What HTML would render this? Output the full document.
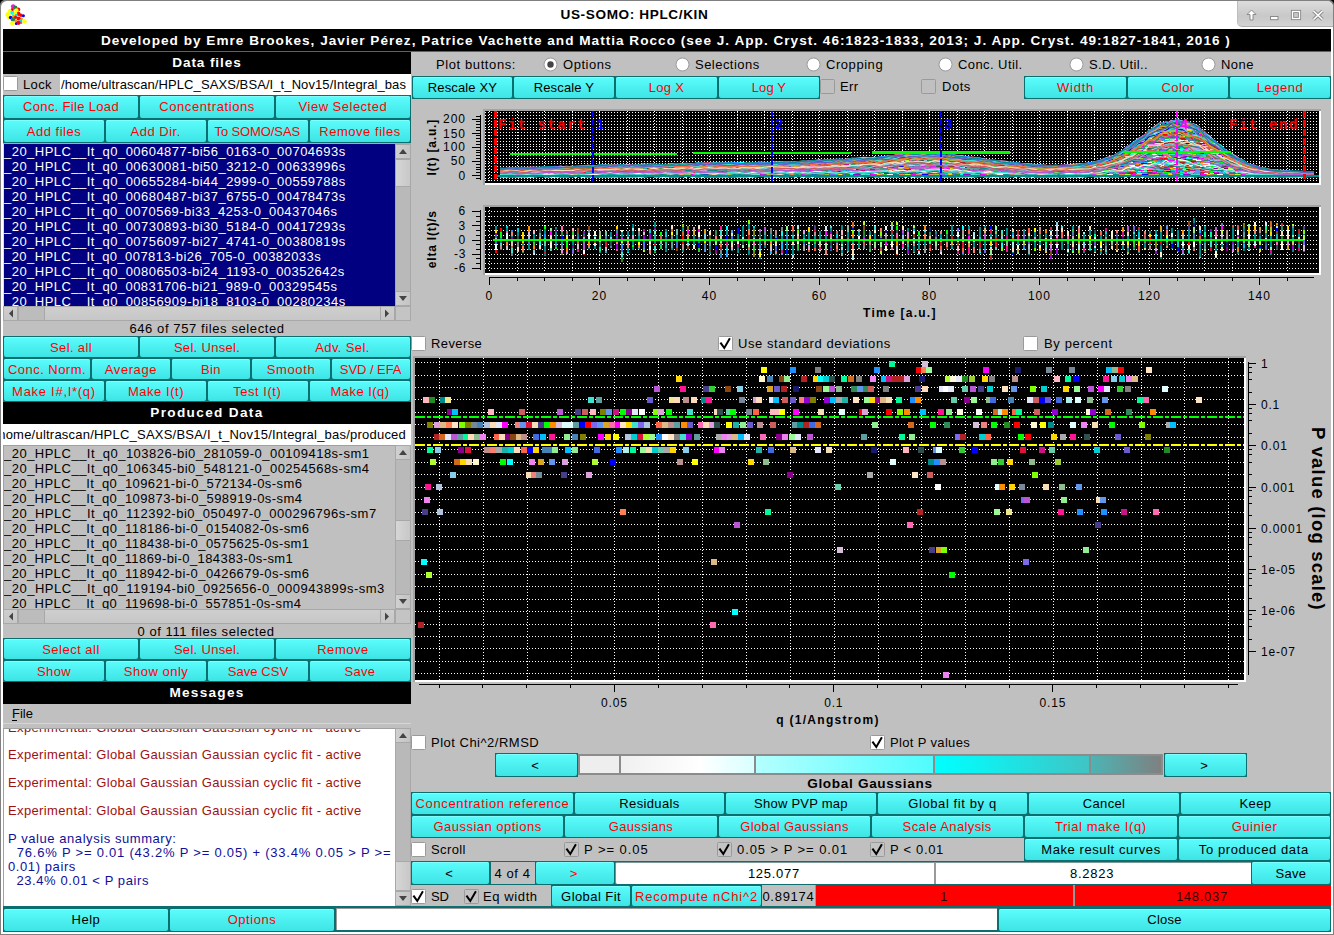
<!DOCTYPE html><html><head><meta charset="utf-8"><style>
html,body{margin:0;padding:0;width:1334px;height:935px;overflow:hidden;background:#7a7a7a}
div{position:absolute}
.t{white-space:pre;font-family:"Liberation Sans",sans-serif;overflow:visible}
.bo{background:#0b6f6f}
.bi{position:absolute;left:1px;top:1px;right:1px;bottom:1px;border-radius:2px;background:linear-gradient(#5cfcfc,#3ee4e4);box-shadow:inset 0 1px 0 #7dffff}
</style></head><body>
<div style="left:0px;top:0px;width:1334px;height:935px;background:#000"></div>
<div style="left:0px;top:0px;width:1334px;height:935px;background:#808080;border-radius:5px 5px 0 0"></div>
<div style="left:1px;top:1px;width:1332px;height:933px;background:#fff;border-radius:6px 6px 0 0"></div>
<div style="left:3px;top:29px;width:1328px;height:903px;background:#c0c0c0"></div>
<div style="left:1237px;top:1px;width:95px;height:25px;background:linear-gradient(#dcdcdc,#c8c8c8 60%,#d4d4d4);border-radius:0 6px 0 5px;border-left:1px solid #bdbdbd;border-bottom:1px solid #b0b0b0"></div>
<svg style="position:absolute;left:1240px;top:4px" width="92" height="22">
<path d="M11.5 6 L7 10.5 L10 10.5 L10 16 L13 16 L13 10.5 L16 10.5 Z" fill="#fff" stroke="#8a8a8a" stroke-width="1"/>
<rect x="30.5" y="12.5" width="7.5" height="3.2" fill="#fff" stroke="#8a8a8a" stroke-width="1"/>
<rect x="52.5" y="7.5" width="7" height="7" fill="#c8c8c8" stroke="#8a8a8a" stroke-width="3.2"/><rect x="52.5" y="7.5" width="7" height="7" fill="none" stroke="#fff" stroke-width="1.3"/>
<path d="M73.5 7 L82.5 15.5 M82.5 7 L73.5 15.5" stroke="#8a8a8a" stroke-width="3.4"/><path d="M73.5 7 L82.5 15.5 M82.5 7 L73.5 15.5" stroke="#fff" stroke-width="1.6"/>
</svg>
<svg style="position:absolute;left:0;top:0" width="32" height="30"><circle cx="13.1" cy="6.4" r="2.1999999999999997" fill="#e020e0"/><circle cx="15.2" cy="7.6" r="2.1999999999999997" fill="#2e7d52"/><circle cx="18.3" cy="9.6" r="2.0" fill="#ff0000"/><circle cx="12.2" cy="9.6" r="1.6" fill="#ff0000"/><circle cx="9.8" cy="10.8" r="1.9000000000000001" fill="#ffff00"/><circle cx="16.5" cy="10.4" r="2.1" fill="#ffff00"/><circle cx="18.5" cy="13.8" r="2.1" fill="#ff0000"/><circle cx="21" cy="15.3" r="1.8" fill="#ff0000"/><circle cx="23.4" cy="15.8" r="1.5" fill="#0000ff"/><circle cx="12.3" cy="12.8" r="2.1" fill="#00ffff"/><circle cx="15.5" cy="13.4" r="1.8" fill="#ffff00"/><circle cx="8" cy="14.4" r="2.5" fill="#ffff00"/><circle cx="16.3" cy="15.4" r="1.6" fill="#00e0e0"/><circle cx="13.5" cy="16" r="1.5" fill="#ff9900"/><circle cx="8.5" cy="18" r="1.5" fill="#ffff00"/><circle cx="10.6" cy="17.5" r="1.8" fill="#0000ff"/><circle cx="15.5" cy="17.3" r="1.6" fill="#ff0000"/><circle cx="21.5" cy="18.8" r="1.4000000000000001" fill="#ff9900"/><circle cx="18.6" cy="18.5" r="2.1" fill="#ff0000"/><circle cx="13" cy="19.5" r="2.3" fill="#2e7d52"/><circle cx="16" cy="20.8" r="1.5" fill="#ff9900"/><circle cx="20.8" cy="20.5" r="1.6" fill="#00e0e0"/><circle cx="21.1" cy="22.8" r="1.3" fill="#6a7aff"/><circle cx="16.3" cy="23.4" r="1.5" fill="#0000ff"/><circle cx="24.5" cy="21.5" r="2.3" fill="#ffff00"/><circle cx="18.5" cy="22.8" r="2.1" fill="#ff0000"/><circle cx="12.4" cy="23.3" r="2.3" fill="#ffff00"/></svg>
<div class="t" style="left:560.5px;top:5.2px;height:19.6px;line-height:19.6px;font-size:13.6px;letter-spacing:0.617px;color:#000;font-weight:bold;">US-SOMO: HPLC/KIN</div>
<div style="left:3px;top:29px;width:1328px;height:22px;background:#000"></div>
<div style="left:3px;top:51px;width:1328px;height:1px;background:#008b8b"></div>
<div class="t" style="left:101.0px;top:30.7px;height:19.6px;line-height:19.6px;font-size:13.6px;letter-spacing:1.011px;color:#fff;font-weight:bold;">Developed by Emre Brookes, Javier Pérez, Patrice Vachette and Mattia Rocco (see J. App. Cryst. 46:1823-1833, 2013; J. App. Cryst. 49:1827-1841, 2016 )</div>
<div style="left:3px;top:52px;width:408px;height:22px;background:#000"></div>
<div class="t" style="left:172.3px;top:53.2px;height:19.6px;line-height:19.6px;font-size:13.6px;letter-spacing:0.883px;color:#fff;font-weight:bold;">Data files</div>
<div style="left:60px;top:74px;width:351px;height:21px;background:#fff;"></div>
<div style="left:3px;top:76px;width:13px;height:13px;border:1px solid #9a9a9a;background:#fff;border-radius:1.5px"></div>
<div class="t" style="left:23.0px;top:74.5px;height:19px;line-height:19px;font-size:13px;letter-spacing:0.385px;color:#000;">Lock</div>
<div class="t" style="left:61.0px;top:74.5px;height:19px;line-height:19px;font-size:13px;letter-spacing:0.089px;color:#000;">/home/ultrascan/HPLC_SAXS/BSA/I_t_Nov15/Integral_bas</div>
<div class="bo" style="left:3px;top:95px;width:136px;height:24px;"><div class="bi" style="top:1px"></div></div>
<div class="t" style="left:23.1px;top:96.5px;height:19px;line-height:19px;font-size:13px;letter-spacing:0.322px;color:#ff0000;">Conc. File Load</div>
<div class="bo" style="left:139px;top:95px;width:136px;height:24px;"><div class="bi" style="top:1px"></div></div>
<div class="t" style="left:159.2px;top:96.5px;height:19px;line-height:19px;font-size:13px;letter-spacing:0.590px;color:#ff0000;">Concentrations</div>
<div class="bo" style="left:275px;top:95px;width:136px;height:24px;"><div class="bi" style="top:1px"></div></div>
<div class="t" style="left:298.6px;top:96.5px;height:19px;line-height:19px;font-size:13px;letter-spacing:0.494px;color:#ff0000;">View Selected</div>
<div class="bo" style="left:3px;top:119px;width:102px;height:24px;"><div class="bi" style="top:1px"></div></div>
<div class="t" style="left:26.8px;top:121.5px;height:19px;line-height:19px;font-size:13px;letter-spacing:0.502px;color:#ff0000;">Add files</div>
<div class="bo" style="left:105px;top:119px;width:102px;height:24px;"><div class="bi" style="top:1px"></div></div>
<div class="t" style="left:130.5px;top:121.5px;height:19px;line-height:19px;font-size:13px;letter-spacing:0.506px;color:#ff0000;">Add Dir.</div>
<div class="bo" style="left:207px;top:119px;width:102px;height:24px;"><div class="bi" style="top:1px"></div></div>
<div class="t" style="left:214.5px;top:121.5px;height:19px;line-height:19px;font-size:13px;letter-spacing:-0.105px;color:#ff0000;">To SOMO/SAS</div>
<div class="bo" style="left:309px;top:119px;width:102px;height:24px;"><div class="bi" style="top:1px"></div></div>
<div class="t" style="left:319.3px;top:121.5px;height:19px;line-height:19px;font-size:13px;letter-spacing:0.527px;color:#ff0000;">Remove files</div>
<div style="left:3px;top:143px;width:408px;height:1px;background:#aaa"></div>
<div style="left:3px;top:144px;width:392px;height:162px;background:#000080;border-left:1px solid #ddd;box-sizing:border-box"></div>
<div style="left:4px;top:144px;width:391px;height:162px;overflow:hidden">
<div class="t" style="left:0.0px;top:-2.0px;height:19px;line-height:19px;font-size:13px;letter-spacing:0.465px;color:#fff;">_20_HPLC__It_q0_00604877-bi56_0163-0_00704693s</div>
<div class="t" style="left:0.0px;top:13.0px;height:19px;line-height:19px;font-size:13px;letter-spacing:0.465px;color:#fff;">_20_HPLC__It_q0_00630081-bi50_3212-0_00633996s</div>
<div class="t" style="left:0.0px;top:28.0px;height:19px;line-height:19px;font-size:13px;letter-spacing:0.465px;color:#fff;">_20_HPLC__It_q0_00655284-bi44_2999-0_00559788s</div>
<div class="t" style="left:0.0px;top:43.0px;height:19px;line-height:19px;font-size:13px;letter-spacing:0.465px;color:#fff;">_20_HPLC__It_q0_00680487-bi37_6755-0_00478473s</div>
<div class="t" style="left:0.0px;top:58.0px;height:19px;line-height:19px;font-size:13px;letter-spacing:0.454px;color:#fff;">_20_HPLC__It_q0_0070569-bi33_4253-0_00437046s</div>
<div class="t" style="left:0.0px;top:73.0px;height:19px;line-height:19px;font-size:13px;letter-spacing:0.465px;color:#fff;">_20_HPLC__It_q0_00730893-bi30_5184-0_00417293s</div>
<div class="t" style="left:0.0px;top:88.0px;height:19px;line-height:19px;font-size:13px;letter-spacing:0.465px;color:#fff;">_20_HPLC__It_q0_00756097-bi27_4741-0_00380819s</div>
<div class="t" style="left:0.0px;top:103.0px;height:19px;line-height:19px;font-size:13px;letter-spacing:0.432px;color:#fff;">_20_HPLC__It_q0_007813-bi26_705-0_00382033s</div>
<div class="t" style="left:0.0px;top:118.0px;height:19px;line-height:19px;font-size:13px;letter-spacing:0.465px;color:#fff;">_20_HPLC__It_q0_00806503-bi24_1193-0_00352642s</div>
<div class="t" style="left:0.0px;top:133.0px;height:19px;line-height:19px;font-size:13px;letter-spacing:0.454px;color:#fff;">_20_HPLC__It_q0_00831706-bi21_989-0_00329545s</div>
<div class="t" style="left:0.0px;top:148.0px;height:19px;line-height:19px;font-size:13px;letter-spacing:0.465px;color:#fff;">_20_HPLC__It_q0_00856909-bi18_8103-0_00280234s</div>
</div>
<div style="left:395px;top:144px;width:16px;height:162px;background:#b9b9b9;border:1px solid #a8a8a8;box-sizing:border-box"></div>
<div style="left:395px;top:144px;width:16px;height:15px;background:linear-gradient(90deg,#d0d0d0,#c4c4c4);border:1px solid #a8a8a8;box-sizing:border-box"></div>
<div style="left:395px;top:291px;width:16px;height:15px;background:linear-gradient(90deg,#d0d0d0,#c4c4c4);border:1px solid #a8a8a8;box-sizing:border-box"></div>
<div style="left:395px;top:159px;width:16px;height:28px;background:linear-gradient(90deg,#d6d6d6,#c8c8c8);border:1px solid #a8a8a8;box-sizing:border-box"></div>
<svg style="position:absolute;left:395px;top:144px" width="16" height="162"><path d="M4.0 10 L12.0 10 L8.0 5 Z" fill="#444"/><path d="M4.0 152 L12.0 152 L8.0 157 Z" fill="#444"/></svg>
<div style="left:3px;top:306px;width:392px;height:15px;background:linear-gradient(#cfcfcf,#c6c6c6)"></div>
<div style="left:3px;top:306px;width:392px;height:15px;border:1px solid #a8a8a8;box-sizing:border-box"></div>
<div style="left:3px;top:306px;width:15px;height:15px;border:1px solid #a8a8a8;box-sizing:border-box"></div>
<div style="left:380px;top:306px;width:15px;height:15px;border:1px solid #a8a8a8;box-sizing:border-box"></div>
<div style="left:18px;top:306px;width:27px;height:15px;background:#bcbcbc;border:1px solid #a8a8a8;box-sizing:border-box"></div>
<svg style="position:absolute;left:3px;top:306px" width="392" height="15"><path d="M6 7.5 L10 3.5 L10 11.5 Z" fill="#444"/><path d="M386 7.5 L382 3.5 L382 11.5 Z" fill="#444"/></svg>
<div style="left:395px;top:306px;width:16px;height:15px;background:#c4c4c4;border:1px solid #a8a8a8;box-sizing:border-box"></div>
<div class="t" style="left:129.4px;top:319.0px;height:19px;line-height:19px;font-size:13px;letter-spacing:0.600px;color:#000;">646 of 757 files selected</div>
<div class="bo" style="left:3px;top:336px;width:136px;height:22px;"><div class="bi" style="top:1px"></div></div>
<div class="t" style="left:50.0px;top:337.5px;height:19px;line-height:19px;font-size:13px;letter-spacing:0.371px;color:#ff0000;">Sel. all</div>
<div class="bo" style="left:139px;top:336px;width:136px;height:22px;"><div class="bi" style="top:1px"></div></div>
<div class="t" style="left:173.9px;top:337.5px;height:19px;line-height:19px;font-size:13px;letter-spacing:0.312px;color:#ff0000;">Sel. Unsel.</div>
<div class="bo" style="left:275px;top:336px;width:136px;height:22px;"><div class="bi" style="top:1px"></div></div>
<div class="t" style="left:315.3px;top:337.5px;height:19px;line-height:19px;font-size:13px;letter-spacing:0.368px;color:#ff0000;">Adv. Sel.</div>
<div class="bo" style="left:3px;top:358px;width:88px;height:22px;"><div class="bi" style="top:1px"></div></div>
<div class="t" style="left:8.0px;top:359.5px;height:19px;line-height:19px;font-size:13px;letter-spacing:0.460px;color:#ff0000;">Conc. Norm.</div>
<div class="bo" style="left:91px;top:358px;width:80px;height:22px;"><div class="bi" style="top:1px"></div></div>
<div class="t" style="left:104.8px;top:359.5px;height:19px;line-height:19px;font-size:13px;letter-spacing:0.580px;color:#ff0000;">Average</div>
<div class="bo" style="left:171px;top:358px;width:80px;height:22px;"><div class="bi" style="top:1px"></div></div>
<div class="t" style="left:200.9px;top:359.5px;height:19px;line-height:19px;font-size:13px;letter-spacing:0.447px;color:#ff0000;">Bin</div>
<div class="bo" style="left:251px;top:358px;width:80px;height:22px;"><div class="bi" style="top:1px"></div></div>
<div class="t" style="left:266.7px;top:359.5px;height:19px;line-height:19px;font-size:13px;letter-spacing:0.636px;color:#ff0000;">Smooth</div>
<div class="bo" style="left:331px;top:358px;width:80px;height:22px;"><div class="bi" style="top:1px"></div></div>
<div class="t" style="left:339.8px;top:359.5px;height:19px;line-height:19px;font-size:13px;letter-spacing:-0.049px;color:#ff0000;">SVD / EFA</div>
<div class="bo" style="left:3px;top:380px;width:102px;height:22px;"><div class="bi" style="top:1px"></div></div>
<div class="t" style="left:12.1px;top:381.5px;height:19px;line-height:19px;font-size:13px;letter-spacing:0.720px;color:#ff0000;">Make I#,I*(q)</div>
<div class="bo" style="left:105px;top:380px;width:102px;height:22px;"><div class="bi" style="top:1px"></div></div>
<div class="t" style="left:127.9px;top:381.5px;height:19px;line-height:19px;font-size:13px;letter-spacing:0.539px;color:#ff0000;">Make I(t)</div>
<div class="bo" style="left:207px;top:380px;width:102px;height:22px;"><div class="bi" style="top:1px"></div></div>
<div class="t" style="left:233.3px;top:381.5px;height:19px;line-height:19px;font-size:13px;letter-spacing:0.519px;color:#ff0000;">Test I(t)</div>
<div class="bo" style="left:309px;top:380px;width:102px;height:22px;"><div class="bi" style="top:1px"></div></div>
<div class="t" style="left:330.4px;top:381.5px;height:19px;line-height:19px;font-size:13px;letter-spacing:0.477px;color:#ff0000;">Make I(q)</div>
<div style="left:3px;top:402px;width:408px;height:22px;background:#000"></div>
<div class="t" style="left:150.3px;top:403.2px;height:19.6px;line-height:19.6px;font-size:13.6px;letter-spacing:1.335px;color:#fff;font-weight:bold;">Produced Data</div>
<div style="left:3px;top:424px;width:408px;height:21px;background:#fff;"></div>
<div style="left:3px;top:424px;width:408px;height:21px;overflow:hidden">
<div class="t" style="left:-4.8px;top:1.0px;height:19px;line-height:19px;font-size:13px;letter-spacing:0.221px;color:#000;">home/ultrascan/HPLC_SAXS/BSA/I_t_Nov15/Integral_bas/produced</div>
</div>
<div style="left:3px;top:445px;width:392px;height:164px;background:#c0c0c0;border:1px solid #a0a0a0;border-right:none;border-bottom:none;box-sizing:border-box"></div>
<div style="left:4px;top:446px;width:391px;height:163px;overflow:hidden">
<div class="t" style="left:0.0px;top:-2.5px;height:19px;line-height:19px;font-size:13px;letter-spacing:0.480px;color:#000;">_20_HPLC__It_q0_103826-bi0_281059-0_00109418s-sm1</div>
<div class="t" style="left:0.0px;top:12.5px;height:19px;line-height:19px;font-size:13px;letter-spacing:0.480px;color:#000;">_20_HPLC__It_q0_106345-bi0_548121-0_00254568s-sm4</div>
<div class="t" style="left:0.0px;top:27.5px;height:19px;line-height:19px;font-size:13px;letter-spacing:0.419px;color:#000;">_20_HPLC__It_q0_109621-bi-0_572134-0s-sm6</div>
<div class="t" style="left:0.0px;top:42.5px;height:19px;line-height:19px;font-size:13px;letter-spacing:0.419px;color:#000;">_20_HPLC__It_q0_109873-bi-0_598919-0s-sm4</div>
<div class="t" style="left:0.0px;top:57.5px;height:19px;line-height:19px;font-size:13px;letter-spacing:0.489px;color:#000;">_20_HPLC__It_q0_112392-bi0_050497-0_000296796s-sm7</div>
<div class="t" style="left:0.0px;top:72.5px;height:19px;line-height:19px;font-size:13px;letter-spacing:0.431px;color:#000;">_20_HPLC__It_q0_118186-bi-0_0154082-0s-sm6</div>
<div class="t" style="left:0.0px;top:87.5px;height:19px;line-height:19px;font-size:13px;letter-spacing:0.431px;color:#000;">_20_HPLC__It_q0_118438-bi-0_0575625-0s-sm1</div>
<div class="t" style="left:0.0px;top:102.5px;height:19px;line-height:19px;font-size:13px;letter-spacing:0.406px;color:#000;">_20_HPLC__It_q0_11869-bi-0_184383-0s-sm1</div>
<div class="t" style="left:0.0px;top:117.5px;height:19px;line-height:19px;font-size:13px;letter-spacing:0.431px;color:#000;">_20_HPLC__It_q0_118942-bi-0_0426679-0s-sm6</div>
<div class="t" style="left:0.0px;top:132.5px;height:19px;line-height:19px;font-size:13px;letter-spacing:0.498px;color:#000;">_20_HPLC__It_q0_119194-bi0_0925656-0_000943899s-sm3</div>
<div class="t" style="left:0.0px;top:147.5px;height:19px;line-height:19px;font-size:13px;letter-spacing:0.419px;color:#000;">_20_HPLC__It_q0_119698-bi-0_557851-0s-sm4</div>
</div>
<div style="left:395px;top:445px;width:16px;height:164px;background:#b9b9b9;border:1px solid #a8a8a8;box-sizing:border-box"></div>
<div style="left:395px;top:445px;width:16px;height:15px;background:linear-gradient(90deg,#d0d0d0,#c4c4c4);border:1px solid #a8a8a8;box-sizing:border-box"></div>
<div style="left:395px;top:594px;width:16px;height:15px;background:linear-gradient(90deg,#d0d0d0,#c4c4c4);border:1px solid #a8a8a8;box-sizing:border-box"></div>
<div style="left:395px;top:520px;width:16px;height:21px;background:linear-gradient(90deg,#d6d6d6,#c8c8c8);border:1px solid #a8a8a8;box-sizing:border-box"></div>
<svg style="position:absolute;left:395px;top:445px" width="16" height="164"><path d="M4.0 10 L12.0 10 L8.0 5 Z" fill="#444"/><path d="M4.0 154 L12.0 154 L8.0 159 Z" fill="#444"/></svg>
<div style="left:3px;top:609px;width:392px;height:15px;background:linear-gradient(#cfcfcf,#c6c6c6)"></div>
<div style="left:3px;top:609px;width:392px;height:15px;border:1px solid #a8a8a8;box-sizing:border-box"></div>
<div style="left:3px;top:609px;width:15px;height:15px;border:1px solid #a8a8a8;box-sizing:border-box"></div>
<div style="left:380px;top:609px;width:15px;height:15px;border:1px solid #a8a8a8;box-sizing:border-box"></div>
<div style="left:18px;top:609px;width:27px;height:15px;background:#bcbcbc;border:1px solid #a8a8a8;box-sizing:border-box"></div>
<svg style="position:absolute;left:3px;top:609px" width="392" height="15"><path d="M6 7.5 L10 3.5 L10 11.5 Z" fill="#444"/><path d="M386 7.5 L382 3.5 L382 11.5 Z" fill="#444"/></svg>
<div style="left:395px;top:609px;width:16px;height:15px;background:#c4c4c4;border:1px solid #a8a8a8;box-sizing:border-box"></div>
<div class="t" style="left:137.4px;top:621.5px;height:19px;line-height:19px;font-size:13px;letter-spacing:0.584px;color:#000;">0 of 111 files selected</div>
<div class="bo" style="left:3px;top:638px;width:136px;height:22px;"><div class="bi" style="top:1px"></div></div>
<div class="t" style="left:42.2px;top:639.5px;height:19px;line-height:19px;font-size:13px;letter-spacing:0.485px;color:#ff0000;">Select all</div>
<div class="bo" style="left:139px;top:638px;width:136px;height:22px;"><div class="bi" style="top:1px"></div></div>
<div class="t" style="left:173.9px;top:639.5px;height:19px;line-height:19px;font-size:13px;letter-spacing:0.312px;color:#ff0000;">Sel. Unsel.</div>
<div class="bo" style="left:275px;top:638px;width:136px;height:22px;"><div class="bi" style="top:1px"></div></div>
<div class="t" style="left:317.2px;top:639.5px;height:19px;line-height:19px;font-size:13px;letter-spacing:0.548px;color:#ff0000;">Remove</div>
<div class="bo" style="left:3px;top:660px;width:102px;height:22px;"><div class="bi" style="top:1px"></div></div>
<div class="t" style="left:37.0px;top:661.5px;height:19px;line-height:19px;font-size:13px;letter-spacing:0.370px;color:#ff0000;">Show</div>
<div class="bo" style="left:105px;top:660px;width:102px;height:22px;"><div class="bi" style="top:1px"></div></div>
<div class="t" style="left:123.7px;top:661.5px;height:19px;line-height:19px;font-size:13px;letter-spacing:0.520px;color:#ff0000;">Show only</div>
<div class="bo" style="left:207px;top:660px;width:102px;height:22px;"><div class="bi" style="top:1px"></div></div>
<div class="t" style="left:227.8px;top:661.5px;height:19px;line-height:19px;font-size:13px;letter-spacing:0.047px;color:#ff0000;">Save CSV</div>
<div class="bo" style="left:309px;top:660px;width:102px;height:22px;"><div class="bi" style="top:1px"></div></div>
<div class="t" style="left:344.5px;top:661.5px;height:19px;line-height:19px;font-size:13px;letter-spacing:0.324px;color:#ff0000;">Save</div>
<div style="left:3px;top:682px;width:408px;height:22px;background:#000"></div>
<div class="t" style="left:169.4px;top:683.2px;height:19.6px;line-height:19.6px;font-size:13.6px;letter-spacing:1.270px;color:#fff;font-weight:bold;">Messages</div>
<div class="t" style="left:12.0px;top:704.0px;height:19px;line-height:19px;font-size:13px;letter-spacing:0.013px;color:#000;">File</div>
<div style="left:12px;top:720px;width:5px;height:1px;background:#000"></div>
<div style="left:3px;top:723px;width:408px;height:1px;background:#d6d6d6"></div>
<div style="left:3px;top:728px;width:392px;height:178px;background:#fff;border:1px solid #a0a0a0;border-right:none;border-bottom:none;box-sizing:border-box"></div>
<div style="left:395px;top:728px;width:16px;height:178px;background:#b9b9b9;border:1px solid #a8a8a8;box-sizing:border-box"></div>
<div style="left:395px;top:728px;width:16px;height:15px;background:linear-gradient(90deg,#d0d0d0,#c4c4c4);border:1px solid #a8a8a8;box-sizing:border-box"></div>
<div style="left:395px;top:891px;width:16px;height:15px;background:linear-gradient(90deg,#d0d0d0,#c4c4c4);border:1px solid #a8a8a8;box-sizing:border-box"></div>
<div style="left:395px;top:861px;width:16px;height:30px;background:linear-gradient(90deg,#d6d6d6,#c8c8c8);border:1px solid #a8a8a8;box-sizing:border-box"></div>
<svg style="position:absolute;left:395px;top:728px" width="16" height="178"><path d="M4.0 10 L12.0 10 L8.0 5 Z" fill="#444"/><path d="M4.0 168 L12.0 168 L8.0 173 Z" fill="#444"/></svg>
<div style="left:4px;top:729px;width:391px;height:177px;overflow:hidden">
<div class="t" style="left:4.0px;top:-11.5px;height:19px;line-height:19px;font-size:13px;letter-spacing:0.366px;color:#a01010;">Experimental: Global Gaussian Gaussian cyclic fit - active</div>
<div class="t" style="left:4.0px;top:15.5px;height:19px;line-height:19px;font-size:13px;letter-spacing:0.366px;color:#a01010;">Experimental: Global Gaussian Gaussian cyclic fit - active</div>
<div class="t" style="left:4.0px;top:43.5px;height:19px;line-height:19px;font-size:13px;letter-spacing:0.366px;color:#a01010;">Experimental: Global Gaussian Gaussian cyclic fit - active</div>
<div class="t" style="left:4.0px;top:71.5px;height:19px;line-height:19px;font-size:13px;letter-spacing:0.366px;color:#a01010;">Experimental: Global Gaussian Gaussian cyclic fit - active</div>
<div class="t" style="left:4.0px;top:99.5px;height:19px;line-height:19px;font-size:13px;letter-spacing:0.565px;color:#10109a;">P value analysis summary:</div>
<div class="t" style="left:4.0px;top:113.5px;height:19px;line-height:19px;font-size:13px;letter-spacing:0.779px;color:#10109a;">  76.6% P &gt;= 0.01 (43.2% P &gt;= 0.05) + (33.4% 0.05 &gt; P &gt;=</div>
<div class="t" style="left:4.0px;top:127.5px;height:19px;line-height:19px;font-size:13px;letter-spacing:0.593px;color:#10109a;">0.01) pairs</div>
<div class="t" style="left:4.0px;top:141.5px;height:19px;line-height:19px;font-size:13px;letter-spacing:0.589px;color:#10109a;">  23.4% 0.01 &lt; P pairs</div>
</div>
<div class="t" style="left:436.0px;top:54.5px;height:19px;line-height:19px;font-size:13px;letter-spacing:0.595px;color:#000;">Plot buttons:</div>
<svg style="position:absolute;left:543px;top:57px" width="15" height="15"><circle cx="7.5" cy="7.5" r="6.5" fill="#fff" stroke="#9a9a9a" stroke-width="1"/><circle cx=7.5 cy=7.5 r=3.2 fill=#444 /></svg>
<div class="t" style="left:563.0px;top:54.5px;height:19px;line-height:19px;font-size:13px;letter-spacing:0.545px;color:#000;">Options</div>
<svg style="position:absolute;left:675px;top:57px" width="15" height="15"><circle cx="7.5" cy="7.5" r="6.5" fill="#fff" stroke="#9a9a9a" stroke-width="1"/></svg>
<div class="t" style="left:695.0px;top:54.5px;height:19px;line-height:19px;font-size:13px;letter-spacing:0.465px;color:#000;">Selections</div>
<svg style="position:absolute;left:806px;top:57px" width="15" height="15"><circle cx="7.5" cy="7.5" r="6.5" fill="#fff" stroke="#9a9a9a" stroke-width="1"/></svg>
<div class="t" style="left:826.0px;top:54.5px;height:19px;line-height:19px;font-size:13px;letter-spacing:0.552px;color:#000;">Cropping</div>
<svg style="position:absolute;left:938px;top:57px" width="15" height="15"><circle cx="7.5" cy="7.5" r="6.5" fill="#fff" stroke="#9a9a9a" stroke-width="1"/></svg>
<div class="t" style="left:958.0px;top:54.5px;height:19px;line-height:19px;font-size:13px;letter-spacing:0.422px;color:#000;">Conc. Util.</div>
<svg style="position:absolute;left:1069px;top:57px" width="15" height="15"><circle cx="7.5" cy="7.5" r="6.5" fill="#fff" stroke="#9a9a9a" stroke-width="1"/></svg>
<div class="t" style="left:1089.0px;top:54.5px;height:19px;line-height:19px;font-size:13px;letter-spacing:0.363px;color:#000;">S.D. Util..</div>
<svg style="position:absolute;left:1201px;top:57px" width="15" height="15"><circle cx="7.5" cy="7.5" r="6.5" fill="#fff" stroke="#9a9a9a" stroke-width="1"/></svg>
<div class="t" style="left:1221.0px;top:54.5px;height:19px;line-height:19px;font-size:13px;letter-spacing:0.448px;color:#000;">None</div>
<div class="bo" style="left:412px;top:76px;width:101px;height:23px;"><div class="bi" style="top:1px"></div></div>
<div class="t" style="left:427.8px;top:78.0px;height:19px;line-height:19px;font-size:13px;letter-spacing:0.139px;color:#000;">Rescale XY</div>
<div class="bo" style="left:513px;top:76px;width:102px;height:23px;"><div class="bi" style="top:1px"></div></div>
<div class="t" style="left:533.7px;top:78.0px;height:19px;line-height:19px;font-size:13px;letter-spacing:0.158px;color:#000;">Rescale Y</div>
<div class="bo" style="left:615px;top:76px;width:103px;height:23px;"><div class="bi" style="top:1px"></div></div>
<div class="t" style="left:648.8px;top:78.0px;height:19px;line-height:19px;font-size:13px;letter-spacing:0.278px;color:#ff0000;">Log X</div>
<div class="bo" style="left:718px;top:76px;width:102px;height:23px;"><div class="bi" style="top:1px"></div></div>
<div class="t" style="left:751.8px;top:78.0px;height:19px;line-height:19px;font-size:13px;letter-spacing:0.091px;color:#ff0000;">Log Y</div>
<div style="left:820px;top:79px;width:13px;height:13px;border:1px solid #9a9a9a;background:transparent;border-radius:1.5px"></div>
<div class="t" style="left:840.0px;top:77.0px;height:19px;line-height:19px;font-size:13px;letter-spacing:0.331px;color:#000;">Err</div>
<div style="left:921px;top:79px;width:13px;height:13px;border:1px solid #9a9a9a;background:transparent;border-radius:1.5px"></div>
<div class="t" style="left:942.0px;top:77.0px;height:19px;line-height:19px;font-size:13px;letter-spacing:0.547px;color:#000;">Dots</div>
<div class="bo" style="left:1024px;top:76px;width:103px;height:23px;"><div class="bi" style="top:1px"></div></div>
<div class="t" style="left:1057.1px;top:78.0px;height:19px;line-height:19px;font-size:13px;letter-spacing:0.731px;color:#ff0000;">Width</div>
<div class="bo" style="left:1127px;top:76px;width:102px;height:23px;"><div class="bi" style="top:1px"></div></div>
<div class="t" style="left:1161.6px;top:78.0px;height:19px;line-height:19px;font-size:13px;letter-spacing:0.366px;color:#ff0000;">Color</div>
<div class="bo" style="left:1229px;top:76px;width:102px;height:23px;"><div class="bi" style="top:1px"></div></div>
<div class="t" style="left:1256.7px;top:78.0px;height:19px;line-height:19px;font-size:13px;letter-spacing:0.521px;color:#ff0000;">Legend</div>
<div style="left:411px;top:336px;width:13px;height:13px;border:1px solid #9a9a9a;background:#fff;border-radius:1.5px"></div>
<div class="t" style="left:431.0px;top:333.5px;height:19px;line-height:19px;font-size:13px;letter-spacing:0.401px;color:#000;">Reverse</div>
<div style="left:718px;top:336px;width:13px;height:13px;border:1px solid #9a9a9a;background:#fff;border-radius:1.5px"></div>
<svg style="position:absolute;left:718px;top:336px" width="15" height="15"><path d="M3 7.4 L6.3 12 L11.4 3.2" stroke="#000" stroke-width="2" fill="none" stroke-linecap="square"/></svg>
<div class="t" style="left:738.0px;top:333.5px;height:19px;line-height:19px;font-size:13px;letter-spacing:0.579px;color:#000;">Use standard deviations</div>
<div style="left:1023px;top:336px;width:13px;height:13px;border:1px solid #9a9a9a;background:#fff;border-radius:1.5px"></div>
<div class="t" style="left:1044.0px;top:333.5px;height:19px;line-height:19px;font-size:13px;letter-spacing:0.650px;color:#000;">By percent</div>
<div style="left:411px;top:735px;width:13px;height:13px;border:1px solid #9a9a9a;background:#fff;border-radius:1.5px"></div>
<div class="t" style="left:431.0px;top:732.5px;height:19px;line-height:19px;font-size:13px;letter-spacing:0.496px;color:#000;">Plot Chi^2/RMSD</div>
<div style="left:870px;top:735px;width:13px;height:13px;border:1px solid #9a9a9a;background:#fff;border-radius:1.5px"></div>
<svg style="position:absolute;left:870px;top:735px" width="15" height="15"><path d="M3 7.4 L6.3 12 L11.4 3.2" stroke="#000" stroke-width="2" fill="none" stroke-linecap="square"/></svg>
<div class="t" style="left:890.0px;top:732.5px;height:19px;line-height:19px;font-size:13px;letter-spacing:0.343px;color:#000;">Plot P values</div>
<div class="bo" style="left:495px;top:753px;width:83px;height:24px;"><div class="bi" style="top:1px"></div></div>
<div class="t" style="left:531.2px;top:755.5px;height:19px;line-height:19px;font-size:13px;letter-spacing:2.966px;color:#000;">&lt;</div>
<div style="left:578px;top:754px;width:585px;height:21px;background:#8c8c8c"></div>
<div style="left:580px;top:756px;width:39px;height:17px;background:#eeeeee"></div>
<div style="left:621px;top:756px;width:133px;height:17px;background:linear-gradient(90deg,#f0f0f0,#ffffff 60%,#d8ffff)"></div>
<div style="left:756px;top:756px;width:177px;height:17px;background:linear-gradient(90deg,#b4ffff,#50fcfc)"></div>
<div style="left:935px;top:756px;width:154px;height:17px;background:linear-gradient(90deg,#00ffff,#10f0f0 30%,#40c4c4)"></div>
<div style="left:1091px;top:756px;width:70px;height:17px;background:linear-gradient(90deg,#4cb4b4,#808080)"></div>
<div class="bo" style="left:1164px;top:753px;width:83px;height:24px;"><div class="bi" style="top:1px"></div></div>
<div class="t" style="left:1200.2px;top:755.5px;height:19px;line-height:19px;font-size:13px;letter-spacing:2.966px;color:#000;">&gt;</div>
<div class="t" style="left:807.2px;top:774.2px;height:19.6px;line-height:19.6px;font-size:13.6px;letter-spacing:0.664px;color:#000;font-weight:bold;">Global Gaussians</div>
<div class="bo" style="left:411px;top:792px;width:163px;height:23px;"><div class="bi" style="top:1px"></div></div>
<div class="t" style="left:415.6px;top:794.0px;height:19px;line-height:19px;font-size:13px;letter-spacing:0.626px;color:#ff0000;">Concentration reference</div>
<div class="bo" style="left:574px;top:792px;width:151px;height:23px;"><div class="bi" style="top:1px"></div></div>
<div class="t" style="left:619.3px;top:794.0px;height:19px;line-height:19px;font-size:13px;letter-spacing:0.362px;color:#000;">Residuals</div>
<div class="bo" style="left:725px;top:792px;width:152px;height:23px;"><div class="bi" style="top:1px"></div></div>
<div class="t" style="left:754.1px;top:794.0px;height:19px;line-height:19px;font-size:13px;letter-spacing:0.231px;color:#000;">Show PVP map</div>
<div class="bo" style="left:877px;top:792px;width:151px;height:23px;"><div class="bi" style="top:1px"></div></div>
<div class="t" style="left:908.2px;top:794.0px;height:19px;line-height:19px;font-size:13px;letter-spacing:0.604px;color:#000;">Global fit by q</div>
<div class="bo" style="left:1028px;top:792px;width:152px;height:23px;"><div class="bi" style="top:1px"></div></div>
<div class="t" style="left:1082.7px;top:794.0px;height:19px;line-height:19px;font-size:13px;letter-spacing:0.370px;color:#000;">Cancel</div>
<div class="bo" style="left:1180px;top:792px;width:151px;height:23px;"><div class="bi" style="top:1px"></div></div>
<div class="t" style="left:1239.6px;top:794.0px;height:19px;line-height:19px;font-size:13px;letter-spacing:0.351px;color:#000;">Keep</div>
<div class="bo" style="left:411px;top:815px;width:153px;height:23px;"><div class="bi" style="top:1px"></div></div>
<div class="t" style="left:433.4px;top:817.0px;height:19px;line-height:19px;font-size:13px;letter-spacing:0.486px;color:#ff0000;">Gaussian options</div>
<div class="bo" style="left:564px;top:815px;width:154px;height:23px;"><div class="bi" style="top:1px"></div></div>
<div class="t" style="left:608.8px;top:817.0px;height:19px;line-height:19px;font-size:13px;letter-spacing:0.328px;color:#ff0000;">Gaussians</div>
<div class="bo" style="left:718px;top:815px;width:153px;height:23px;"><div class="bi" style="top:1px"></div></div>
<div class="t" style="left:740.2px;top:817.0px;height:19px;line-height:19px;font-size:13px;letter-spacing:0.373px;color:#ff0000;">Global Gaussians</div>
<div class="bo" style="left:871px;top:815px;width:153px;height:23px;"><div class="bi" style="top:1px"></div></div>
<div class="t" style="left:902.6px;top:817.0px;height:19px;line-height:19px;font-size:13px;letter-spacing:0.377px;color:#ff0000;">Scale Analysis</div>
<div class="bo" style="left:1024px;top:815px;width:154px;height:23px;"><div class="bi" style="top:1px"></div></div>
<div class="t" style="left:1054.9px;top:817.0px;height:19px;line-height:19px;font-size:13px;letter-spacing:0.561px;color:#ff0000;">Trial make I(q)</div>
<div class="bo" style="left:1178px;top:815px;width:153px;height:23px;"><div class="bi" style="top:1px"></div></div>
<div class="t" style="left:1231.7px;top:817.0px;height:19px;line-height:19px;font-size:13px;letter-spacing:0.537px;color:#ff0000;">Guinier</div>
<div style="left:411px;top:842px;width:13px;height:13px;border:1px solid #9a9a9a;background:#fff;border-radius:1.5px"></div>
<div class="t" style="left:431.0px;top:840.0px;height:19px;line-height:19px;font-size:13px;letter-spacing:0.385px;color:#000;">Scroll</div>
<div style="left:564px;top:842px;width:13px;height:13px;border:1px solid #9a9a9a;background:#c4c4c4;border-radius:1.5px"></div>
<svg style="position:absolute;left:564px;top:842px" width="15" height="15"><path d="M3 7.4 L6.3 12 L11.4 3.2" stroke="#000" stroke-width="2" fill="none" stroke-linecap="square"/></svg>
<div class="t" style="left:584.0px;top:840.0px;height:19px;line-height:19px;font-size:13px;letter-spacing:0.933px;color:#000;">P &gt;= 0.05</div>
<div style="left:717px;top:842px;width:13px;height:13px;border:1px solid #9a9a9a;background:#c4c4c4;border-radius:1.5px"></div>
<svg style="position:absolute;left:717px;top:842px" width="15" height="15"><path d="M3 7.4 L6.3 12 L11.4 3.2" stroke="#000" stroke-width="2" fill="none" stroke-linecap="square"/></svg>
<div class="t" style="left:737.0px;top:840.0px;height:19px;line-height:19px;font-size:13px;letter-spacing:0.931px;color:#000;">0.05 &gt; P &gt;= 0.01</div>
<div style="left:870px;top:842px;width:13px;height:13px;border:1px solid #9a9a9a;background:#c4c4c4;border-radius:1.5px"></div>
<svg style="position:absolute;left:870px;top:842px" width="15" height="15"><path d="M3 7.4 L6.3 12 L11.4 3.2" stroke="#000" stroke-width="2" fill="none" stroke-linecap="square"/></svg>
<div class="t" style="left:890.0px;top:840.0px;height:19px;line-height:19px;font-size:13px;letter-spacing:0.679px;color:#000;">P &lt; 0.01</div>
<div class="bo" style="left:1024px;top:838px;width:154px;height:23px;"><div class="bi" style="top:1px"></div></div>
<div class="t" style="left:1041.3px;top:840.0px;height:19px;line-height:19px;font-size:13px;letter-spacing:0.575px;color:#000;">Make result curves</div>
<div class="bo" style="left:1178px;top:838px;width:153px;height:23px;"><div class="bi" style="top:1px"></div></div>
<div class="t" style="left:1198.8px;top:840.0px;height:19px;line-height:19px;font-size:13px;letter-spacing:0.590px;color:#000;">To produced data</div>
<div style="left:411px;top:861px;width:920px;height:24px;background:#0b6f6f"></div>
<div class="bo" style="left:411px;top:861px;width:79px;height:24px;"><div class="bi" style="top:1px"></div></div>
<div class="t" style="left:445.2px;top:863.5px;height:19px;line-height:19px;font-size:13px;letter-spacing:2.966px;color:#000;">&lt;</div>
<div style="left:491px;top:862px;width:44px;height:22px;background:#c0c0c0"></div>
<div class="t" style="left:494.4px;top:863.5px;height:19px;line-height:19px;font-size:13px;letter-spacing:0.610px;color:#000;">4 of 4</div>
<div class="bo" style="left:535px;top:861px;width:80px;height:24px;"><div class="bi" style="top:1px"></div></div>
<div class="t" style="left:569.7px;top:863.5px;height:19px;line-height:19px;font-size:13px;letter-spacing:2.966px;color:#ff0000;">&gt;</div>
<div style="left:615px;top:862px;width:319px;height:22px;background:#fff;border-left:1px solid #8a8a8a;border-top:1px solid #7a9a9a;border-radius:2px 0 0 2px;box-sizing:border-box"></div>
<div class="t" style="left:747.9px;top:863.5px;height:19px;line-height:19px;font-size:13px;letter-spacing:0.730px;color:#000;">125.077</div>
<div style="left:934px;top:862px;width:317px;height:22px;background:#fff;border-left:2px solid #9a9a9a;border-top:1px solid #7a9a9a;box-sizing:border-box"></div>
<div class="t" style="left:1070.0px;top:863.5px;height:19px;line-height:19px;font-size:13px;letter-spacing:0.721px;color:#000;">8.2823</div>
<div class="bo" style="left:1251px;top:861px;width:80px;height:24px;"><div class="bi" style="top:1px"></div></div>
<div class="t" style="left:1275.5px;top:863.5px;height:19px;line-height:19px;font-size:13px;letter-spacing:0.324px;color:#000;">Save</div>
<div style="left:411px;top:889px;width:13px;height:13px;border:1px solid #9a9a9a;background:#fff;border-radius:1.5px"></div>
<svg style="position:absolute;left:411px;top:889px" width="15" height="15"><path d="M3 7.4 L6.3 12 L11.4 3.2" stroke="#000" stroke-width="2" fill="none" stroke-linecap="square"/></svg>
<div class="t" style="left:431.0px;top:886.5px;height:19px;line-height:19px;font-size:13px;letter-spacing:-0.179px;color:#000;">SD</div>
<div style="left:464px;top:889px;width:13px;height:13px;border:1px solid #9a9a9a;background:#c4c4c4;border-radius:1.5px"></div>
<svg style="position:absolute;left:464px;top:889px" width="15" height="15"><path d="M3 7.4 L6.3 12 L11.4 3.2" stroke="#000" stroke-width="2" fill="none" stroke-linecap="square"/></svg>
<div class="t" style="left:483.0px;top:886.5px;height:19px;line-height:19px;font-size:13px;letter-spacing:0.604px;color:#000;">Eq width</div>
<div class="bo" style="left:551px;top:885px;width:80px;height:22px;"><div class="bi" style="top:1px"></div></div>
<div class="t" style="left:561.1px;top:886.5px;height:19px;line-height:19px;font-size:13px;letter-spacing:0.426px;color:#000;">Global Fit</div>
<div class="bo" style="left:631px;top:885px;width:131px;height:22px;"><div class="bi" style="top:1px"></div></div>
<div class="t" style="left:635.0px;top:886.5px;height:19px;line-height:19px;font-size:13px;letter-spacing:0.799px;color:#ff0000;">Recompute nChi^2</div>
<div class="t" style="left:762.4px;top:886.5px;height:19px;line-height:19px;font-size:13px;letter-spacing:0.730px;color:#000;">0.89174</div>
<div style="left:815px;top:885px;width:258px;height:22px;background:#ff0000;border-left:1px solid #999;box-sizing:border-box"></div>
<div class="t" style="left:940.0px;top:886.5px;height:19px;line-height:19px;font-size:13px;letter-spacing:0.787px;color:#300;">1</div>
<div style="left:1073px;top:885px;width:258px;height:22px;background:#ff0000;border-left:2px solid #999;box-sizing:border-box"></div>
<div class="t" style="left:1175.9px;top:886.5px;height:19px;line-height:19px;font-size:13px;letter-spacing:0.730px;color:#300;">148.037</div>
<div style="left:3px;top:906px;width:1328px;height:26px;background:#0b6f6f"></div>
<div class="bo" style="left:3px;top:906px;width:166px;height:26px;"><div class="bi" style="top:3px"></div></div>
<div class="t" style="left:71.6px;top:910.0px;height:19px;line-height:19px;font-size:13px;letter-spacing:0.497px;color:#000;">Help</div>
<div class="bo" style="left:169px;top:906px;width:166px;height:26px;"><div class="bi" style="top:3px"></div></div>
<div class="t" style="left:227.7px;top:910.0px;height:19px;line-height:19px;font-size:13px;letter-spacing:0.545px;color:#ff0000;">Options</div>
<div style="left:336px;top:908px;width:661px;height:22px;background:#fff;border-top:1px solid #999;border-left:1px solid #999;box-sizing:border-box"></div>
<div class="bo" style="left:998px;top:906px;width:333px;height:26px;"><div class="bi" style="top:3px"></div></div>
<div class="t" style="left:1147.3px;top:910.0px;height:19px;line-height:19px;font-size:13px;letter-spacing:0.218px;color:#000;">Close</div>
<div style="left:483px;top:109px;width:838px;height:76px;background:#fff;border-top:2px solid #a4a4a4;border-left:2px solid #a4a4a4;box-sizing:border-box"></div>
<div style="left:485px;top:111px;width:834px;height:72px;background:#000"></div>
<svg style="position:absolute;left:485px;top:111px" width="834" height="72" viewBox="485 111 834 72"><line x1="485" y1="180.5" x2="1319" y2="180.5" stroke="#fff" stroke-width="1" stroke-dasharray="1 2" shape-rendering="crispEdges"/><line x1="485" y1="178.5" x2="1319" y2="178.5" stroke="#fff" stroke-width="1" stroke-dasharray="1 2" shape-rendering="crispEdges"/><line x1="485" y1="175.5" x2="1319" y2="175.5" stroke="#fff" stroke-width="1" stroke-dasharray="1 2" shape-rendering="crispEdges"/><line x1="485" y1="172.5" x2="1319" y2="172.5" stroke="#fff" stroke-width="1" stroke-dasharray="1 2" shape-rendering="crispEdges"/><line x1="485" y1="169.5" x2="1319" y2="169.5" stroke="#fff" stroke-width="1" stroke-dasharray="1 2" shape-rendering="crispEdges"/><line x1="485" y1="166.5" x2="1319" y2="166.5" stroke="#fff" stroke-width="1" stroke-dasharray="1 2" shape-rendering="crispEdges"/><line x1="485" y1="163.5" x2="1319" y2="163.5" stroke="#fff" stroke-width="1" stroke-dasharray="1 2" shape-rendering="crispEdges"/><line x1="485" y1="161.5" x2="1319" y2="161.5" stroke="#fff" stroke-width="1" stroke-dasharray="1 2" shape-rendering="crispEdges"/><line x1="485" y1="158.5" x2="1319" y2="158.5" stroke="#fff" stroke-width="1" stroke-dasharray="1 2" shape-rendering="crispEdges"/><line x1="485" y1="155.5" x2="1319" y2="155.5" stroke="#fff" stroke-width="1" stroke-dasharray="1 2" shape-rendering="crispEdges"/><line x1="485" y1="152.5" x2="1319" y2="152.5" stroke="#fff" stroke-width="1" stroke-dasharray="1 2" shape-rendering="crispEdges"/><line x1="485" y1="149.5" x2="1319" y2="149.5" stroke="#fff" stroke-width="1" stroke-dasharray="1 2" shape-rendering="crispEdges"/><line x1="485" y1="146.5" x2="1319" y2="146.5" stroke="#fff" stroke-width="1" stroke-dasharray="1 2" shape-rendering="crispEdges"/><line x1="485" y1="144.5" x2="1319" y2="144.5" stroke="#fff" stroke-width="1" stroke-dasharray="1 2" shape-rendering="crispEdges"/><line x1="485" y1="141.5" x2="1319" y2="141.5" stroke="#fff" stroke-width="1" stroke-dasharray="1 2" shape-rendering="crispEdges"/><line x1="485" y1="138.5" x2="1319" y2="138.5" stroke="#fff" stroke-width="1" stroke-dasharray="1 2" shape-rendering="crispEdges"/><line x1="485" y1="135.5" x2="1319" y2="135.5" stroke="#fff" stroke-width="1" stroke-dasharray="1 2" shape-rendering="crispEdges"/><line x1="485" y1="132.5" x2="1319" y2="132.5" stroke="#fff" stroke-width="1" stroke-dasharray="1 2" shape-rendering="crispEdges"/><line x1="485" y1="129.5" x2="1319" y2="129.5" stroke="#fff" stroke-width="1" stroke-dasharray="1 2" shape-rendering="crispEdges"/><line x1="485" y1="127.5" x2="1319" y2="127.5" stroke="#fff" stroke-width="1" stroke-dasharray="1 2" shape-rendering="crispEdges"/><line x1="485" y1="124.5" x2="1319" y2="124.5" stroke="#fff" stroke-width="1" stroke-dasharray="1 2" shape-rendering="crispEdges"/><line x1="485" y1="121.5" x2="1319" y2="121.5" stroke="#fff" stroke-width="1" stroke-dasharray="1 2" shape-rendering="crispEdges"/><line x1="485" y1="118.5" x2="1319" y2="118.5" stroke="#fff" stroke-width="1" stroke-dasharray="1 2" shape-rendering="crispEdges"/><line x1="485" y1="115.5" x2="1319" y2="115.5" stroke="#fff" stroke-width="1" stroke-dasharray="1 2" shape-rendering="crispEdges"/><line x1="485" y1="112.5" x2="1319" y2="112.5" stroke="#fff" stroke-width="1" stroke-dasharray="1 2" shape-rendering="crispEdges"/><line x1="489.5" y1="111" x2="489.5" y2="183" stroke="#fff" stroke-width="1" stroke-dasharray="1 2" shape-rendering="crispEdges"/><line x1="517.5" y1="111" x2="517.5" y2="183" stroke="#fff" stroke-width="1" stroke-dasharray="1 2" shape-rendering="crispEdges"/><line x1="544.5" y1="111" x2="544.5" y2="183" stroke="#fff" stroke-width="1" stroke-dasharray="1 2" shape-rendering="crispEdges"/><line x1="572.5" y1="111" x2="572.5" y2="183" stroke="#fff" stroke-width="1" stroke-dasharray="1 2" shape-rendering="crispEdges"/><line x1="599.5" y1="111" x2="599.5" y2="183" stroke="#fff" stroke-width="1" stroke-dasharray="1 2" shape-rendering="crispEdges"/><line x1="627.5" y1="111" x2="627.5" y2="183" stroke="#fff" stroke-width="1" stroke-dasharray="1 2" shape-rendering="crispEdges"/><line x1="654.5" y1="111" x2="654.5" y2="183" stroke="#fff" stroke-width="1" stroke-dasharray="1 2" shape-rendering="crispEdges"/><line x1="682.5" y1="111" x2="682.5" y2="183" stroke="#fff" stroke-width="1" stroke-dasharray="1 2" shape-rendering="crispEdges"/><line x1="709.5" y1="111" x2="709.5" y2="183" stroke="#fff" stroke-width="1" stroke-dasharray="1 2" shape-rendering="crispEdges"/><line x1="737.5" y1="111" x2="737.5" y2="183" stroke="#fff" stroke-width="1" stroke-dasharray="1 2" shape-rendering="crispEdges"/><line x1="764.5" y1="111" x2="764.5" y2="183" stroke="#fff" stroke-width="1" stroke-dasharray="1 2" shape-rendering="crispEdges"/><line x1="792.5" y1="111" x2="792.5" y2="183" stroke="#fff" stroke-width="1" stroke-dasharray="1 2" shape-rendering="crispEdges"/><line x1="819.5" y1="111" x2="819.5" y2="183" stroke="#fff" stroke-width="1" stroke-dasharray="1 2" shape-rendering="crispEdges"/><line x1="847.5" y1="111" x2="847.5" y2="183" stroke="#fff" stroke-width="1" stroke-dasharray="1 2" shape-rendering="crispEdges"/><line x1="874.5" y1="111" x2="874.5" y2="183" stroke="#fff" stroke-width="1" stroke-dasharray="1 2" shape-rendering="crispEdges"/><line x1="902.5" y1="111" x2="902.5" y2="183" stroke="#fff" stroke-width="1" stroke-dasharray="1 2" shape-rendering="crispEdges"/><line x1="929.5" y1="111" x2="929.5" y2="183" stroke="#fff" stroke-width="1" stroke-dasharray="1 2" shape-rendering="crispEdges"/><line x1="957.5" y1="111" x2="957.5" y2="183" stroke="#fff" stroke-width="1" stroke-dasharray="1 2" shape-rendering="crispEdges"/><line x1="984.5" y1="111" x2="984.5" y2="183" stroke="#fff" stroke-width="1" stroke-dasharray="1 2" shape-rendering="crispEdges"/><line x1="1012.5" y1="111" x2="1012.5" y2="183" stroke="#fff" stroke-width="1" stroke-dasharray="1 2" shape-rendering="crispEdges"/><line x1="1039.5" y1="111" x2="1039.5" y2="183" stroke="#fff" stroke-width="1" stroke-dasharray="1 2" shape-rendering="crispEdges"/><line x1="1067.5" y1="111" x2="1067.5" y2="183" stroke="#fff" stroke-width="1" stroke-dasharray="1 2" shape-rendering="crispEdges"/><line x1="1094.5" y1="111" x2="1094.5" y2="183" stroke="#fff" stroke-width="1" stroke-dasharray="1 2" shape-rendering="crispEdges"/><line x1="1122.5" y1="111" x2="1122.5" y2="183" stroke="#fff" stroke-width="1" stroke-dasharray="1 2" shape-rendering="crispEdges"/><line x1="1149.5" y1="111" x2="1149.5" y2="183" stroke="#fff" stroke-width="1" stroke-dasharray="1 2" shape-rendering="crispEdges"/><line x1="1177.5" y1="111" x2="1177.5" y2="183" stroke="#fff" stroke-width="1" stroke-dasharray="1 2" shape-rendering="crispEdges"/><line x1="1204.5" y1="111" x2="1204.5" y2="183" stroke="#fff" stroke-width="1" stroke-dasharray="1 2" shape-rendering="crispEdges"/><line x1="1232.5" y1="111" x2="1232.5" y2="183" stroke="#fff" stroke-width="1" stroke-dasharray="1 2" shape-rendering="crispEdges"/><line x1="1259.5" y1="111" x2="1259.5" y2="183" stroke="#fff" stroke-width="1" stroke-dasharray="1 2" shape-rendering="crispEdges"/><line x1="1287.5" y1="111" x2="1287.5" y2="183" stroke="#fff" stroke-width="1" stroke-dasharray="1 2" shape-rendering="crispEdges"/><defs><pattern id="band" width="110" height="24" patternUnits="userSpaceOnUse"><rect x="0.0" y="0" width="3.0" height="1" fill="#228b22"/><rect x="3.0" y="0" width="4.9" height="1" fill="#8b008b"/><rect x="7.8" y="0" width="6.4" height="1" fill="#ffd700"/><rect x="14.3" y="0" width="3.7" height="1" fill="#8b008b"/><rect x="18.0" y="0" width="4.9" height="1" fill="#adff2f"/><rect x="22.9" y="0" width="6.2" height="1" fill="#ff8c00"/><rect x="29.1" y="0" width="4.8" height="1" fill="#ff1493"/><rect x="33.9" y="0" width="3.4" height="1" fill="#5f9ea0"/><rect x="37.2" y="0" width="6.6" height="1" fill="#40e0d0"/><rect x="43.8" y="0" width="3.2" height="1" fill="#ffdab9"/><rect x="47.0" y="0" width="6.9" height="1" fill="#ee82ee"/><rect x="53.8" y="0" width="6.0" height="1" fill="#ee82ee"/><rect x="59.8" y="0" width="3.6" height="1" fill="#ff0000"/><rect x="63.4" y="0" width="6.3" height="1" fill="#ff00ff"/><rect x="69.7" y="0" width="3.2" height="1" fill="#ffd700"/><rect x="73.0" y="0" width="6.5" height="1" fill="#ff6347"/><rect x="79.5" y="0" width="3.1" height="1" fill="#cd5c5c"/><rect x="82.6" y="0" width="4.3" height="1" fill="#00fa9a"/><rect x="86.9" y="0" width="6.4" height="1" fill="#daa520"/><rect x="93.3" y="0" width="3.9" height="1" fill="#20b2aa"/><rect x="97.2" y="0" width="5.0" height="1" fill="#8b4513"/><rect x="102.2" y="0" width="3.3" height="1" fill="#ee82ee"/><rect x="105.5" y="0" width="4.1" height="1" fill="#ffb6c1"/><rect x="109.7" y="0" width="7.0" height="1" fill="#4169e1"/><rect x="0.0" y="1" width="3.6" height="1" fill="#00bfff"/><rect x="3.6" y="1" width="3.9" height="1" fill="#20b2aa"/><rect x="7.5" y="1" width="3.1" height="1" fill="#7b68ee"/><rect x="10.6" y="1" width="6.1" height="1" fill="#ffdab9"/><rect x="16.7" y="1" width="3.4" height="1" fill="#20b2aa"/><rect x="20.1" y="1" width="4.5" height="1" fill="#00ff00"/><rect x="24.7" y="1" width="6.4" height="1" fill="#ff0000"/><rect x="31.1" y="1" width="3.9" height="1" fill="#00ffff"/><rect x="34.9" y="1" width="4.9" height="1" fill="#ff7f50"/><rect x="39.8" y="1" width="4.6" height="1" fill="#ff00ff"/><rect x="44.4" y="1" width="5.3" height="1" fill="#ffd700"/><rect x="49.7" y="1" width="6.1" height="1" fill="#f08080"/><rect x="55.8" y="1" width="4.3" height="1" fill="#9acd32"/><rect x="60.1" y="1" width="4.3" height="1" fill="#778899"/><rect x="64.4" y="1" width="6.0" height="1" fill="#9400d3"/><rect x="70.5" y="1" width="3.5" height="1" fill="#ff7f50"/><rect x="74.0" y="1" width="3.4" height="1" fill="#00ffff"/><rect x="77.4" y="1" width="4.9" height="1" fill="#008b8b"/><rect x="82.3" y="1" width="3.7" height="1" fill="#ffb6c1"/><rect x="86.0" y="1" width="3.8" height="1" fill="#8b008b"/><rect x="89.7" y="1" width="3.8" height="1" fill="#6495ed"/><rect x="93.5" y="1" width="6.1" height="1" fill="#778899"/><rect x="99.6" y="1" width="5.6" height="1" fill="#9400d3"/><rect x="105.2" y="1" width="4.6" height="1" fill="#32cd32"/><rect x="109.7" y="1" width="3.0" height="1" fill="#e0ffff"/><rect x="0.0" y="2" width="1.4" height="1" fill="#9acd32"/><rect x="1.4" y="2" width="7.0" height="1" fill="#00ff00"/><rect x="8.4" y="2" width="3.8" height="1" fill="#ffdab9"/><rect x="12.2" y="2" width="7.0" height="1" fill="#ff6347"/><rect x="19.2" y="2" width="5.6" height="1" fill="#ff8c00"/><rect x="24.7" y="2" width="3.2" height="1" fill="#ff1493"/><rect x="27.9" y="2" width="3.9" height="1" fill="#dda0dd"/><rect x="31.8" y="2" width="3.0" height="1" fill="#adff2f"/><rect x="34.8" y="2" width="4.3" height="1" fill="#20b2aa"/><rect x="39.1" y="2" width="4.5" height="1" fill="#ff00ff"/><rect x="43.7" y="2" width="3.4" height="1" fill="#00fa9a"/><rect x="47.0" y="2" width="5.5" height="1" fill="#ff0000"/><rect x="52.6" y="2" width="5.4" height="1" fill="#2e8b57"/><rect x="58.0" y="2" width="5.5" height="1" fill="#00ced1"/><rect x="63.5" y="2" width="6.8" height="1" fill="#fa8072"/><rect x="70.3" y="2" width="6.3" height="1" fill="#00ced1"/><rect x="76.6" y="2" width="6.5" height="1" fill="#1e90ff"/><rect x="83.1" y="2" width="5.5" height="1" fill="#9acd32"/><rect x="88.6" y="2" width="6.6" height="1" fill="#c71585"/><rect x="95.2" y="2" width="5.4" height="1" fill="#6495ed"/><rect x="100.7" y="2" width="3.8" height="1" fill="#dc143c"/><rect x="104.4" y="2" width="5.5" height="1" fill="#ffb6c1"/><rect x="110.0" y="2" width="3.8" height="1" fill="#ffffff"/><rect x="0.0" y="3" width="1.0" height="1" fill="#778899"/><rect x="1.0" y="3" width="3.2" height="1" fill="#ff8c00"/><rect x="4.2" y="3" width="3.2" height="1" fill="#dda0dd"/><rect x="7.3" y="3" width="4.0" height="1" fill="#ff7f50"/><rect x="11.3" y="3" width="4.6" height="1" fill="#778899"/><rect x="15.9" y="3" width="6.3" height="1" fill="#ff6347"/><rect x="22.2" y="3" width="5.0" height="1" fill="#daa520"/><rect x="27.1" y="3" width="3.7" height="1" fill="#6495ed"/><rect x="30.8" y="3" width="6.9" height="1" fill="#00ced1"/><rect x="37.7" y="3" width="3.9" height="1" fill="#ffb6c1"/><rect x="41.7" y="3" width="5.6" height="1" fill="#adff2f"/><rect x="47.3" y="3" width="5.5" height="1" fill="#f08080"/><rect x="52.7" y="3" width="3.8" height="1" fill="#32cd32"/><rect x="56.6" y="3" width="6.0" height="1" fill="#ff00ff"/><rect x="62.6" y="3" width="4.1" height="1" fill="#6a5acd"/><rect x="66.6" y="3" width="4.0" height="1" fill="#0000ff"/><rect x="70.6" y="3" width="3.7" height="1" fill="#2e8b57"/><rect x="74.3" y="3" width="5.1" height="1" fill="#00ced1"/><rect x="79.5" y="3" width="3.4" height="1" fill="#00ced1"/><rect x="82.8" y="3" width="6.6" height="1" fill="#4682b4"/><rect x="89.4" y="3" width="5.6" height="1" fill="#66cdaa"/><rect x="95.0" y="3" width="5.1" height="1" fill="#00ced1"/><rect x="100.1" y="3" width="5.4" height="1" fill="#00ff00"/><rect x="105.5" y="3" width="4.9" height="1" fill="#d2691e"/><rect x="0.0" y="4" width="3.3" height="1" fill="#00ff00"/><rect x="3.3" y="4" width="5.4" height="1" fill="#ff00ff"/><rect x="8.7" y="4" width="4.9" height="1" fill="#6495ed"/><rect x="13.7" y="4" width="4.2" height="1" fill="#00ced1"/><rect x="17.9" y="4" width="7.0" height="1" fill="#ff00ff"/><rect x="24.9" y="4" width="4.8" height="1" fill="#2e8b57"/><rect x="29.7" y="4" width="5.9" height="1" fill="#dc143c"/><rect x="35.7" y="4" width="5.9" height="1" fill="#00ced1"/><rect x="41.6" y="4" width="6.2" height="1" fill="#4682b4"/><rect x="47.8" y="4" width="4.4" height="1" fill="#2f4f4f"/><rect x="52.2" y="4" width="4.9" height="1" fill="#ff00ff"/><rect x="57.1" y="4" width="6.5" height="1" fill="#778899"/><rect x="63.6" y="4" width="6.8" height="1" fill="#00ff00"/><rect x="70.4" y="4" width="6.5" height="1" fill="#7b68ee"/><rect x="76.8" y="4" width="3.1" height="1" fill="#8b4513"/><rect x="79.9" y="4" width="4.5" height="1" fill="#00fa9a"/><rect x="84.4" y="4" width="3.0" height="1" fill="#ff00ff"/><rect x="87.4" y="4" width="3.3" height="1" fill="#40e0d0"/><rect x="90.8" y="4" width="3.5" height="1" fill="#dda0dd"/><rect x="94.2" y="4" width="6.5" height="1" fill="#6495ed"/><rect x="100.7" y="4" width="4.3" height="1" fill="#dc143c"/><rect x="105.1" y="4" width="5.8" height="1" fill="#cd5c5c"/><rect x="0.0" y="5" width="4.2" height="1" fill="#ffff00"/><rect x="4.2" y="5" width="5.1" height="1" fill="#8b008b"/><rect x="9.2" y="5" width="3.1" height="1" fill="#ff6347"/><rect x="12.3" y="5" width="3.4" height="1" fill="#00ff00"/><rect x="15.7" y="5" width="3.9" height="1" fill="#66cdaa"/><rect x="19.6" y="5" width="3.5" height="1" fill="#228b22"/><rect x="23.1" y="5" width="5.5" height="1" fill="#008b8b"/><rect x="28.5" y="5" width="4.0" height="1" fill="#ff0000"/><rect x="32.5" y="5" width="4.5" height="1" fill="#ff1493"/><rect x="37.0" y="5" width="5.7" height="1" fill="#ffd700"/><rect x="42.7" y="5" width="5.1" height="1" fill="#00bfff"/><rect x="47.8" y="5" width="6.6" height="1" fill="#8b4513"/><rect x="54.4" y="5" width="6.7" height="1" fill="#008b8b"/><rect x="61.2" y="5" width="6.6" height="1" fill="#ba55d3"/><rect x="67.7" y="5" width="4.6" height="1" fill="#dda0dd"/><rect x="72.3" y="5" width="3.8" height="1" fill="#808000"/><rect x="76.1" y="5" width="6.2" height="1" fill="#00bfff"/><rect x="82.3" y="5" width="6.7" height="1" fill="#32cd32"/><rect x="89.0" y="5" width="4.5" height="1" fill="#00fa9a"/><rect x="93.5" y="5" width="6.7" height="1" fill="#32cd32"/><rect x="100.2" y="5" width="3.5" height="1" fill="#008b8b"/><rect x="103.8" y="5" width="4.4" height="1" fill="#ffffff"/><rect x="108.2" y="5" width="3.2" height="1" fill="#ff00ff"/><rect x="0.0" y="6" width="-0.6" height="1" fill="#7fff00"/><rect x="0.0" y="6" width="2.8" height="1" fill="#fa8072"/><rect x="2.8" y="6" width="4.1" height="1" fill="#32cd32"/><rect x="6.9" y="6" width="6.3" height="1" fill="#ffffff"/><rect x="13.2" y="6" width="5.5" height="1" fill="#008b8b"/><rect x="18.7" y="6" width="5.7" height="1" fill="#ff7f50"/><rect x="24.4" y="6" width="6.4" height="1" fill="#adff2f"/><rect x="30.8" y="6" width="4.8" height="1" fill="#ff00ff"/><rect x="35.6" y="6" width="6.3" height="1" fill="#f08080"/><rect x="41.9" y="6" width="6.5" height="1" fill="#0000ff"/><rect x="48.4" y="6" width="5.7" height="1" fill="#f08080"/><rect x="54.1" y="6" width="5.3" height="1" fill="#9acd32"/><rect x="59.4" y="6" width="5.6" height="1" fill="#7b68ee"/><rect x="65.0" y="6" width="3.1" height="1" fill="#00ced1"/><rect x="68.1" y="6" width="4.6" height="1" fill="#ffd700"/><rect x="72.7" y="6" width="3.1" height="1" fill="#4169e1"/><rect x="75.8" y="6" width="4.1" height="1" fill="#228b22"/><rect x="79.9" y="6" width="3.6" height="1" fill="#00ffff"/><rect x="83.4" y="6" width="6.9" height="1" fill="#9400d3"/><rect x="90.4" y="6" width="4.8" height="1" fill="#40e0d0"/><rect x="95.1" y="6" width="5.1" height="1" fill="#40e0d0"/><rect x="100.3" y="6" width="6.2" height="1" fill="#ff00ff"/><rect x="106.5" y="6" width="5.7" height="1" fill="#ffd700"/><rect x="0.0" y="7" width="-0.1" height="1" fill="#ff7f50"/><rect x="0.0" y="7" width="2.9" height="1" fill="#fa8072"/><rect x="2.9" y="7" width="5.1" height="1" fill="#0000ff"/><rect x="8.1" y="7" width="3.7" height="1" fill="#f08080"/><rect x="11.8" y="7" width="6.1" height="1" fill="#90ee90"/><rect x="17.9" y="7" width="5.8" height="1" fill="#daa520"/><rect x="23.7" y="7" width="5.0" height="1" fill="#00bfff"/><rect x="28.7" y="7" width="3.6" height="1" fill="#ffffff"/><rect x="32.3" y="7" width="6.2" height="1" fill="#ff69b4"/><rect x="38.5" y="7" width="3.3" height="1" fill="#6495ed"/><rect x="41.9" y="7" width="4.6" height="1" fill="#6a5acd"/><rect x="46.4" y="7" width="4.8" height="1" fill="#40e0d0"/><rect x="51.2" y="7" width="6.5" height="1" fill="#ff0000"/><rect x="57.8" y="7" width="4.5" height="1" fill="#7b68ee"/><rect x="62.3" y="7" width="5.6" height="1" fill="#8b008b"/><rect x="67.9" y="7" width="6.2" height="1" fill="#4682b4"/><rect x="74.1" y="7" width="4.9" height="1" fill="#ee82ee"/><rect x="78.9" y="7" width="6.9" height="1" fill="#ff8c00"/><rect x="85.9" y="7" width="5.9" height="1" fill="#c71585"/><rect x="91.8" y="7" width="6.2" height="1" fill="#ff7f50"/><rect x="97.9" y="7" width="3.5" height="1" fill="#87ceeb"/><rect x="101.4" y="7" width="6.6" height="1" fill="#ffff00"/><rect x="108.0" y="7" width="6.9" height="1" fill="#90ee90"/><rect x="0.0" y="8" width="1.8" height="1" fill="#dda0dd"/><rect x="1.8" y="8" width="6.6" height="1" fill="#ffffff"/><rect x="8.5" y="8" width="3.1" height="1" fill="#8b008b"/><rect x="11.5" y="8" width="3.3" height="1" fill="#6a5acd"/><rect x="14.9" y="8" width="4.4" height="1" fill="#778899"/><rect x="19.2" y="8" width="6.1" height="1" fill="#008b8b"/><rect x="25.3" y="8" width="6.7" height="1" fill="#32cd32"/><rect x="32.0" y="8" width="6.2" height="1" fill="#ff00ff"/><rect x="38.2" y="8" width="4.7" height="1" fill="#0000ff"/><rect x="43.0" y="8" width="3.7" height="1" fill="#4682b4"/><rect x="46.6" y="8" width="5.7" height="1" fill="#00ced1"/><rect x="52.4" y="8" width="4.9" height="1" fill="#daa520"/><rect x="57.3" y="8" width="6.6" height="1" fill="#daa520"/><rect x="63.9" y="8" width="6.4" height="1" fill="#66cdaa"/><rect x="70.2" y="8" width="4.8" height="1" fill="#008b8b"/><rect x="75.0" y="8" width="5.3" height="1" fill="#66cdaa"/><rect x="80.3" y="8" width="3.3" height="1" fill="#ff69b4"/><rect x="83.7" y="8" width="4.8" height="1" fill="#ffb6c1"/><rect x="88.4" y="8" width="4.2" height="1" fill="#6495ed"/><rect x="92.6" y="8" width="5.2" height="1" fill="#7fff00"/><rect x="97.8" y="8" width="5.1" height="1" fill="#4169e1"/><rect x="102.9" y="8" width="6.6" height="1" fill="#dda0dd"/><rect x="109.5" y="8" width="4.2" height="1" fill="#ffffff"/><rect x="0.0" y="9" width="1.7" height="1" fill="#adff2f"/><rect x="1.7" y="9" width="3.8" height="1" fill="#ffffff"/><rect x="5.5" y="9" width="3.6" height="1" fill="#90ee90"/><rect x="9.1" y="9" width="5.1" height="1" fill="#7b68ee"/><rect x="14.2" y="9" width="5.0" height="1" fill="#778899"/><rect x="19.2" y="9" width="5.1" height="1" fill="#8b008b"/><rect x="24.3" y="9" width="3.0" height="1" fill="#ffffff"/><rect x="27.4" y="9" width="3.1" height="1" fill="#0000ff"/><rect x="30.5" y="9" width="5.1" height="1" fill="#ffdab9"/><rect x="35.5" y="9" width="5.2" height="1" fill="#7b68ee"/><rect x="40.7" y="9" width="3.5" height="1" fill="#ffff00"/><rect x="44.2" y="9" width="5.8" height="1" fill="#ff00ff"/><rect x="50.0" y="9" width="6.7" height="1" fill="#cd5c5c"/><rect x="56.7" y="9" width="4.7" height="1" fill="#5f9ea0"/><rect x="61.3" y="9" width="6.7" height="1" fill="#f08080"/><rect x="68.0" y="9" width="4.0" height="1" fill="#008b8b"/><rect x="72.0" y="9" width="3.5" height="1" fill="#808000"/><rect x="75.5" y="9" width="6.6" height="1" fill="#fa8072"/><rect x="82.1" y="9" width="5.1" height="1" fill="#ff8c00"/><rect x="87.2" y="9" width="3.8" height="1" fill="#adff2f"/><rect x="91.0" y="9" width="3.1" height="1" fill="#dda0dd"/><rect x="94.1" y="9" width="3.5" height="1" fill="#228b22"/><rect x="97.6" y="9" width="6.9" height="1" fill="#0000ff"/><rect x="104.5" y="9" width="3.8" height="1" fill="#ff69b4"/><rect x="108.3" y="9" width="3.0" height="1" fill="#20b2aa"/><rect x="0.0" y="10" width="2.8" height="1" fill="#adff2f"/><rect x="2.8" y="10" width="5.0" height="1" fill="#008b8b"/><rect x="7.8" y="10" width="5.9" height="1" fill="#9400d3"/><rect x="13.7" y="10" width="6.4" height="1" fill="#adff2f"/><rect x="20.1" y="10" width="4.0" height="1" fill="#ffd700"/><rect x="24.1" y="10" width="5.8" height="1" fill="#808000"/><rect x="29.9" y="10" width="3.1" height="1" fill="#40e0d0"/><rect x="33.0" y="10" width="4.7" height="1" fill="#daa520"/><rect x="37.7" y="10" width="5.5" height="1" fill="#90ee90"/><rect x="43.2" y="10" width="3.8" height="1" fill="#40e0d0"/><rect x="47.0" y="10" width="5.1" height="1" fill="#32cd32"/><rect x="52.1" y="10" width="5.1" height="1" fill="#ffffff"/><rect x="57.2" y="10" width="5.2" height="1" fill="#00fa9a"/><rect x="62.4" y="10" width="6.4" height="1" fill="#ff69b4"/><rect x="68.8" y="10" width="6.7" height="1" fill="#40e0d0"/><rect x="75.5" y="10" width="6.2" height="1" fill="#1e90ff"/><rect x="81.7" y="10" width="4.3" height="1" fill="#ba55d3"/><rect x="86.0" y="10" width="6.6" height="1" fill="#ffd700"/><rect x="92.6" y="10" width="3.9" height="1" fill="#ffd700"/><rect x="96.4" y="10" width="6.6" height="1" fill="#00ced1"/><rect x="103.0" y="10" width="6.6" height="1" fill="#00ced1"/><rect x="109.5" y="10" width="5.9" height="1" fill="#dda0dd"/><rect x="0.0" y="11" width="2.8" height="1" fill="#778899"/><rect x="2.8" y="11" width="5.2" height="1" fill="#ff7f50"/><rect x="8.0" y="11" width="3.5" height="1" fill="#ffdab9"/><rect x="11.5" y="11" width="5.5" height="1" fill="#5f9ea0"/><rect x="17.0" y="11" width="3.1" height="1" fill="#ffd700"/><rect x="20.1" y="11" width="5.3" height="1" fill="#d2691e"/><rect x="25.3" y="11" width="6.6" height="1" fill="#2e8b57"/><rect x="32.0" y="11" width="3.5" height="1" fill="#8b008b"/><rect x="35.4" y="11" width="5.5" height="1" fill="#4682b4"/><rect x="41.0" y="11" width="5.0" height="1" fill="#2f4f4f"/><rect x="46.0" y="11" width="6.3" height="1" fill="#5f9ea0"/><rect x="52.3" y="11" width="3.3" height="1" fill="#ff8c00"/><rect x="55.6" y="11" width="3.1" height="1" fill="#00bfff"/><rect x="58.7" y="11" width="5.2" height="1" fill="#8b008b"/><rect x="63.9" y="11" width="6.6" height="1" fill="#fa8072"/><rect x="70.5" y="11" width="3.6" height="1" fill="#1e90ff"/><rect x="74.1" y="11" width="3.5" height="1" fill="#1e90ff"/><rect x="77.6" y="11" width="6.4" height="1" fill="#20b2aa"/><rect x="83.9" y="11" width="6.7" height="1" fill="#ff8c00"/><rect x="90.6" y="11" width="5.3" height="1" fill="#00ced1"/><rect x="96.0" y="11" width="6.8" height="1" fill="#cd5c5c"/><rect x="102.8" y="11" width="3.3" height="1" fill="#ff8c00"/><rect x="106.1" y="11" width="4.3" height="1" fill="#cd5c5c"/><rect x="0.0" y="12" width="2.3" height="1" fill="#32cd32"/><rect x="2.3" y="12" width="5.4" height="1" fill="#ff0000"/><rect x="7.7" y="12" width="5.5" height="1" fill="#0000ff"/><rect x="13.2" y="12" width="6.4" height="1" fill="#1e90ff"/><rect x="19.6" y="12" width="4.6" height="1" fill="#2e8b57"/><rect x="24.2" y="12" width="6.0" height="1" fill="#ffdab9"/><rect x="30.2" y="12" width="6.7" height="1" fill="#ff6347"/><rect x="36.9" y="12" width="3.7" height="1" fill="#8b008b"/><rect x="40.5" y="12" width="6.2" height="1" fill="#ba55d3"/><rect x="46.7" y="12" width="6.6" height="1" fill="#5f9ea0"/><rect x="53.3" y="12" width="6.4" height="1" fill="#e0ffff"/><rect x="59.6" y="12" width="6.6" height="1" fill="#ffdab9"/><rect x="66.3" y="12" width="5.3" height="1" fill="#ffd700"/><rect x="71.6" y="12" width="5.0" height="1" fill="#4682b4"/><rect x="76.6" y="12" width="6.2" height="1" fill="#dda0dd"/><rect x="82.8" y="12" width="4.1" height="1" fill="#9400d3"/><rect x="86.9" y="12" width="6.0" height="1" fill="#228b22"/><rect x="92.9" y="12" width="3.6" height="1" fill="#ffdab9"/><rect x="96.5" y="12" width="3.5" height="1" fill="#4682b4"/><rect x="100.1" y="12" width="6.5" height="1" fill="#66cdaa"/><rect x="106.6" y="12" width="4.5" height="1" fill="#808000"/><rect x="0.0" y="13" width="0.8" height="1" fill="#6495ed"/><rect x="0.8" y="13" width="3.7" height="1" fill="#5f9ea0"/><rect x="4.5" y="13" width="4.4" height="1" fill="#fa8072"/><rect x="8.9" y="13" width="3.4" height="1" fill="#d2691e"/><rect x="12.3" y="13" width="7.0" height="1" fill="#adff2f"/><rect x="19.3" y="13" width="3.2" height="1" fill="#f08080"/><rect x="22.5" y="13" width="6.8" height="1" fill="#8b4513"/><rect x="29.2" y="13" width="4.2" height="1" fill="#32cd32"/><rect x="33.4" y="13" width="5.6" height="1" fill="#7b68ee"/><rect x="39.1" y="13" width="3.7" height="1" fill="#ff00ff"/><rect x="42.8" y="13" width="4.6" height="1" fill="#008b8b"/><rect x="47.4" y="13" width="5.6" height="1" fill="#66cdaa"/><rect x="52.9" y="13" width="3.5" height="1" fill="#ffdab9"/><rect x="56.4" y="13" width="6.9" height="1" fill="#00ff00"/><rect x="63.3" y="13" width="3.5" height="1" fill="#ff8c00"/><rect x="66.8" y="13" width="6.0" height="1" fill="#dda0dd"/><rect x="72.7" y="13" width="4.8" height="1" fill="#8b008b"/><rect x="77.5" y="13" width="3.2" height="1" fill="#ffd700"/><rect x="80.7" y="13" width="5.6" height="1" fill="#ff0000"/><rect x="86.3" y="13" width="3.4" height="1" fill="#dda0dd"/><rect x="89.7" y="13" width="4.1" height="1" fill="#4682b4"/><rect x="93.8" y="13" width="5.2" height="1" fill="#8b008b"/><rect x="99.0" y="13" width="4.7" height="1" fill="#daa520"/><rect x="103.7" y="13" width="5.3" height="1" fill="#ff8c00"/><rect x="108.9" y="13" width="5.6" height="1" fill="#5f9ea0"/><rect x="0.0" y="14" width="2.0" height="1" fill="#8b4513"/><rect x="2.0" y="14" width="6.0" height="1" fill="#0000ff"/><rect x="8.0" y="14" width="4.5" height="1" fill="#7fff00"/><rect x="12.6" y="14" width="4.5" height="1" fill="#7fff00"/><rect x="17.1" y="14" width="6.4" height="1" fill="#90ee90"/><rect x="23.5" y="14" width="5.4" height="1" fill="#00ffff"/><rect x="29.0" y="14" width="4.7" height="1" fill="#008b8b"/><rect x="33.7" y="14" width="4.7" height="1" fill="#daa520"/><rect x="38.4" y="14" width="4.6" height="1" fill="#9acd32"/><rect x="43.0" y="14" width="4.5" height="1" fill="#20b2aa"/><rect x="47.4" y="14" width="4.9" height="1" fill="#f08080"/><rect x="52.4" y="14" width="5.2" height="1" fill="#20b2aa"/><rect x="57.6" y="14" width="5.7" height="1" fill="#dc143c"/><rect x="63.3" y="14" width="4.2" height="1" fill="#ff0000"/><rect x="67.4" y="14" width="6.1" height="1" fill="#00fa9a"/><rect x="73.5" y="14" width="3.2" height="1" fill="#7fff00"/><rect x="76.7" y="14" width="4.6" height="1" fill="#2f4f4f"/><rect x="81.3" y="14" width="4.6" height="1" fill="#ba55d3"/><rect x="85.9" y="14" width="6.0" height="1" fill="#00ffff"/><rect x="91.9" y="14" width="5.3" height="1" fill="#6495ed"/><rect x="97.2" y="14" width="6.8" height="1" fill="#ff00ff"/><rect x="104.0" y="14" width="6.2" height="1" fill="#ff69b4"/><rect x="0.0" y="15" width="2.8" height="1" fill="#00bfff"/><rect x="2.8" y="15" width="4.0" height="1" fill="#daa520"/><rect x="6.7" y="15" width="3.4" height="1" fill="#5f9ea0"/><rect x="10.1" y="15" width="5.9" height="1" fill="#cd5c5c"/><rect x="16.0" y="15" width="3.6" height="1" fill="#c71585"/><rect x="19.6" y="15" width="4.0" height="1" fill="#ff7f50"/><rect x="23.6" y="15" width="3.5" height="1" fill="#adff2f"/><rect x="27.0" y="15" width="4.7" height="1" fill="#9400d3"/><rect x="31.7" y="15" width="3.8" height="1" fill="#00ffff"/><rect x="35.5" y="15" width="4.4" height="1" fill="#ff1493"/><rect x="40.0" y="15" width="3.5" height="1" fill="#6a5acd"/><rect x="43.4" y="15" width="3.6" height="1" fill="#778899"/><rect x="47.0" y="15" width="4.8" height="1" fill="#dda0dd"/><rect x="51.8" y="15" width="5.6" height="1" fill="#2f4f4f"/><rect x="57.4" y="15" width="4.7" height="1" fill="#228b22"/><rect x="62.1" y="15" width="6.0" height="1" fill="#c71585"/><rect x="68.0" y="15" width="7.0" height="1" fill="#20b2aa"/><rect x="75.0" y="15" width="5.9" height="1" fill="#87ceeb"/><rect x="81.0" y="15" width="4.9" height="1" fill="#8b008b"/><rect x="85.9" y="15" width="6.6" height="1" fill="#b22222"/><rect x="92.5" y="15" width="5.0" height="1" fill="#ffffff"/><rect x="97.5" y="15" width="4.4" height="1" fill="#f08080"/><rect x="101.9" y="15" width="5.4" height="1" fill="#6495ed"/><rect x="107.4" y="15" width="5.3" height="1" fill="#00fa9a"/><rect x="0.0" y="16" width="3.2" height="1" fill="#87ceeb"/><rect x="3.2" y="16" width="3.8" height="1" fill="#87ceeb"/><rect x="6.9" y="16" width="5.0" height="1" fill="#ee82ee"/><rect x="11.9" y="16" width="6.7" height="1" fill="#2f4f4f"/><rect x="18.6" y="16" width="3.2" height="1" fill="#00ffff"/><rect x="21.8" y="16" width="3.0" height="1" fill="#dda0dd"/><rect x="24.8" y="16" width="4.7" height="1" fill="#adff2f"/><rect x="29.5" y="16" width="3.2" height="1" fill="#ff69b4"/><rect x="32.6" y="16" width="5.2" height="1" fill="#ff00ff"/><rect x="37.8" y="16" width="6.0" height="1" fill="#2f4f4f"/><rect x="43.8" y="16" width="3.6" height="1" fill="#87ceeb"/><rect x="47.5" y="16" width="5.5" height="1" fill="#2e8b57"/><rect x="53.0" y="16" width="4.9" height="1" fill="#d2691e"/><rect x="57.9" y="16" width="3.8" height="1" fill="#4682b4"/><rect x="61.8" y="16" width="5.0" height="1" fill="#00ced1"/><rect x="66.8" y="16" width="6.4" height="1" fill="#ff00ff"/><rect x="73.1" y="16" width="6.2" height="1" fill="#6a5acd"/><rect x="79.3" y="16" width="6.2" height="1" fill="#adff2f"/><rect x="85.6" y="16" width="6.4" height="1" fill="#228b22"/><rect x="91.9" y="16" width="3.9" height="1" fill="#808000"/><rect x="95.8" y="16" width="6.0" height="1" fill="#ffffff"/><rect x="101.8" y="16" width="6.2" height="1" fill="#2e8b57"/><rect x="108.0" y="16" width="3.6" height="1" fill="#4169e1"/><rect x="0.0" y="17" width="-0.6" height="1" fill="#ffb6c1"/><rect x="0.0" y="17" width="5.4" height="1" fill="#c71585"/><rect x="5.4" y="17" width="6.7" height="1" fill="#808000"/><rect x="12.1" y="17" width="5.6" height="1" fill="#00fa9a"/><rect x="17.7" y="17" width="3.4" height="1" fill="#ba55d3"/><rect x="21.1" y="17" width="3.3" height="1" fill="#ffff00"/><rect x="24.4" y="17" width="4.7" height="1" fill="#7b68ee"/><rect x="29.1" y="17" width="4.9" height="1" fill="#2f4f4f"/><rect x="34.1" y="17" width="4.9" height="1" fill="#c71585"/><rect x="38.9" y="17" width="6.1" height="1" fill="#ff00ff"/><rect x="45.0" y="17" width="4.2" height="1" fill="#8b4513"/><rect x="49.3" y="17" width="5.4" height="1" fill="#66cdaa"/><rect x="54.7" y="17" width="4.2" height="1" fill="#6495ed"/><rect x="58.9" y="17" width="6.1" height="1" fill="#ba55d3"/><rect x="64.9" y="17" width="4.1" height="1" fill="#ff1493"/><rect x="69.1" y="17" width="3.9" height="1" fill="#8b4513"/><rect x="72.9" y="17" width="5.9" height="1" fill="#2e8b57"/><rect x="78.9" y="17" width="6.6" height="1" fill="#ba55d3"/><rect x="85.5" y="17" width="5.8" height="1" fill="#7b68ee"/><rect x="91.3" y="17" width="5.4" height="1" fill="#2f4f4f"/><rect x="96.7" y="17" width="6.7" height="1" fill="#6a5acd"/><rect x="103.3" y="17" width="5.1" height="1" fill="#9acd32"/><rect x="108.5" y="17" width="4.8" height="1" fill="#ff69b4"/><rect x="0.0" y="18" width="4.7" height="1" fill="#daa520"/><rect x="4.7" y="18" width="4.0" height="1" fill="#2e8b57"/><rect x="8.7" y="18" width="6.3" height="1" fill="#00ff00"/><rect x="15.0" y="18" width="4.5" height="1" fill="#ffdab9"/><rect x="19.5" y="18" width="5.3" height="1" fill="#b22222"/><rect x="24.8" y="18" width="3.8" height="1" fill="#7b68ee"/><rect x="28.6" y="18" width="4.5" height="1" fill="#ffffff"/><rect x="33.1" y="18" width="5.2" height="1" fill="#4169e1"/><rect x="38.3" y="18" width="5.4" height="1" fill="#1e90ff"/><rect x="43.6" y="18" width="3.7" height="1" fill="#00bfff"/><rect x="47.3" y="18" width="4.8" height="1" fill="#ffffff"/><rect x="52.1" y="18" width="4.1" height="1" fill="#00ff00"/><rect x="56.3" y="18" width="3.9" height="1" fill="#00ffff"/><rect x="60.2" y="18" width="5.2" height="1" fill="#7b68ee"/><rect x="65.3" y="18" width="4.2" height="1" fill="#00ff00"/><rect x="69.5" y="18" width="5.6" height="1" fill="#5f9ea0"/><rect x="75.1" y="18" width="4.7" height="1" fill="#00fa9a"/><rect x="79.8" y="18" width="5.2" height="1" fill="#b22222"/><rect x="85.0" y="18" width="5.2" height="1" fill="#4682b4"/><rect x="90.2" y="18" width="3.3" height="1" fill="#dc143c"/><rect x="93.5" y="18" width="3.4" height="1" fill="#ba55d3"/><rect x="96.9" y="18" width="3.3" height="1" fill="#40e0d0"/><rect x="100.3" y="18" width="5.6" height="1" fill="#ff8c00"/><rect x="105.9" y="18" width="6.0" height="1" fill="#ee82ee"/><rect x="0.0" y="19" width="3.7" height="1" fill="#008b8b"/><rect x="3.7" y="19" width="6.1" height="1" fill="#daa520"/><rect x="9.8" y="19" width="4.4" height="1" fill="#cd5c5c"/><rect x="14.2" y="19" width="4.6" height="1" fill="#4682b4"/><rect x="18.7" y="19" width="6.2" height="1" fill="#4682b4"/><rect x="25.0" y="19" width="5.7" height="1" fill="#008b8b"/><rect x="30.6" y="19" width="5.0" height="1" fill="#5f9ea0"/><rect x="35.6" y="19" width="5.9" height="1" fill="#ff7f50"/><rect x="41.5" y="19" width="5.5" height="1" fill="#0000ff"/><rect x="47.0" y="19" width="4.6" height="1" fill="#c71585"/><rect x="51.6" y="19" width="6.9" height="1" fill="#d2691e"/><rect x="58.5" y="19" width="6.4" height="1" fill="#5f9ea0"/><rect x="65.0" y="19" width="4.5" height="1" fill="#ffff00"/><rect x="69.5" y="19" width="6.6" height="1" fill="#90ee90"/><rect x="76.0" y="19" width="5.6" height="1" fill="#daa520"/><rect x="81.6" y="19" width="4.4" height="1" fill="#ff0000"/><rect x="86.0" y="19" width="6.2" height="1" fill="#778899"/><rect x="92.2" y="19" width="6.7" height="1" fill="#ff1493"/><rect x="98.9" y="19" width="4.0" height="1" fill="#7fff00"/><rect x="102.9" y="19" width="7.0" height="1" fill="#ffffff"/><rect x="109.9" y="19" width="5.7" height="1" fill="#ba55d3"/><rect x="0.0" y="20" width="3.7" height="1" fill="#20b2aa"/><rect x="3.7" y="20" width="4.1" height="1" fill="#00ffff"/><rect x="7.8" y="20" width="4.9" height="1" fill="#6495ed"/><rect x="12.7" y="20" width="3.5" height="1" fill="#ee82ee"/><rect x="16.1" y="20" width="3.6" height="1" fill="#1e90ff"/><rect x="19.7" y="20" width="6.6" height="1" fill="#00bfff"/><rect x="26.4" y="20" width="4.8" height="1" fill="#00fa9a"/><rect x="31.2" y="20" width="4.9" height="1" fill="#5f9ea0"/><rect x="36.1" y="20" width="3.1" height="1" fill="#ff8c00"/><rect x="39.3" y="20" width="3.8" height="1" fill="#d2691e"/><rect x="43.1" y="20" width="3.9" height="1" fill="#87ceeb"/><rect x="47.0" y="20" width="5.4" height="1" fill="#fa8072"/><rect x="52.4" y="20" width="5.4" height="1" fill="#ff69b4"/><rect x="57.7" y="20" width="4.8" height="1" fill="#f08080"/><rect x="62.5" y="20" width="4.6" height="1" fill="#00bfff"/><rect x="67.1" y="20" width="6.7" height="1" fill="#40e0d0"/><rect x="73.9" y="20" width="5.2" height="1" fill="#c71585"/><rect x="79.1" y="20" width="5.2" height="1" fill="#ffffff"/><rect x="84.3" y="20" width="4.0" height="1" fill="#ffdab9"/><rect x="88.3" y="20" width="6.7" height="1" fill="#4682b4"/><rect x="95.0" y="20" width="5.6" height="1" fill="#228b22"/><rect x="100.6" y="20" width="6.8" height="1" fill="#fa8072"/><rect x="107.4" y="20" width="6.5" height="1" fill="#ffdab9"/><rect x="0.0" y="21" width="6.5" height="1" fill="#5f9ea0"/><rect x="6.5" y="21" width="6.2" height="1" fill="#daa520"/><rect x="12.7" y="21" width="6.2" height="1" fill="#228b22"/><rect x="18.9" y="21" width="4.1" height="1" fill="#00ffff"/><rect x="23.0" y="21" width="5.6" height="1" fill="#87ceeb"/><rect x="28.6" y="21" width="6.6" height="1" fill="#e0ffff"/><rect x="35.2" y="21" width="4.9" height="1" fill="#2e8b57"/><rect x="40.1" y="21" width="4.8" height="1" fill="#87ceeb"/><rect x="44.9" y="21" width="5.9" height="1" fill="#ff6347"/><rect x="50.8" y="21" width="6.5" height="1" fill="#778899"/><rect x="57.3" y="21" width="3.6" height="1" fill="#ba55d3"/><rect x="60.9" y="21" width="3.6" height="1" fill="#e0ffff"/><rect x="64.5" y="21" width="6.2" height="1" fill="#00ced1"/><rect x="70.7" y="21" width="5.5" height="1" fill="#adff2f"/><rect x="76.2" y="21" width="4.1" height="1" fill="#90ee90"/><rect x="80.3" y="21" width="3.2" height="1" fill="#7b68ee"/><rect x="83.5" y="21" width="6.1" height="1" fill="#ff0000"/><rect x="89.6" y="21" width="3.8" height="1" fill="#ffffff"/><rect x="93.4" y="21" width="3.6" height="1" fill="#00ced1"/><rect x="97.0" y="21" width="3.3" height="1" fill="#f08080"/><rect x="100.4" y="21" width="5.5" height="1" fill="#daa520"/><rect x="105.8" y="21" width="3.4" height="1" fill="#fa8072"/><rect x="109.2" y="21" width="5.8" height="1" fill="#ffff00"/><rect x="0.0" y="22" width="0.6" height="1" fill="#ffffff"/><rect x="0.6" y="22" width="5.0" height="1" fill="#00ff00"/><rect x="5.6" y="22" width="6.2" height="1" fill="#778899"/><rect x="11.8" y="22" width="3.8" height="1" fill="#2f4f4f"/><rect x="15.5" y="22" width="3.4" height="1" fill="#c71585"/><rect x="18.9" y="22" width="4.8" height="1" fill="#0000ff"/><rect x="23.6" y="22" width="5.2" height="1" fill="#daa520"/><rect x="28.8" y="22" width="5.0" height="1" fill="#4169e1"/><rect x="33.8" y="22" width="6.9" height="1" fill="#ba55d3"/><rect x="40.7" y="22" width="4.2" height="1" fill="#ff00ff"/><rect x="44.9" y="22" width="5.2" height="1" fill="#cd5c5c"/><rect x="50.1" y="22" width="5.7" height="1" fill="#ff00ff"/><rect x="55.8" y="22" width="4.4" height="1" fill="#2f4f4f"/><rect x="60.2" y="22" width="3.6" height="1" fill="#8b4513"/><rect x="63.8" y="22" width="4.6" height="1" fill="#cd5c5c"/><rect x="68.4" y="22" width="6.0" height="1" fill="#b22222"/><rect x="74.4" y="22" width="6.3" height="1" fill="#ee82ee"/><rect x="80.7" y="22" width="4.8" height="1" fill="#e0ffff"/><rect x="85.5" y="22" width="4.5" height="1" fill="#ff7f50"/><rect x="90.0" y="22" width="4.9" height="1" fill="#20b2aa"/><rect x="94.9" y="22" width="5.3" height="1" fill="#cd5c5c"/><rect x="100.1" y="22" width="6.1" height="1" fill="#ffffff"/><rect x="106.2" y="22" width="7.0" height="1" fill="#5f9ea0"/><rect x="0.0" y="23" width="3.0" height="1" fill="#ff1493"/><rect x="3.0" y="23" width="4.2" height="1" fill="#ffffff"/><rect x="7.2" y="23" width="6.7" height="1" fill="#dc143c"/><rect x="13.9" y="23" width="4.2" height="1" fill="#4682b4"/><rect x="18.1" y="23" width="6.0" height="1" fill="#ffb6c1"/><rect x="24.1" y="23" width="5.7" height="1" fill="#dda0dd"/><rect x="29.8" y="23" width="3.8" height="1" fill="#ffffff"/><rect x="33.6" y="23" width="5.9" height="1" fill="#4682b4"/><rect x="39.5" y="23" width="4.2" height="1" fill="#f08080"/><rect x="43.7" y="23" width="5.3" height="1" fill="#6495ed"/><rect x="49.0" y="23" width="5.6" height="1" fill="#6a5acd"/><rect x="54.5" y="23" width="6.3" height="1" fill="#ffff00"/><rect x="60.8" y="23" width="3.4" height="1" fill="#adff2f"/><rect x="64.2" y="23" width="3.4" height="1" fill="#2f4f4f"/><rect x="67.6" y="23" width="5.5" height="1" fill="#1e90ff"/><rect x="73.1" y="23" width="3.7" height="1" fill="#ffdab9"/><rect x="76.9" y="23" width="3.1" height="1" fill="#cd5c5c"/><rect x="80.0" y="23" width="5.4" height="1" fill="#ffff00"/><rect x="85.4" y="23" width="3.4" height="1" fill="#0000ff"/><rect x="88.8" y="23" width="3.6" height="1" fill="#9400d3"/><rect x="92.4" y="23" width="4.7" height="1" fill="#228b22"/><rect x="97.1" y="23" width="3.3" height="1" fill="#c71585"/><rect x="100.4" y="23" width="4.7" height="1" fill="#8b008b"/><rect x="105.1" y="23" width="3.6" height="1" fill="#32cd32"/><rect x="108.7" y="23" width="6.1" height="1" fill="#c71585"/></pattern></defs><polygon points="500.4,168.6 505.9,168.7 511.4,168.1 516.9,168.3 522.4,168.0 527.9,168.0 533.4,168.2 538.9,167.5 544.4,167.9 549.9,167.0 555.4,167.3 560.9,167.5 566.4,167.4 571.9,167.1 577.4,166.8 582.9,166.5 588.4,166.8 593.9,166.5 599.4,166.4 604.9,166.5 610.4,165.7 615.9,166.1 621.4,165.7 626.9,165.8 632.4,165.8 637.9,165.3 643.4,165.3 648.9,165.1 654.4,165.4 659.9,164.5 665.4,164.3 670.9,164.5 676.4,164.2 681.9,164.5 687.4,165.0 692.9,164.1 698.4,163.9 703.9,164.5 709.4,164.1 714.9,164.0 720.4,164.0 725.9,164.2 731.4,163.2 736.9,163.8 742.4,163.1 747.9,163.5 753.4,163.0 758.9,163.5 764.4,163.0 769.9,163.0 775.4,163.4 780.9,162.4 786.4,163.1 791.9,162.4 797.4,162.1 802.9,162.5 808.4,162.4 813.9,161.2 819.4,162.0 824.9,160.9 830.4,161.0 835.9,160.2 841.4,160.4 846.9,160.3 852.4,159.5 857.9,159.0 863.4,159.1 868.9,158.9 874.4,158.2 879.9,157.7 885.4,156.8 890.9,156.9 896.4,155.4 901.9,154.5 907.4,153.6 912.9,153.9 918.4,153.9 923.9,153.8 929.4,154.4 934.9,154.2 940.4,154.6 945.9,154.8 951.4,156.0 956.9,156.4 962.4,157.2 967.9,158.2 973.4,158.8 978.9,158.8 984.4,160.5 989.9,160.4 995.4,161.2 1000.9,161.7 1006.4,162.6 1011.9,163.0 1017.4,164.0 1022.9,164.2 1028.4,164.1 1033.9,164.6 1039.4,165.5 1044.9,166.2 1050.4,166.3 1055.9,165.5 1061.4,165.9 1066.9,165.2 1072.4,165.2 1077.9,164.7 1083.4,165.0 1088.9,164.2 1094.4,162.2 1099.9,161.5 1105.4,159.5 1110.9,157.5 1116.4,155.3 1121.9,151.3 1127.4,148.5 1132.9,144.5 1138.4,140.8 1143.9,137.0 1149.4,133.2 1154.9,129.2 1160.4,126.1 1165.9,123.9 1171.4,123.2 1176.9,122.2 1182.4,123.4 1187.9,124.3 1193.4,126.6 1198.9,130.3 1204.4,134.4 1209.9,137.9 1215.4,142.7 1220.9,147.0 1226.4,150.8 1231.9,154.7 1237.4,157.9 1242.9,161.2 1248.4,163.5 1253.9,166.2 1259.4,167.7 1264.9,168.8 1270.4,170.1 1275.9,170.3 1281.4,171.0 1286.9,171.8 1292.4,172.1 1297.9,171.9 1303.4,172.5 1308.9,171.8 1314.4,172.3 1314.4,177.5 500.4,177.5" fill="url(#band)" shape-rendering="crispEdges"/><polyline points="500,169.5 506,168.9 511,168.7 517,168.5 522,168.8 528,167.2 533,167.2 539,167.8 544,167.7 550,167.1 555,167.9 561,167.8 566,166.1 572,167.0 577,166.5 583,165.5 588,165.3 594,166.1 599,166.4 605,166.1 610,164.8 616,164.8 621,166.0 627,164.7 632,165.5 638,165.1 643,165.6 649,164.1 654,163.8 660,165.2 665,164.3 671,165.0 676,163.6 682,165.1 687,164.9 693,163.5 698,164.3 704,163.0 709,162.9 715,163.2 720,164.3 726,163.0 731,162.4 737,163.3 742,164.0 748,163.6 753,163.3 759,162.4 764,163.4 770,163.3 775,163.1 781,162.1 786,161.7 792,162.6 797,161.8 803,161.0 808,161.4 814,161.9 819,161.4 825,159.7 830,160.0 836,160.6 841,159.4 847,160.4 852,158.0 858,159.0 863,158.5 869,158.2 874,159.1 880,157.4 885,157.4 891,156.6 896,154.3 902,155.4 907,154.0 913,152.7 918,154.1 924,154.0 929,153.3 935,154.3 940,152.3 946,152.8 951,156.2 957,155.8 962,155.8 968,157.5 973,156.9 979,158.8 984,160.3 990,160.2 995,160.7 1001,161.9 1006,161.8 1012,162.0 1017,163.2 1023,163.7 1028,163.6 1034,164.4 1039,165.3 1045,164.9 1050,166.4 1056,165.2 1061,166.2 1067,165.2 1072,165.7 1078,164.9 1083,163.7 1089,162.8 1094,161.7 1100,161.5 1105,159.1 1111,157.6 1116,153.9 1122,151.0 1127,149.0 1133,143.3 1138,138.8 1144,135.3 1149,130.0 1155,129.7 1160,126.9 1166,125.3 1171,121.4 1177,121.3 1182,121.9 1188,124.4 1193,124.2 1199,131.0 1204,130.9 1210,136.9 1215,141.6 1221,145.3 1226,151.4 1232,155.5 1237,158.4 1243,162.0 1248,164.0 1254,165.5 1259,167.5 1265,169.1 1270,169.5 1276,170.9 1281,170.3 1287,171.7 1292,171.9 1298,172.2 1303,171.7 1309,171.7 1314,171.9" fill="none" stroke="#cd5c5c" stroke-width="1.1" stroke-linejoin="bevel"/><polyline points="500,169.0 506,168.6 511,168.0 517,167.9 522,167.3 528,168.5 533,167.3 539,167.4 544,168.1 550,166.8 555,167.1 561,166.1 566,167.7 572,166.8 577,166.4 583,167.1 588,166.1 594,166.1 599,165.0 605,164.9 610,165.3 616,165.1 621,164.5 627,165.1 632,165.6 638,165.8 643,164.3 649,165.0 654,165.6 660,165.2 665,164.9 671,163.5 676,163.5 682,164.8 687,164.8 693,163.8 698,162.9 704,163.3 709,163.6 715,162.7 720,162.7 726,162.5 731,164.0 737,162.5 742,162.2 748,163.6 753,163.2 759,163.8 764,162.9 770,163.2 775,161.9 781,161.8 786,162.4 792,162.5 797,162.0 803,161.3 808,161.6 814,161.3 819,160.7 825,161.4 830,160.4 836,160.0 841,160.0 847,160.5 852,159.7 858,157.8 863,158.3 869,158.2 874,157.3 880,157.6 885,156.6 891,155.6 896,155.9 902,155.4 907,154.7 913,152.8 918,152.6 924,154.5 929,154.2 935,152.4 940,154.5 946,152.8 951,154.0 957,155.8 962,155.5 968,157.5 973,158.6 979,157.8 984,159.1 990,160.7 995,160.8 1001,161.6 1006,162.8 1012,162.6 1017,164.0 1023,164.3 1028,164.4 1034,164.8 1039,164.9 1045,165.8 1050,165.7 1056,166.0 1061,165.7 1067,165.6 1072,164.4 1078,164.1 1083,164.1 1089,163.5 1094,163.1 1100,160.8 1105,159.4 1111,157.9 1116,154.5 1122,150.7 1127,148.6 1133,142.4 1138,138.7 1144,135.7 1149,134.0 1155,126.8 1160,123.8 1166,121.9 1171,123.7 1177,119.0 1182,121.2 1188,123.9 1193,127.6 1199,127.6 1204,133.3 1210,136.0 1215,142.7 1221,145.2 1226,151.7 1232,154.5 1237,158.0 1243,160.0 1248,164.0 1254,165.4 1259,168.0 1265,168.0 1270,170.1 1276,169.9 1281,171.0 1287,170.9 1292,171.5 1298,171.4 1303,171.4 1309,171.7 1314,172.4" fill="none" stroke="#00ffff" stroke-width="1.1" stroke-linejoin="bevel"/><polyline points="500,168.3 506,168.4 511,168.0 517,169.0 522,168.2 528,168.1 533,168.5 539,167.7 544,168.2 550,167.3 555,167.0 561,167.0 566,167.1 572,167.1 577,167.4 583,166.6 588,165.4 594,165.9 599,166.3 605,165.4 610,166.2 616,165.6 621,165.2 627,164.4 632,165.5 638,164.9 643,164.1 649,164.3 654,164.5 660,164.4 665,164.7 671,164.6 676,164.8 682,163.5 687,163.3 693,164.2 698,163.0 704,164.7 709,164.4 715,163.6 720,163.9 726,163.7 731,162.3 737,164.0 742,163.8 748,163.6 753,162.6 759,163.4 764,163.8 770,162.6 775,162.8 781,163.0 786,162.4 792,162.0 797,162.1 803,161.6 808,161.4 814,160.5 819,159.9 825,161.1 830,160.7 836,159.2 841,160.2 847,158.9 852,158.7 858,158.4 863,157.4 869,157.5 874,158.8 880,157.3 885,156.8 891,155.8 896,155.5 902,154.9 907,152.7 913,153.3 918,154.2 924,154.1 929,153.9 935,154.3 940,153.4 946,155.2 951,156.1 957,156.9 962,157.5 968,156.7 973,159.0 979,158.9 984,158.9 990,160.3 995,161.8 1001,160.8 1006,161.3 1012,163.6 1017,163.7 1023,163.7 1028,163.7 1034,165.0 1039,164.9 1045,166.3 1050,165.3 1056,166.0 1061,165.9 1067,164.9 1072,164.5 1078,164.1 1083,164.1 1089,163.6 1094,161.8 1100,160.6 1105,158.3 1111,156.1 1116,155.2 1122,151.4 1127,146.9 1133,144.7 1138,140.9 1144,137.7 1149,131.3 1155,126.0 1160,122.6 1166,124.7 1171,120.3 1177,121.4 1182,120.8 1188,123.7 1193,123.5 1199,126.6 1204,134.8 1210,136.3 1215,143.2 1221,147.8 1226,151.2 1232,153.8 1237,156.7 1243,161.9 1248,163.9 1254,166.7 1259,167.5 1265,168.7 1270,169.8 1276,170.6 1281,170.4 1287,170.7 1292,171.8 1298,171.9 1303,171.8 1309,171.8 1314,171.7" fill="none" stroke="#dda0dd" stroke-width="1.1" stroke-linejoin="bevel"/><polyline points="500,170.7 506,170.4 511,169.3 517,169.9 522,169.1 528,169.5 533,168.8 539,168.7 544,169.3 550,169.7 555,168.3 561,169.2 566,168.6 572,169.0 577,168.6 583,168.7 588,169.0 594,168.6 599,167.9 605,167.8 610,168.4 616,168.6 621,167.1 627,167.2 632,168.4 638,167.6 643,167.9 649,166.6 654,166.1 660,167.2 665,167.8 671,167.1 676,166.6 682,166.5 687,167.1 693,166.2 698,165.7 704,166.8 709,166.8 715,166.6 720,166.6 726,165.3 731,165.8 737,164.9 742,166.7 748,164.9 753,164.7 759,165.4 764,165.1 770,165.9 775,166.3 781,165.1 786,166.1 792,165.1 797,164.1 803,165.7 808,164.8 814,163.7 819,164.5 825,164.4 830,162.5 836,163.3 841,163.5 847,162.7 852,162.2 858,161.6 863,161.4 869,160.7 874,161.6 880,160.5 885,160.9 891,158.9 896,158.9 902,160.0 907,159.0 913,158.4 918,157.3 924,157.9 929,158.6 935,156.5 940,157.6 946,158.7 951,159.7 957,160.9 962,160.0 968,160.8 973,162.2 979,162.9 984,163.6 990,164.5 995,164.9 1001,164.9 1006,165.6 1012,165.7 1017,166.5 1023,166.5 1028,167.3 1034,168.0 1039,167.7 1045,168.7 1050,168.6 1056,167.0 1061,167.1 1067,167.1 1072,168.3 1078,167.7 1083,167.5 1089,165.8 1094,164.9 1100,164.3 1105,162.5 1111,159.5 1116,158.5 1122,155.1 1127,151.8 1133,148.9 1138,148.6 1144,144.1 1149,138.5 1155,135.7 1160,133.7 1166,133.1 1171,134.7 1177,130.5 1182,131.4 1188,131.4 1193,137.8 1199,137.6 1204,142.0 1210,145.1 1215,147.7 1221,152.4 1226,154.1 1232,157.6 1237,162.5 1243,163.5 1248,165.6 1254,168.0 1259,169.4 1265,169.7 1270,171.0 1276,171.7 1281,171.9 1287,172.9 1292,171.9 1298,172.7 1303,173.0 1309,173.3 1314,173.8" fill="none" stroke="#66cdaa" stroke-width="1.1" stroke-linejoin="bevel"/><polyline points="500,169.3 506,168.6 511,167.6 517,167.9 522,168.4 528,167.6 533,167.0 539,167.8 544,166.9 550,168.0 555,166.3 561,167.1 566,167.4 572,166.1 577,166.3 583,165.6 588,165.7 594,165.6 599,165.9 605,164.9 610,166.6 616,164.9 621,165.1 627,165.9 632,164.7 638,165.3 643,165.0 649,164.3 654,165.5 660,165.2 665,164.4 671,165.4 676,164.3 682,163.8 687,164.2 693,164.6 698,163.4 704,163.2 709,163.3 715,163.6 720,162.8 726,162.9 731,164.2 737,163.6 742,164.1 748,164.1 753,163.4 759,162.2 764,162.2 770,163.6 775,163.4 781,162.8 786,161.8 792,162.2 797,161.5 803,163.0 808,160.6 814,162.1 819,160.8 825,160.0 830,160.0 836,160.9 841,159.5 847,159.8 852,160.5 858,159.4 863,159.2 869,158.1 874,158.7 880,157.6 885,156.5 891,157.0 896,156.3 902,153.9 907,153.7 913,154.7 918,154.7 924,152.4 929,153.3 935,154.1 940,154.5 946,153.0 951,154.6 957,155.3 962,157.0 968,157.9 973,158.4 979,159.8 984,159.4 990,160.6 995,160.5 1001,161.9 1006,162.4 1012,162.8 1017,162.4 1023,164.2 1028,164.0 1034,165.4 1039,165.3 1045,166.3 1050,165.2 1056,166.2 1061,165.0 1067,165.2 1072,165.3 1078,164.0 1083,164.6 1089,163.0 1094,162.2 1100,161.2 1105,160.3 1111,157.2 1116,155.0 1122,151.4 1127,146.2 1133,144.8 1138,139.3 1144,135.3 1149,133.4 1155,129.0 1160,127.5 1166,121.2 1171,123.3 1177,121.9 1182,123.0 1188,122.0 1193,124.4 1199,129.0 1204,133.0 1210,139.3 1215,140.6 1221,148.0 1226,151.2 1232,155.0 1237,157.6 1243,160.8 1248,164.1 1254,165.1 1259,166.8 1265,169.6 1270,169.5 1276,170.4 1281,171.1 1287,171.3 1292,171.8 1298,171.6 1303,171.9 1309,171.6 1314,171.7" fill="none" stroke="#ba55d3" stroke-width="1.1" stroke-linejoin="bevel"/><polyline points="500,175.1 506,175.4 511,174.8 517,175.5 522,175.6 528,173.9 533,174.5 539,174.2 544,173.9 550,174.6 555,174.5 561,174.6 566,174.0 572,174.5 577,175.2 583,173.9 588,175.4 594,173.5 599,174.0 605,173.8 610,173.6 616,174.0 621,173.4 627,174.3 632,173.5 638,174.3 643,174.9 649,174.4 654,174.4 660,173.5 665,173.3 671,174.8 676,174.2 682,173.9 687,173.0 693,173.4 698,174.8 704,172.9 709,173.8 715,174.8 720,174.4 726,173.5 731,173.8 737,174.2 742,174.1 748,174.3 753,173.6 759,173.8 764,172.7 770,173.5 775,174.4 781,174.5 786,174.4 792,172.8 797,172.9 803,173.5 808,174.3 814,173.3 819,174.1 825,173.0 830,172.1 836,172.7 841,174.0 847,172.3 852,173.6 858,172.2 863,173.8 869,172.2 874,173.0 880,173.2 885,172.2 891,172.6 896,172.1 902,170.8 907,171.6 913,171.0 918,171.0 924,172.1 929,172.3 935,172.6 940,171.7 946,171.5 951,172.3 957,171.2 962,173.2 968,171.3 973,172.6 979,173.8 984,171.9 990,172.2 995,174.3 1001,173.2 1006,174.1 1012,173.5 1017,174.4 1023,174.8 1028,173.4 1034,174.4 1039,174.0 1045,174.7 1050,175.1 1056,174.7 1061,174.2 1067,174.9 1072,174.4 1078,174.5 1083,173.4 1089,173.5 1094,173.2 1100,174.4 1105,173.3 1111,171.3 1116,171.9 1122,171.2 1127,169.7 1133,170.2 1138,168.5 1144,169.8 1149,166.4 1155,167.2 1160,167.2 1166,162.9 1171,164.0 1177,163.1 1182,166.7 1188,164.1 1193,168.2 1199,168.2 1204,169.2 1210,167.3 1215,169.9 1221,169.0 1226,172.1 1232,171.7 1237,171.9 1243,172.3 1248,173.6 1254,174.6 1259,175.4 1265,174.8 1270,175.8 1276,175.4 1281,175.8 1287,175.8 1292,176.2 1298,176.1 1303,176.1 1309,176.0 1314,176.0" fill="none" stroke="#ffdab9" stroke-width="1.1" stroke-linejoin="bevel"/><polyline points="500,175.8 506,174.8 511,174.9 517,174.2 522,174.7 528,175.7 533,174.1 539,174.4 544,174.6 550,175.6 555,174.3 561,174.8 566,174.3 572,173.7 577,173.8 583,175.3 588,174.0 594,174.6 599,174.0 605,174.7 610,174.5 616,174.5 621,175.1 627,174.7 632,173.9 638,175.1 643,175.0 649,173.6 654,173.9 660,174.1 665,175.0 671,174.9 676,174.5 682,173.2 687,174.0 693,173.2 698,174.7 704,174.2 709,174.0 715,173.3 720,174.8 726,173.2 731,174.0 737,174.9 742,174.1 748,174.2 753,173.5 759,172.9 764,173.9 770,173.4 775,174.0 781,173.2 786,174.6 792,173.2 797,174.4 803,173.5 808,174.3 814,173.9 819,174.2 825,173.8 830,173.1 836,173.3 841,173.5 847,173.0 852,172.3 858,173.4 863,172.8 869,173.0 874,171.7 880,173.3 885,172.1 891,173.2 896,173.0 902,171.5 907,171.8 913,172.7 918,173.2 924,171.0 929,172.3 935,171.3 940,172.2 946,171.8 951,172.1 957,171.1 962,171.5 968,172.8 973,172.9 979,173.7 984,172.6 990,174.3 995,173.9 1001,172.8 1006,174.7 1012,173.4 1017,173.8 1023,173.9 1028,174.5 1034,174.9 1039,173.5 1045,173.9 1050,173.9 1056,175.2 1061,173.9 1067,174.9 1072,174.9 1078,174.2 1083,173.9 1089,174.8 1094,173.2 1100,173.3 1105,172.1 1111,171.6 1116,171.6 1122,171.9 1127,169.3 1133,169.2 1138,170.0 1144,166.9 1149,166.6 1155,168.1 1160,167.6 1166,168.4 1171,165.3 1177,166.8 1182,166.7 1188,167.2 1193,168.3 1199,167.1 1204,168.9 1210,169.6 1215,170.5 1221,170.5 1226,170.2 1232,173.1 1237,172.0 1243,172.7 1248,173.8 1254,174.4 1259,174.4 1265,175.0 1270,175.0 1276,174.7 1281,175.0 1287,175.9 1292,176.2 1298,175.0 1303,175.9 1309,175.3 1314,176.1" fill="none" stroke="#008b8b" stroke-width="1.1" stroke-linejoin="bevel"/><polyline points="500,170.9 506,171.0 511,170.1 517,170.6 522,169.7 528,169.4 533,170.6 539,169.7 544,169.5 550,168.8 555,169.0 561,169.7 566,170.1 572,168.3 577,168.1 583,169.4 588,169.0 594,168.9 599,169.2 605,167.6 610,168.0 616,168.9 621,168.3 627,168.8 632,167.2 638,167.0 643,166.9 649,166.9 654,167.6 660,167.7 665,167.1 671,168.2 676,166.9 682,167.0 687,166.3 693,166.3 698,167.8 704,167.7 709,167.5 715,166.4 720,167.7 726,165.7 731,165.7 737,167.3 742,165.6 748,166.9 753,166.9 759,166.7 764,166.9 770,166.0 775,165.2 781,166.7 786,166.0 792,165.1 797,165.5 803,164.8 808,164.1 814,164.9 819,163.9 825,165.0 830,165.1 836,163.5 841,164.7 847,162.7 852,164.4 858,163.7 863,163.5 869,161.5 874,162.7 880,163.2 885,162.5 891,160.7 896,159.4 902,159.0 907,158.6 913,160.3 918,159.4 924,157.7 929,159.9 935,159.4 940,159.8 946,160.1 951,161.0 957,161.1 962,160.3 968,162.6 973,163.7 979,163.4 984,163.2 990,164.2 995,165.2 1001,164.9 1006,164.7 1012,166.2 1017,167.1 1023,167.5 1028,167.4 1034,168.2 1039,167.2 1045,169.0 1050,168.1 1056,168.1 1061,168.1 1067,168.0 1072,167.8 1078,168.6 1083,167.6 1089,167.5 1094,165.8 1100,164.2 1105,164.1 1111,162.9 1116,160.3 1122,158.5 1127,153.9 1133,151.7 1138,148.9 1144,147.6 1149,142.4 1155,141.7 1160,136.8 1166,138.2 1171,137.1 1177,132.7 1182,132.3 1188,136.6 1193,137.2 1199,141.8 1204,141.2 1210,148.0 1215,148.7 1221,153.4 1226,155.5 1232,161.1 1237,161.3 1243,163.9 1248,167.7 1254,169.3 1259,169.0 1265,170.8 1270,171.8 1276,172.5 1281,172.7 1287,172.5 1292,173.2 1298,173.2 1303,173.6 1309,173.8 1314,173.0" fill="none" stroke="#2e8b57" stroke-width="1.1" stroke-linejoin="bevel"/><polyline points="500,170.3 506,170.3 511,169.2 517,168.8 522,168.9 528,168.4 533,169.1 539,169.1 544,169.4 550,169.0 555,167.7 561,169.1 566,168.8 572,168.4 577,168.8 583,168.2 588,168.3 594,168.3 599,167.4 605,167.2 610,167.1 616,166.6 621,167.0 627,166.1 632,167.7 638,167.3 643,167.5 649,166.9 654,166.0 660,165.5 665,166.3 671,166.9 676,166.4 682,165.9 687,166.3 693,165.2 698,164.8 704,165.7 709,165.3 715,164.8 720,165.5 726,166.0 731,164.3 737,164.2 742,166.1 748,164.4 753,165.1 759,165.8 764,165.5 770,165.4 775,164.1 781,165.1 786,165.5 792,165.0 797,163.6 803,164.0 808,163.4 814,163.6 819,164.0 825,164.1 830,163.2 836,163.5 841,162.8 847,161.7 852,162.0 858,161.5 863,160.9 869,161.4 874,161.0 880,159.4 885,159.5 891,159.2 896,158.1 902,157.6 907,157.2 913,155.6 918,157.5 924,155.5 929,155.7 935,155.7 940,157.7 946,157.4 951,156.7 957,159.3 962,160.2 968,159.5 973,161.3 979,161.1 984,162.8 990,161.6 995,163.8 1001,164.7 1006,163.8 1012,165.0 1017,165.0 1023,165.6 1028,165.2 1034,166.5 1039,167.2 1045,168.3 1050,167.3 1056,167.7 1061,167.0 1067,166.8 1072,166.9 1078,167.3 1083,166.0 1089,165.3 1094,164.1 1100,162.1 1105,162.1 1111,159.8 1116,158.6 1122,153.8 1127,152.5 1133,147.2 1138,143.8 1144,142.6 1149,136.3 1155,135.1 1160,132.9 1166,130.2 1171,126.9 1177,129.0 1182,129.6 1188,132.0 1193,131.3 1199,135.8 1204,139.8 1210,144.1 1215,147.9 1221,149.5 1226,153.4 1232,156.3 1237,159.6 1243,162.8 1248,164.9 1254,166.9 1259,168.3 1265,169.3 1270,171.1 1276,170.7 1281,171.9 1287,172.4 1292,171.7 1298,173.1 1303,172.6 1309,173.0 1314,172.6" fill="none" stroke="#0000ff" stroke-width="1.1" stroke-linejoin="bevel"/><polyline points="500,171.0 506,171.4 511,172.2 517,171.1 522,172.0 528,170.4 533,170.5 539,171.4 544,171.5 550,170.5 555,170.3 561,169.8 566,170.3 572,171.1 577,169.9 583,171.1 588,169.5 594,169.6 599,169.4 605,169.2 610,169.7 616,168.9 621,169.4 627,169.6 632,169.8 638,169.8 643,170.4 649,170.0 654,168.7 660,169.8 665,168.8 671,168.5 676,168.6 682,168.9 687,169.2 693,169.3 698,169.4 704,168.4 709,168.2 715,167.7 720,168.9 726,167.6 731,167.5 737,168.8 742,167.3 748,168.0 753,167.2 759,167.5 764,168.4 770,168.5 775,167.9 781,167.9 786,168.8 792,167.0 797,167.6 803,167.6 808,166.8 814,167.7 819,167.6 825,166.6 830,167.2 836,166.8 841,167.2 847,167.1 852,166.2 858,165.6 863,164.3 869,164.9 874,165.3 880,165.1 885,165.1 891,163.9 896,162.1 902,163.9 907,162.5 913,161.7 918,161.5 924,162.1 929,161.9 935,161.0 940,161.1 946,163.4 951,163.1 957,162.3 962,164.1 968,165.4 973,164.4 979,166.7 984,166.9 990,166.4 995,167.5 1001,166.8 1006,167.2 1012,168.4 1017,167.8 1023,168.3 1028,168.6 1034,169.4 1039,169.7 1045,170.7 1050,169.9 1056,169.0 1061,169.0 1067,170.5 1072,170.4 1078,169.7 1083,168.6 1089,168.6 1094,168.6 1100,167.1 1105,165.6 1111,163.7 1116,163.0 1122,160.3 1127,158.0 1133,155.8 1138,155.6 1144,150.4 1149,150.6 1155,148.8 1160,144.9 1166,145.9 1171,144.8 1177,142.8 1182,142.7 1188,145.6 1193,142.8 1199,145.4 1204,149.5 1210,151.9 1215,155.8 1221,156.2 1226,161.7 1232,163.5 1237,165.8 1243,166.1 1248,168.5 1254,170.1 1259,171.2 1265,171.1 1270,172.7 1276,172.3 1281,172.7 1287,173.3 1292,173.7 1298,173.7 1303,173.8 1309,174.1 1314,173.8" fill="none" stroke="#ffdab9" stroke-width="1.1" stroke-linejoin="bevel"/><polyline points="500,170.1 506,170.9 511,169.7 517,169.8 522,169.8 528,169.5 533,169.3 539,169.5 544,168.8 550,168.5 555,168.4 561,169.8 566,169.4 572,169.2 577,168.4 583,168.3 588,167.5 594,168.3 599,168.7 605,168.4 610,167.8 616,168.7 621,167.6 627,167.3 632,167.5 638,167.7 643,166.8 649,167.7 654,167.4 660,168.0 665,167.3 671,166.3 676,167.3 682,165.9 687,166.2 693,166.8 698,166.6 704,167.4 709,167.0 715,166.0 720,167.2 726,165.2 731,165.7 737,166.4 742,166.3 748,165.9 753,166.3 759,165.4 764,165.9 770,166.3 775,166.5 781,164.9 786,165.2 792,164.6 797,165.2 803,166.0 808,164.2 814,164.9 819,163.2 825,164.4 830,162.8 836,162.9 841,163.3 847,163.1 852,161.9 858,161.5 863,161.9 869,163.1 874,163.0 880,161.7 885,160.8 891,160.5 896,161.0 902,159.6 907,158.5 913,159.6 918,159.7 924,158.2 929,159.3 935,158.7 940,159.1 946,158.3 951,160.5 957,159.9 962,160.7 968,161.2 973,162.2 979,162.8 984,162.4 990,163.4 995,163.6 1001,164.5 1006,165.8 1012,166.6 1017,165.2 1023,166.2 1028,167.8 1034,167.9 1039,168.6 1045,168.9 1050,167.9 1056,167.7 1061,168.3 1067,168.1 1072,167.3 1078,167.5 1083,167.2 1089,165.5 1094,164.4 1100,163.4 1105,162.3 1111,162.2 1116,157.7 1122,155.5 1127,154.3 1133,150.6 1138,148.0 1144,144.1 1149,140.7 1155,139.2 1160,135.2 1166,131.9 1171,131.4 1177,130.6 1182,134.9 1188,136.1 1193,135.9 1199,137.7 1204,142.1 1210,145.1 1215,149.7 1221,151.7 1226,156.6 1232,158.1 1237,162.0 1243,165.3 1248,166.4 1254,167.7 1259,168.8 1265,170.0 1270,170.7 1276,171.3 1281,171.4 1287,173.0 1292,172.8 1298,172.7 1303,172.6 1309,173.1 1314,173.2" fill="none" stroke="#9acd32" stroke-width="1.1" stroke-linejoin="bevel"/><polyline points="500,170.9 506,170.9 511,169.6 517,170.4 522,170.1 528,169.3 533,169.1 539,169.6 544,169.2 550,169.4 555,168.8 561,169.1 566,168.9 572,169.0 577,168.8 583,168.7 588,169.1 594,168.4 599,167.8 605,168.3 610,168.5 616,167.0 621,167.6 627,167.5 632,167.8 638,166.6 643,166.7 649,166.9 654,166.7 660,166.6 665,166.9 671,166.9 676,166.9 682,166.6 687,166.6 693,166.4 698,166.3 704,165.7 709,165.4 715,166.7 720,167.0 726,166.4 731,166.8 737,165.2 742,165.5 748,166.1 753,166.2 759,164.7 764,164.7 770,164.9 775,164.9 781,164.7 786,165.2 792,165.3 797,164.8 803,163.9 808,163.4 814,163.3 819,163.2 825,164.7 830,164.1 836,162.1 841,162.9 847,162.7 852,163.0 858,161.4 863,162.0 869,160.6 874,162.6 880,160.0 885,161.9 891,160.9 896,159.5 902,158.2 907,159.0 913,157.7 918,156.6 924,158.1 929,157.1 935,157.6 940,157.6 946,159.4 951,159.2 957,158.6 962,159.9 968,161.7 973,161.7 979,162.1 984,163.2 990,163.2 995,163.7 1001,165.5 1006,165.5 1012,165.0 1017,166.4 1023,167.1 1028,166.1 1034,167.4 1039,166.6 1045,167.8 1050,168.6 1056,167.5 1061,168.1 1067,167.0 1072,166.9 1078,166.5 1083,167.5 1089,166.9 1094,164.4 1100,164.7 1105,163.2 1111,161.9 1116,159.4 1122,156.0 1127,151.5 1133,150.7 1138,147.8 1144,142.1 1149,141.8 1155,136.8 1160,134.4 1166,130.8 1171,134.5 1177,131.3 1182,132.8 1188,131.7 1193,136.7 1199,137.1 1204,142.6 1210,144.8 1215,146.7 1221,153.0 1226,156.2 1232,157.6 1237,161.1 1243,165.0 1248,166.7 1254,168.3 1259,169.6 1265,169.7 1270,170.6 1276,170.8 1281,171.7 1287,172.1 1292,172.7 1298,172.4 1303,172.9 1309,173.6 1314,173.2" fill="none" stroke="#b22222" stroke-width="1.1" stroke-linejoin="bevel"/><polyline points="500,170.6 506,170.7 511,170.2 517,169.6 522,169.6 528,169.7 533,168.7 539,169.0 544,169.0 550,169.6 555,169.8 561,168.5 566,168.4 572,168.3 577,168.5 583,168.3 588,169.0 594,168.0 599,167.0 605,168.5 610,168.0 616,168.2 621,167.7 627,167.7 632,168.0 638,167.5 643,166.5 649,167.4 654,167.9 660,167.4 665,166.6 671,166.0 676,167.2 682,166.3 687,167.2 693,166.0 698,167.0 704,166.6 709,165.1 715,165.5 720,165.8 726,166.5 731,166.5 737,165.9 742,165.8 748,166.5 753,165.5 759,166.4 764,164.7 770,164.7 775,165.4 781,165.4 786,164.5 792,165.9 797,166.0 803,165.1 808,163.4 814,165.3 819,163.3 825,162.7 830,163.6 836,162.5 841,162.1 847,163.2 852,163.0 858,161.8 863,162.8 869,161.0 874,160.6 880,160.2 885,161.6 891,159.5 896,159.8 902,159.1 907,158.6 913,156.4 918,159.0 924,157.2 929,157.4 935,157.5 940,156.8 946,158.9 951,159.7 957,159.5 962,161.3 968,161.1 973,161.1 979,161.9 984,162.4 990,163.2 995,163.2 1001,163.6 1006,165.4 1012,165.9 1017,165.8 1023,166.6 1028,166.5 1034,167.5 1039,167.5 1045,168.6 1050,167.3 1056,167.5 1061,167.8 1067,167.4 1072,167.9 1078,166.1 1083,166.8 1089,166.4 1094,164.7 1100,163.0 1105,163.5 1111,161.4 1116,158.4 1122,155.6 1127,152.8 1133,150.8 1138,147.2 1144,143.0 1149,139.2 1155,139.2 1160,133.9 1166,132.3 1171,131.1 1177,131.7 1182,132.0 1188,135.8 1193,135.7 1199,136.0 1204,139.7 1210,146.0 1215,148.5 1221,152.1 1226,155.0 1232,159.3 1237,161.4 1243,164.6 1248,165.6 1254,167.3 1259,169.2 1265,170.0 1270,170.3 1276,171.3 1281,171.2 1287,172.8 1292,172.3 1298,172.4 1303,173.0 1309,172.5 1314,173.1" fill="none" stroke="#daa520" stroke-width="1.1" stroke-linejoin="bevel"/><polyline points="500,168.9 506,168.3 511,169.7 517,169.5 522,169.4 528,168.6 533,167.8 539,167.9 544,168.0 550,167.3 555,168.0 561,168.3 566,167.2 572,168.2 577,167.7 583,167.9 588,167.5 594,167.6 599,166.5 605,167.2 610,166.2 616,165.7 621,166.5 627,166.8 632,165.7 638,165.4 643,165.0 649,165.6 654,165.4 660,164.8 665,165.0 671,164.3 676,165.6 682,164.5 687,164.7 693,164.9 698,165.8 704,164.7 709,165.1 715,164.3 720,164.4 726,164.3 731,165.1 737,164.9 742,163.8 748,163.6 753,162.8 759,163.2 764,164.1 770,163.7 775,163.5 781,162.8 786,163.6 792,162.4 797,163.2 803,163.1 808,162.7 814,162.7 819,160.9 825,162.8 830,161.7 836,162.2 841,160.5 847,161.5 852,161.2 858,160.3 863,159.5 869,158.9 874,159.4 880,159.5 885,158.5 891,156.3 896,157.4 902,157.2 907,153.9 913,155.1 918,156.1 924,156.1 929,153.9 935,154.3 940,156.3 946,155.2 951,157.2 957,157.3 962,157.6 968,159.7 973,158.2 979,160.4 984,161.5 990,160.8 995,163.0 1001,163.6 1006,162.8 1012,163.7 1017,163.3 1023,164.0 1028,165.7 1034,166.5 1039,165.9 1045,166.6 1050,166.9 1056,165.6 1061,166.9 1067,165.9 1072,166.8 1078,164.7 1083,164.2 1089,164.1 1094,163.7 1100,161.4 1105,159.3 1111,157.4 1116,157.0 1122,152.7 1127,150.6 1133,145.8 1138,140.4 1144,136.9 1149,136.0 1155,131.2 1160,129.5 1166,128.2 1171,123.8 1177,123.3 1182,126.2 1188,127.3 1193,128.2 1199,131.1 1204,135.9 1210,141.5 1215,145.7 1221,149.5 1226,151.3 1232,156.0 1237,158.9 1243,162.4 1248,164.8 1254,167.1 1259,167.3 1265,169.1 1270,170.7 1276,170.4 1281,171.1 1287,171.4 1292,171.5 1298,172.0 1303,171.8 1309,171.8 1314,172.8" fill="none" stroke="#2f4f4f" stroke-width="1.1" stroke-linejoin="bevel"/><polyline points="500,171.3 506,171.4 511,172.4 517,172.1 522,171.7 528,171.4 533,171.8 539,171.0 544,171.9 550,171.5 555,170.8 561,171.8 566,171.1 572,170.7 577,169.9 583,171.2 588,169.8 594,170.3 599,170.1 605,169.9 610,169.3 616,170.1 621,169.8 627,170.0 632,169.4 638,169.9 643,170.6 649,170.6 654,169.3 660,168.8 665,169.0 671,168.7 676,168.8 682,169.8 687,169.4 693,169.9 698,169.1 704,168.6 709,169.1 715,170.0 720,169.1 726,169.8 731,168.4 737,168.7 742,169.3 748,168.8 753,168.7 759,169.0 764,168.5 770,168.6 775,168.9 781,169.2 786,168.1 792,167.7 797,167.8 803,168.9 808,168.2 814,167.4 819,168.2 825,167.0 830,167.1 836,167.7 841,166.5 847,167.1 852,166.9 858,166.8 863,166.6 869,167.0 874,165.9 880,166.7 885,166.0 891,165.1 896,165.1 902,163.5 907,162.0 913,162.2 918,162.4 924,162.0 929,162.8 935,162.2 940,162.3 946,163.7 951,163.1 957,163.8 962,163.9 968,164.1 973,165.1 979,167.2 984,167.5 990,167.9 995,167.4 1001,167.6 1006,167.9 1012,169.3 1017,169.1 1023,169.3 1028,169.4 1034,170.0 1039,169.2 1045,170.9 1050,170.6 1056,170.0 1061,169.9 1067,169.6 1072,170.6 1078,170.1 1083,169.1 1089,169.1 1094,169.3 1100,168.5 1105,166.5 1111,165.0 1116,163.3 1122,161.5 1127,159.5 1133,157.5 1138,153.3 1144,154.0 1149,149.8 1155,147.8 1160,146.7 1166,144.4 1171,144.8 1177,143.1 1182,142.5 1188,145.5 1193,146.5 1199,148.1 1204,151.7 1210,154.0 1215,154.8 1221,160.3 1226,163.0 1232,162.8 1237,164.7 1243,168.5 1248,169.5 1254,169.6 1259,171.3 1265,172.3 1270,171.8 1276,173.6 1281,172.8 1287,173.0 1292,173.6 1298,173.2 1303,173.4 1309,173.4 1314,173.9" fill="none" stroke="#2e8b57" stroke-width="1.1" stroke-linejoin="bevel"/><polyline points="500,169.2 506,169.1 511,169.5 517,169.3 522,168.6 528,167.5 533,167.6 539,168.8 544,168.2 550,167.9 555,167.9 561,168.1 566,167.1 572,166.5 577,167.2 583,167.4 588,167.4 594,167.4 599,165.9 605,166.8 610,165.7 616,165.5 621,166.8 627,166.5 632,166.1 638,165.1 643,165.1 649,165.8 654,165.4 660,165.5 665,165.2 671,164.4 676,165.4 682,164.2 687,163.9 693,164.4 698,163.6 704,163.5 709,165.0 715,163.2 720,164.8 726,163.4 731,164.7 737,164.3 742,163.9 748,163.0 753,163.2 759,164.1 764,162.6 770,162.5 775,163.2 781,164.1 786,163.5 792,163.4 797,163.1 803,161.6 808,162.1 814,161.3 819,162.7 825,162.0 830,160.6 836,161.2 841,161.2 847,161.3 852,161.1 858,159.9 863,159.3 869,159.4 874,158.7 880,159.1 885,159.0 891,156.5 896,156.6 902,155.4 907,154.9 913,155.2 918,155.8 924,155.1 929,155.1 935,155.6 940,155.9 946,155.3 951,157.3 957,155.7 962,157.8 968,158.3 973,158.8 979,160.8 984,161.3 990,160.4 995,161.7 1001,162.3 1006,163.2 1012,162.8 1017,163.8 1023,163.7 1028,164.2 1034,164.6 1039,165.4 1045,166.0 1050,166.4 1056,166.2 1061,166.0 1067,165.9 1072,165.1 1078,164.6 1083,165.7 1089,163.5 1094,162.7 1100,161.4 1105,158.9 1111,159.0 1116,155.3 1122,152.6 1127,147.3 1133,146.5 1138,141.2 1144,139.2 1149,132.7 1155,130.5 1160,126.3 1166,126.4 1171,121.9 1177,126.3 1182,125.7 1188,124.5 1193,126.2 1199,129.9 1204,135.9 1210,140.8 1215,142.6 1221,146.9 1226,153.2 1232,154.3 1237,158.8 1243,162.8 1248,164.3 1254,166.6 1259,168.7 1265,168.4 1270,169.2 1276,171.2 1281,171.2 1287,171.8 1292,171.5 1298,172.6 1303,172.4 1309,172.5 1314,172.6" fill="none" stroke="#daa520" stroke-width="1.1" stroke-linejoin="bevel"/><polyline points="500,170.8 506,171.2 511,169.9 517,169.5 522,170.0 528,169.5 533,170.3 539,168.9 544,169.6 550,169.1 555,169.0 561,169.5 566,168.8 572,169.6 577,168.0 583,167.8 588,167.7 594,167.6 599,168.0 605,169.0 610,168.9 616,168.9 621,167.3 627,167.8 632,167.9 638,168.2 643,166.9 649,167.4 654,168.2 660,167.7 665,166.5 671,166.7 676,166.2 682,166.9 687,166.6 693,166.4 698,167.5 704,167.2 709,165.7 715,167.3 720,166.0 726,167.2 731,167.3 737,165.9 742,166.4 748,165.8 753,166.4 759,165.6 764,165.1 770,164.9 775,165.3 781,166.7 786,165.9 792,165.5 797,165.0 803,166.3 808,164.8 814,164.4 819,163.8 825,165.0 830,164.5 836,164.0 841,164.7 847,162.2 852,162.5 858,163.2 863,162.2 869,162.7 874,161.1 880,162.9 885,161.5 891,159.8 896,159.5 902,160.4 907,157.3 913,157.5 918,157.8 924,159.8 929,157.4 935,157.8 940,158.5 946,160.4 951,159.1 957,160.0 962,160.6 968,162.5 973,162.8 979,163.7 984,164.4 990,163.7 995,165.0 1001,163.9 1006,164.7 1012,165.8 1017,167.2 1023,166.7 1028,167.1 1034,168.3 1039,167.1 1045,167.7 1050,168.3 1056,167.7 1061,167.9 1067,167.8 1072,168.4 1078,166.8 1083,167.3 1089,167.3 1094,165.3 1100,164.9 1105,163.1 1111,161.4 1116,160.2 1122,158.3 1127,153.8 1133,152.3 1138,146.6 1144,144.5 1149,141.1 1155,139.0 1160,134.8 1166,137.5 1171,133.7 1177,134.7 1182,136.6 1188,133.4 1193,137.0 1199,138.7 1204,141.7 1210,147.9 1215,149.7 1221,153.7 1226,157.9 1232,159.2 1237,161.8 1243,164.4 1248,167.0 1254,168.6 1259,169.6 1265,170.7 1270,170.9 1276,172.0 1281,171.6 1287,172.3 1292,172.4 1298,173.1 1303,173.2 1309,172.6 1314,172.7" fill="none" stroke="#ff6347" stroke-width="1.1" stroke-linejoin="bevel"/><polyline points="500,172.7 506,172.8 511,172.3 517,172.4 522,173.5 528,173.3 533,172.2 539,171.9 544,171.6 550,171.9 555,172.9 561,172.1 566,171.9 572,171.9 577,172.7 583,171.1 588,171.9 594,172.2 599,170.8 605,171.9 610,172.5 616,171.3 621,172.0 627,172.0 632,171.8 638,171.2 643,171.7 649,171.0 654,170.4 660,170.2 665,170.4 671,170.3 676,171.5 682,170.3 687,171.8 693,170.7 698,171.7 704,171.6 709,169.8 715,171.5 720,170.2 726,170.6 731,171.6 737,169.9 742,171.4 748,169.6 753,169.7 759,170.4 764,170.4 770,171.3 775,169.8 781,171.2 786,170.1 792,169.2 797,169.7 803,170.8 808,169.3 814,169.2 819,169.9 825,168.8 830,169.1 836,169.3 841,168.9 847,169.4 852,169.2 858,167.6 863,168.8 869,167.6 874,168.5 880,168.8 885,168.9 891,166.0 896,166.2 902,165.1 907,165.8 913,167.4 918,167.1 924,167.4 929,165.8 935,165.7 940,164.8 946,167.0 951,167.5 957,167.9 962,168.4 968,169.0 973,168.2 979,168.7 984,169.2 990,168.2 995,170.0 1001,169.1 1006,170.0 1012,171.1 1017,171.5 1023,170.5 1028,170.3 1034,172.1 1039,171.1 1045,172.2 1050,171.3 1056,171.0 1061,171.2 1067,172.0 1072,172.1 1078,170.3 1083,170.2 1089,169.7 1094,170.0 1100,170.5 1105,169.0 1111,166.6 1116,167.7 1122,165.6 1127,164.9 1133,160.3 1138,160.5 1144,159.8 1149,156.9 1155,156.1 1160,153.6 1166,151.6 1171,150.7 1177,153.6 1182,151.5 1188,154.7 1193,153.8 1199,153.5 1204,157.8 1210,157.4 1215,161.8 1221,163.2 1226,163.9 1232,168.0 1237,168.0 1243,169.5 1248,170.3 1254,170.8 1259,172.2 1265,173.5 1270,173.9 1276,173.8 1281,174.3 1287,174.1 1292,174.9 1298,174.1 1303,174.6 1309,175.2 1314,175.2" fill="none" stroke="#5f9ea0" stroke-width="1.1" stroke-linejoin="bevel"/><polyline points="500,174.5 506,174.0 511,173.5 517,174.7 522,175.0 528,174.3 533,174.1 539,173.3 544,174.5 550,174.1 555,174.3 561,173.3 566,173.3 572,174.0 577,173.0 583,174.7 588,174.1 594,174.6 599,174.1 605,172.8 610,172.6 616,173.4 621,173.4 627,173.6 632,173.7 638,173.4 643,173.1 649,174.0 654,172.6 660,173.0 665,172.5 671,173.9 676,173.2 682,172.7 687,172.5 693,173.5 698,173.7 704,173.2 709,173.1 715,173.1 720,173.7 726,173.4 731,172.4 737,171.9 742,173.3 748,173.5 753,172.3 759,172.0 764,173.2 770,172.6 775,171.7 781,171.9 786,172.5 792,172.4 797,172.5 803,172.5 808,172.8 814,171.3 819,171.7 825,172.3 830,172.8 836,173.0 841,172.2 847,171.9 852,171.1 858,170.6 863,172.6 869,171.2 874,170.6 880,170.9 885,170.6 891,171.9 896,170.6 902,170.0 907,171.3 913,171.3 918,171.4 924,171.4 929,170.4 935,169.7 940,169.3 946,169.2 951,170.3 957,169.6 962,170.9 968,171.1 973,172.7 979,172.1 984,172.9 990,171.5 995,173.1 1001,173.4 1006,173.4 1012,173.4 1017,173.2 1023,172.3 1028,173.2 1034,173.4 1039,174.0 1045,173.8 1050,174.4 1056,173.0 1061,173.8 1067,173.2 1072,173.7 1078,173.6 1083,173.8 1089,173.6 1094,171.6 1100,172.2 1105,171.2 1111,171.0 1116,171.1 1122,170.5 1127,167.7 1133,166.4 1138,167.6 1144,165.1 1149,165.7 1155,162.9 1160,164.8 1166,160.1 1171,163.8 1177,159.9 1182,159.9 1188,161.4 1193,163.8 1199,165.5 1204,165.9 1210,165.0 1215,165.5 1221,168.3 1226,170.4 1232,169.4 1237,172.7 1243,172.0 1248,172.6 1254,174.2 1259,174.0 1265,174.9 1270,175.1 1276,174.7 1281,175.6 1287,175.0 1292,175.5 1298,174.6 1303,175.5 1309,175.8 1314,174.9" fill="none" stroke="#ffffff" stroke-width="1.1" stroke-linejoin="bevel"/><polyline points="500,172.3 506,172.1 511,171.4 517,171.8 522,171.7 528,171.5 533,171.5 539,171.2 544,171.3 550,171.2 555,171.7 561,171.8 566,171.2 572,170.3 577,170.1 583,171.2 588,170.6 594,170.6 599,170.6 605,171.1 610,169.9 616,171.1 621,170.8 627,170.6 632,170.7 638,170.7 643,170.8 649,169.9 654,170.5 660,169.6 665,169.6 671,169.5 676,169.7 682,169.4 687,169.9 693,169.5 698,169.0 704,169.9 709,168.8 715,169.1 720,168.2 726,168.9 731,169.0 737,168.5 742,169.4 748,169.2 753,169.0 759,168.3 764,168.3 770,169.4 775,167.7 781,167.6 786,168.6 792,167.4 797,168.2 803,168.5 808,169.0 814,169.0 819,167.6 825,167.1 830,167.1 836,166.6 841,167.2 847,166.3 852,166.5 858,166.2 863,166.3 869,165.8 874,165.9 880,166.9 885,164.9 891,164.4 896,164.6 902,162.6 907,163.5 913,164.4 918,163.4 924,163.9 929,164.4 935,162.4 940,164.4 946,163.3 951,165.3 957,164.7 962,163.9 968,166.7 973,165.2 979,167.7 984,165.8 990,166.4 995,167.9 1001,167.8 1006,168.5 1012,169.4 1017,169.3 1023,169.4 1028,168.9 1034,170.7 1039,170.1 1045,170.5 1050,170.4 1056,169.9 1061,170.2 1067,170.6 1072,169.2 1078,169.7 1083,170.1 1089,169.0 1094,167.7 1100,168.7 1105,166.3 1111,165.4 1116,164.5 1122,163.2 1127,161.0 1133,158.2 1138,156.0 1144,153.0 1149,152.3 1155,148.6 1160,147.6 1166,144.5 1171,143.7 1177,146.5 1182,142.8 1188,146.1 1193,148.6 1199,150.8 1204,150.8 1210,154.6 1215,156.2 1221,160.3 1226,160.7 1232,164.7 1237,165.1 1243,167.9 1248,169.4 1254,170.3 1259,171.4 1265,172.1 1270,172.5 1276,172.3 1281,173.0 1287,174.1 1292,173.0 1298,174.6 1303,174.6 1309,173.7 1314,174.5" fill="none" stroke="#87ceeb" stroke-width="1.1" stroke-linejoin="bevel"/><polyline points="500,168.0 506,169.2 511,168.4 517,167.4 522,168.4 528,167.6 533,168.0 539,167.7 544,166.9 550,167.1 555,166.7 561,167.5 566,167.5 572,167.5 577,166.3 583,166.4 588,166.5 594,165.6 599,166.1 605,165.9 610,166.2 616,166.2 621,165.0 627,165.4 632,165.8 638,166.0 643,164.8 649,165.8 654,165.1 660,164.9 665,165.4 671,165.5 676,163.5 682,164.7 687,163.4 693,165.0 698,164.5 704,163.9 709,164.4 715,163.4 720,164.1 726,163.0 731,162.3 737,162.5 742,164.0 748,164.0 753,164.0 759,162.1 764,162.2 770,162.5 775,163.0 781,162.6 786,161.6 792,162.2 797,162.8 803,161.5 808,162.3 814,160.8 819,161.2 825,160.7 830,161.6 836,159.4 841,159.0 847,160.5 852,159.9 858,158.6 863,159.2 869,159.6 874,158.4 880,156.7 885,156.3 891,155.6 896,155.9 902,155.7 907,152.1 913,154.2 918,153.8 924,152.7 929,154.0 935,153.8 940,154.7 946,153.3 951,154.1 957,156.5 962,156.9 968,156.6 973,158.6 979,158.0 984,159.7 990,160.2 995,160.2 1001,162.7 1006,162.6 1012,162.7 1017,162.8 1023,163.7 1028,164.3 1034,165.1 1039,164.9 1045,165.9 1050,165.6 1056,165.2 1061,165.8 1067,165.3 1072,166.0 1078,165.1 1083,164.1 1089,162.6 1094,162.6 1100,160.2 1105,158.5 1111,157.9 1116,154.1 1122,151.7 1127,146.8 1133,142.8 1138,139.9 1144,137.2 1149,131.7 1155,128.5 1160,125.5 1166,125.5 1171,121.5 1177,119.5 1182,121.9 1188,125.9 1193,125.5 1199,130.6 1204,132.8 1210,138.5 1215,140.9 1221,147.1 1226,149.7 1232,154.6 1237,158.2 1243,160.8 1248,163.5 1254,165.8 1259,167.6 1265,168.2 1270,169.8 1276,170.8 1281,171.4 1287,170.7 1292,171.0 1298,171.2 1303,172.0 1309,172.1 1314,172.9" fill="none" stroke="#1e90ff" stroke-width="1.1" stroke-linejoin="bevel"/><polyline points="500,169.5 506,169.4 511,169.2 517,169.4 522,169.5 528,169.3 533,168.5 539,168.0 544,168.9 550,168.7 555,168.4 561,168.3 566,167.8 572,167.4 577,167.2 583,167.0 588,167.0 594,166.4 599,167.3 605,167.2 610,166.7 616,167.3 621,166.2 627,166.9 632,166.5 638,166.5 643,166.7 649,167.3 654,166.7 660,166.2 665,165.1 671,166.7 676,165.0 682,164.8 687,165.1 693,166.0 698,166.4 704,164.6 709,166.2 715,165.6 720,164.2 726,164.7 731,164.3 737,164.2 742,165.5 748,164.7 753,165.5 759,164.8 764,164.5 770,163.7 775,164.7 781,163.9 786,164.9 792,164.6 797,164.9 803,163.5 808,163.2 814,162.7 819,163.1 825,161.6 830,161.9 836,161.9 841,161.0 847,162.3 852,161.8 858,160.9 863,160.5 869,159.4 874,159.8 880,161.1 885,158.1 891,158.6 896,158.6 902,156.3 907,155.9 913,155.3 918,156.1 924,157.0 929,156.4 935,156.4 940,156.7 946,156.7 951,158.6 957,158.9 962,160.0 968,160.8 973,160.2 979,160.4 984,161.9 990,161.4 995,162.7 1001,163.1 1006,164.4 1012,163.5 1017,165.2 1023,164.6 1028,166.3 1034,165.3 1039,166.3 1045,167.7 1050,166.7 1056,167.7 1061,167.2 1067,167.0 1072,166.9 1078,166.5 1083,166.4 1089,165.2 1094,164.9 1100,162.1 1105,161.6 1111,158.7 1116,157.1 1122,152.7 1127,149.8 1133,147.0 1138,142.9 1144,138.9 1149,135.3 1155,134.5 1160,130.9 1166,131.7 1171,128.9 1177,128.7 1182,127.7 1188,132.4 1193,130.7 1199,136.9 1204,138.5 1210,142.1 1215,144.8 1221,149.6 1226,154.8 1232,156.7 1237,160.9 1243,162.7 1248,165.4 1254,166.2 1259,168.7 1265,170.1 1270,170.8 1276,170.4 1281,171.7 1287,172.2 1292,172.1 1298,172.1 1303,171.9 1309,173.3 1314,173.1" fill="none" stroke="#40e0d0" stroke-width="1.1" stroke-linejoin="bevel"/><polyline points="500,172.0 506,172.1 511,171.8 517,172.1 522,172.0 528,172.4 533,172.6 539,172.2 544,171.6 550,172.1 555,171.5 561,171.2 566,170.9 572,171.2 577,170.7 583,171.4 588,171.2 594,170.9 599,171.8 605,171.2 610,171.0 616,170.6 621,171.3 627,171.3 632,170.4 638,171.7 643,171.3 649,169.7 654,170.3 660,170.5 665,169.7 671,170.0 676,170.5 682,169.6 687,170.7 693,170.3 698,170.9 704,170.6 709,170.8 715,170.8 720,169.0 726,170.0 731,168.8 737,169.7 742,170.8 748,169.6 753,169.0 759,169.8 764,169.9 770,170.1 775,169.9 781,168.9 786,169.7 792,169.4 797,169.6 803,168.7 808,169.2 814,168.2 819,169.1 825,167.4 830,169.4 836,167.5 841,167.2 847,167.7 852,167.0 858,167.3 863,168.4 869,166.3 874,167.3 880,166.5 885,165.7 891,166.1 896,166.4 902,164.3 907,164.2 913,164.1 918,164.5 924,163.5 929,163.5 935,164.0 940,165.3 946,165.2 951,165.6 957,165.3 962,166.7 968,166.1 973,167.3 979,167.1 984,168.7 990,167.4 995,168.3 1001,169.8 1006,170.2 1012,169.3 1017,169.9 1023,169.3 1028,171.2 1034,170.0 1039,170.3 1045,171.5 1050,171.9 1056,170.3 1061,171.4 1067,170.1 1072,170.8 1078,169.7 1083,169.6 1089,169.5 1094,169.6 1100,167.6 1105,167.8 1111,167.6 1116,164.2 1122,164.6 1127,162.8 1133,160.0 1138,157.9 1144,154.2 1149,154.6 1155,150.0 1160,152.7 1166,150.8 1171,147.3 1177,147.4 1182,146.3 1188,151.3 1193,152.7 1199,152.2 1204,152.2 1210,155.7 1215,157.7 1221,159.6 1226,164.0 1232,166.5 1237,166.7 1243,169.7 1248,170.7 1254,171.5 1259,172.8 1265,172.3 1270,173.6 1276,173.0 1281,172.9 1287,173.5 1292,173.9 1298,174.0 1303,174.4 1309,174.9 1314,174.2" fill="none" stroke="#008b8b" stroke-width="1.1" stroke-linejoin="bevel"/><polyline points="500,173.1 506,171.7 511,171.6 517,171.8 522,172.6 528,171.5 533,172.7 539,172.4 544,172.0 550,170.8 555,172.4 561,172.1 566,171.0 572,170.8 577,171.7 583,171.9 588,170.4 594,170.1 599,170.1 605,170.7 610,171.6 616,170.3 621,170.4 627,170.0 632,170.0 638,170.5 643,169.5 649,170.4 654,170.4 660,170.0 665,169.6 671,170.0 676,169.2 682,170.5 687,169.2 693,169.1 698,170.2 704,170.8 709,169.5 715,169.4 720,168.7 726,169.5 731,169.1 737,168.9 742,170.1 748,169.0 753,169.5 759,169.9 764,169.7 770,169.5 775,168.6 781,169.0 786,169.4 792,170.0 797,168.3 803,168.2 808,167.9 814,167.8 819,169.3 825,168.6 830,168.1 836,168.3 841,166.9 847,168.2 852,168.5 858,167.3 863,168.1 869,168.0 874,166.4 880,166.3 885,166.0 891,166.8 896,165.0 902,164.7 907,164.8 913,165.1 918,165.3 924,164.3 929,164.7 935,164.0 940,163.8 946,165.3 951,164.8 957,166.1 962,165.3 968,167.1 973,166.5 979,166.5 984,166.8 990,167.9 995,167.4 1001,167.5 1006,168.3 1012,169.5 1017,170.0 1023,169.5 1028,170.8 1034,171.0 1039,171.4 1045,170.6 1050,171.1 1056,170.0 1061,170.2 1067,170.6 1072,170.8 1078,170.7 1083,170.9 1089,170.4 1094,168.2 1100,168.7 1105,168.5 1111,164.8 1116,165.0 1122,162.1 1127,161.2 1133,157.4 1138,158.6 1144,154.9 1149,152.1 1155,153.2 1160,147.1 1166,148.8 1171,146.2 1177,149.3 1182,149.6 1188,150.4 1193,148.0 1199,149.1 1204,151.4 1210,155.5 1215,159.6 1221,159.5 1226,162.7 1232,164.0 1237,166.4 1243,168.2 1248,170.4 1254,171.5 1259,172.5 1265,172.5 1270,173.2 1276,172.6 1281,174.2 1287,173.4 1292,174.4 1298,174.6 1303,173.6 1309,174.6 1314,174.2" fill="none" stroke="#dda0dd" stroke-width="1.1" stroke-linejoin="bevel"/><polyline points="500,172.1 506,170.9 511,171.2 517,170.5 522,171.9 528,171.0 533,170.5 539,171.5 544,170.5 550,171.4 555,170.4 561,170.5 566,170.5 572,170.9 577,169.7 583,170.3 588,170.2 594,170.0 599,169.3 605,169.5 610,169.6 616,169.0 621,169.6 627,168.6 632,169.3 638,169.0 643,169.8 649,169.3 654,168.1 660,169.8 665,168.6 671,168.9 676,168.3 682,167.7 687,168.3 693,169.2 698,168.2 704,168.4 709,167.5 715,168.8 720,167.9 726,168.0 731,169.1 737,168.7 742,167.7 748,167.8 753,168.6 759,168.2 764,167.3 770,166.6 775,167.0 781,167.1 786,167.3 792,167.4 797,167.9 803,166.2 808,167.2 814,166.8 819,167.1 825,166.9 830,166.3 836,165.6 841,166.6 847,166.1 852,165.5 858,165.2 863,164.8 869,165.0 874,164.8 880,165.2 885,163.2 891,162.4 896,162.9 902,163.6 907,161.4 913,162.2 918,161.0 924,161.8 929,162.6 935,160.3 940,161.8 946,161.0 951,163.1 957,164.2 962,164.6 968,165.1 973,163.9 979,164.4 984,165.8 990,166.6 995,167.7 1001,167.0 1006,166.7 1012,168.6 1017,167.9 1023,169.1 1028,168.9 1034,169.1 1039,170.3 1045,169.7 1050,169.0 1056,169.0 1061,168.7 1067,169.5 1072,169.5 1078,168.9 1083,169.2 1089,169.0 1094,167.3 1100,167.1 1105,165.7 1111,163.9 1116,162.7 1122,161.2 1127,156.9 1133,155.5 1138,152.0 1144,151.0 1149,145.8 1155,146.0 1160,144.4 1166,141.8 1171,141.4 1177,139.1 1182,143.1 1188,141.6 1193,145.1 1199,145.1 1204,146.5 1210,152.3 1215,152.9 1221,157.2 1226,158.5 1232,161.2 1237,163.4 1243,167.6 1248,168.5 1254,169.5 1259,170.3 1265,171.4 1270,171.5 1276,173.1 1281,173.3 1287,172.6 1292,173.1 1298,173.3 1303,174.2 1309,174.4 1314,174.4" fill="none" stroke="#ffdab9" stroke-width="1.1" stroke-linejoin="bevel"/><polyline points="500,169.0 506,168.9 511,167.7 517,167.7 522,167.3 528,168.6 533,167.5 539,167.2 544,166.6 550,166.9 555,167.5 561,167.7 566,167.4 572,167.1 577,166.4 583,166.7 588,166.9 594,166.8 599,165.5 605,165.2 610,166.4 616,165.5 621,164.5 627,165.6 632,165.2 638,164.5 643,165.9 649,164.2 654,164.3 660,164.2 665,164.9 671,164.5 676,163.5 682,165.1 687,165.0 693,163.7 698,163.0 704,164.5 709,164.4 715,163.7 720,162.9 726,163.3 731,163.0 737,164.2 742,163.8 748,162.9 753,162.5 759,163.8 764,163.7 770,163.1 775,162.8 781,162.9 786,163.1 792,163.2 797,161.9 803,160.9 808,161.3 814,160.4 819,161.9 825,160.5 830,160.7 836,159.3 841,159.6 847,159.3 852,158.2 858,157.8 863,159.5 869,158.5 874,159.1 880,157.6 885,157.6 891,155.5 896,155.6 902,155.7 907,152.4 913,154.6 918,154.2 924,153.4 929,154.8 935,152.7 940,152.9 946,155.3 951,154.7 957,156.8 962,156.5 968,158.3 973,158.6 979,158.9 984,159.5 990,160.0 995,160.1 1001,162.0 1006,162.5 1012,163.3 1017,162.7 1023,164.0 1028,164.9 1034,165.4 1039,165.5 1045,165.2 1050,165.9 1056,165.1 1061,165.7 1067,165.3 1072,165.7 1078,165.0 1083,163.8 1089,164.3 1094,162.4 1100,161.5 1105,159.6 1111,157.3 1116,155.1 1122,150.8 1127,149.1 1133,144.7 1138,140.8 1144,137.2 1149,130.3 1155,127.4 1160,123.2 1166,124.9 1171,123.2 1177,122.1 1182,121.7 1188,121.6 1193,124.1 1199,127.3 1204,135.1 1210,139.3 1215,142.5 1221,146.6 1226,152.2 1232,155.0 1237,159.0 1243,160.2 1248,164.2 1254,166.1 1259,168.1 1265,168.2 1270,170.2 1276,170.4 1281,171.2 1287,171.6 1292,170.8 1298,171.5 1303,171.7 1309,172.4 1314,171.7" fill="none" stroke="#008b8b" stroke-width="1.1" stroke-linejoin="bevel"/><polyline points="500,174.3 506,174.6 511,174.8 517,175.2 522,174.9 528,175.1 533,174.2 539,174.4 544,175.2 550,175.2 555,175.0 561,173.6 566,174.0 572,173.3 577,173.8 583,174.5 588,173.8 594,173.1 599,173.7 605,174.3 610,173.5 616,173.9 621,174.7 627,173.1 632,173.5 638,174.8 643,173.6 649,174.3 654,172.9 660,173.3 665,173.2 671,173.1 676,173.4 682,173.2 687,173.7 693,173.0 698,174.3 704,172.6 709,173.0 715,172.7 720,172.6 726,173.6 731,172.4 737,173.1 742,173.4 748,172.7 753,173.7 759,172.7 764,173.4 770,172.5 775,172.8 781,173.1 786,172.5 792,173.7 797,172.1 803,173.4 808,172.8 814,173.6 819,172.9 825,172.4 830,171.7 836,172.6 841,172.7 847,171.4 852,172.2 858,171.9 863,172.6 869,172.5 874,172.8 880,171.2 885,170.6 891,172.6 896,171.9 902,172.2 907,172.2 913,171.6 918,171.7 924,170.2 929,170.8 935,169.7 940,170.2 946,172.3 951,171.6 957,171.9 962,171.1 968,172.4 973,173.1 979,172.3 984,173.4 990,173.7 995,172.5 1001,172.5 1006,172.9 1012,173.1 1017,174.0 1023,172.5 1028,174.0 1034,174.0 1039,173.0 1045,173.6 1050,174.8 1056,173.5 1061,173.2 1067,174.6 1072,174.6 1078,173.0 1083,174.5 1089,174.0 1094,173.5 1100,173.8 1105,173.3 1111,170.8 1116,171.4 1122,171.7 1127,170.1 1133,167.6 1138,169.0 1144,167.8 1149,166.9 1155,164.5 1160,163.1 1166,163.8 1171,161.7 1177,161.5 1182,165.6 1188,162.6 1193,164.3 1199,163.3 1204,167.0 1210,169.0 1215,166.6 1221,168.7 1226,171.1 1232,170.6 1237,172.0 1243,173.5 1248,174.2 1254,174.2 1259,174.0 1265,174.5 1270,175.1 1276,174.4 1281,174.6 1287,174.8 1292,175.3 1298,174.8 1303,174.8 1309,176.1 1314,175.0" fill="none" stroke="#40e0d0" stroke-width="1.1" stroke-linejoin="bevel"/><polyline points="500,171.9 506,172.1 511,171.5 517,171.5 522,172.4 528,172.1 533,171.0 539,171.0 544,171.4 550,171.3 555,171.8 561,172.1 566,171.6 572,171.7 577,170.9 583,170.8 588,170.7 594,170.1 599,171.7 605,171.3 610,171.4 616,170.9 621,169.8 627,170.6 632,169.9 638,171.0 643,170.6 649,169.7 654,170.6 660,169.7 665,169.9 671,169.7 676,170.9 682,170.2 687,168.9 693,170.0 698,170.2 704,168.7 709,169.4 715,169.2 720,169.6 726,169.2 731,169.7 737,169.8 742,169.8 748,169.8 753,168.8 759,170.0 764,169.9 770,169.0 775,168.0 781,168.4 786,168.5 792,168.3 797,169.4 803,168.6 808,169.6 814,168.3 819,169.2 825,168.9 830,168.7 836,168.0 841,167.6 847,168.0 852,168.2 858,167.9 863,165.7 869,165.5 874,165.5 880,167.3 885,166.7 891,164.4 896,166.3 902,165.5 907,163.6 913,162.7 918,162.8 924,163.1 929,164.6 935,163.4 940,162.8 946,163.4 951,163.6 957,164.6 962,165.0 968,165.6 973,166.7 979,166.8 984,166.3 990,167.6 995,169.3 1001,168.6 1006,168.0 1012,168.6 1017,169.4 1023,168.7 1028,169.4 1034,170.8 1039,170.1 1045,170.1 1050,171.7 1056,169.9 1061,170.8 1067,169.9 1072,171.4 1078,170.6 1083,170.3 1089,170.1 1094,168.5 1100,167.4 1105,166.8 1111,164.9 1116,165.6 1122,163.4 1127,161.2 1133,157.7 1138,155.7 1144,152.3 1149,150.6 1155,150.2 1160,147.5 1166,145.8 1171,146.6 1177,145.5 1182,144.9 1188,145.9 1193,150.8 1199,153.1 1204,151.9 1210,154.0 1215,158.9 1221,159.0 1226,161.7 1232,165.6 1237,167.4 1243,167.8 1248,169.3 1254,171.4 1259,171.0 1265,172.8 1270,172.3 1276,172.5 1281,174.0 1287,173.4 1292,173.8 1298,173.4 1303,174.2 1309,174.3 1314,174.7" fill="none" stroke="#cd5c5c" stroke-width="1.1" stroke-linejoin="bevel"/><polyline points="500,173.4 506,173.4 511,172.9 517,174.2 522,173.7 528,173.0 533,174.0 539,173.4 544,172.9 550,172.4 555,172.9 561,173.0 566,172.4 572,173.1 577,172.9 583,173.5 588,173.6 594,173.3 599,172.9 605,172.6 610,173.2 616,172.2 621,173.1 627,172.9 632,171.9 638,172.1 643,172.4 649,172.3 654,171.9 660,172.9 665,171.8 671,171.7 676,172.5 682,172.0 687,172.3 693,170.9 698,171.9 704,172.7 709,172.0 715,171.8 720,172.7 726,172.3 731,170.8 737,171.3 742,171.6 748,171.6 753,170.6 759,172.1 764,171.6 770,170.8 775,171.2 781,170.4 786,170.5 792,170.4 797,170.4 803,170.3 808,171.6 814,170.7 819,170.5 825,169.7 830,169.8 836,171.5 841,170.1 847,169.0 852,170.6 858,170.4 863,168.9 869,170.4 874,170.4 880,170.0 885,169.3 891,168.9 896,168.5 902,169.5 907,167.1 913,168.2 918,168.3 924,169.0 929,168.3 935,167.3 940,167.5 946,167.1 951,167.5 957,167.6 962,169.0 968,170.0 973,170.9 979,170.6 984,170.1 990,169.7 995,171.6 1001,170.4 1006,171.1 1012,171.0 1017,171.2 1023,172.1 1028,172.7 1034,172.0 1039,172.4 1045,172.2 1050,172.7 1056,173.4 1061,173.4 1067,172.3 1072,172.3 1078,172.0 1083,172.4 1089,171.6 1094,171.1 1100,171.5 1105,169.0 1111,169.3 1116,167.4 1122,168.4 1127,165.4 1133,163.7 1138,162.1 1144,160.5 1149,157.5 1155,159.1 1160,157.6 1166,155.2 1171,158.4 1177,155.0 1182,156.4 1188,154.2 1193,156.5 1199,156.7 1204,162.0 1210,162.5 1215,164.2 1221,166.2 1226,165.3 1232,167.1 1237,170.1 1243,170.6 1248,172.0 1254,172.0 1259,172.8 1265,173.2 1270,173.4 1276,174.2 1281,174.3 1287,174.9 1292,174.8 1298,174.1 1303,174.8 1309,175.1 1314,175.3" fill="none" stroke="#ba55d3" stroke-width="1.1" stroke-linejoin="bevel"/><polyline points="500,169.7 506,169.0 511,168.9 517,169.8 522,168.9 528,169.2 533,168.4 539,169.1 544,168.7 550,168.7 555,168.5 561,167.8 566,167.2 572,167.4 577,167.3 583,166.9 588,167.5 594,167.3 599,166.7 605,167.4 610,166.3 616,165.9 621,165.9 627,167.3 632,165.6 638,166.8 643,166.9 649,165.9 654,166.3 660,166.5 665,165.6 671,165.6 676,165.5 682,165.5 687,165.2 693,164.7 698,164.8 704,164.7 709,164.4 715,165.0 720,164.6 726,165.6 731,165.6 737,164.7 742,164.1 748,165.0 753,163.4 759,164.7 764,164.2 770,164.2 775,163.0 781,164.7 786,164.4 792,163.5 797,164.0 803,163.8 808,164.0 814,161.9 819,162.7 825,162.2 830,162.7 836,160.8 841,162.5 847,160.8 852,162.0 858,160.6 863,160.9 869,159.0 874,160.0 880,158.8 885,160.1 891,158.8 896,156.0 902,156.9 907,157.2 913,156.5 918,156.2 924,155.7 929,156.2 935,156.4 940,155.9 946,156.6 951,158.1 957,157.8 962,158.4 968,159.1 973,159.3 979,160.7 984,162.0 990,161.0 995,163.5 1001,163.6 1006,163.8 1012,164.3 1017,165.2 1023,164.3 1028,165.9 1034,165.9 1039,166.3 1045,167.6 1050,167.0 1056,167.5 1061,166.6 1067,166.1 1072,165.7 1078,165.1 1083,166.3 1089,164.9 1094,163.4 1100,162.8 1105,159.8 1111,158.9 1116,155.4 1122,155.0 1127,150.8 1133,146.4 1138,142.2 1144,139.9 1149,134.7 1155,131.9 1160,130.9 1166,127.2 1171,127.0 1177,128.8 1182,125.1 1188,126.9 1193,129.0 1199,135.2 1204,136.0 1210,143.2 1215,145.4 1221,150.1 1226,153.2 1232,157.1 1237,159.8 1243,162.8 1248,164.4 1254,166.6 1259,168.9 1265,170.0 1270,170.7 1276,171.2 1281,171.5 1287,171.8 1292,171.7 1298,171.6 1303,172.8 1309,172.9 1314,172.8" fill="none" stroke="#6a5acd" stroke-width="1.1" stroke-linejoin="bevel"/><line x1="497" y1="175.5" x2="1319" y2="175.5" stroke="#008b8b" stroke-width="2" shape-rendering="crispEdges" /><line x1="510" y1="154" x2="677" y2="154" stroke="#00ff00" stroke-width="2.5" shape-rendering="crispEdges" /><line x1="693" y1="153" x2="851" y2="153" stroke="#00ff00" stroke-width="2.5" shape-rendering="crispEdges" /><line x1="872" y1="152.5" x2="1010" y2="152.5" stroke="#00ff00" stroke-width="2.5" shape-rendering="crispEdges" /><line x1="1123" y1="152" x2="1231" y2="152" stroke="#00ff00" stroke-width="2.5" shape-rendering="crispEdges" /><line x1="495.5" y1="111" x2="495.5" y2="179" stroke="#ff0000" stroke-width="3" stroke-dasharray="7 2" shape-rendering="crispEdges" /><line x1="593" y1="111" x2="593" y2="182" stroke="#0000ff" stroke-width="2" stroke-dasharray="6 2" shape-rendering="crispEdges" /><line x1="772" y1="111" x2="772" y2="182" stroke="#0000ff" stroke-width="2" stroke-dasharray="6 2" shape-rendering="crispEdges" /><line x1="941" y1="111" x2="941" y2="182" stroke="#0000ff" stroke-width="2" stroke-dasharray="6 2" shape-rendering="crispEdges" /><line x1="1177" y1="111" x2="1177" y2="182" stroke="#ff00ff" stroke-width="2" stroke-dasharray="6 2" shape-rendering="crispEdges" /><line x1="1304.5" y1="111" x2="1304.5" y2="179" stroke="#ff0000" stroke-width="3" stroke-dasharray="7 2" shape-rendering="crispEdges" /></svg>
<div class="t" style="left:498px;top:115px;height:20px;line-height:20px;font-family:'Liberation Mono',monospace;font-size:14px;font-weight:bold;letter-spacing:1.49px;color:#ff0000">Fit start</div>
<div class="t" style="left:596px;top:115px;height:20px;line-height:20px;font-family:'Liberation Mono',monospace;font-size:14px;font-weight:bold;letter-spacing:1.40px;color:#0000ff">1</div>
<div class="t" style="left:775px;top:115px;height:20px;line-height:20px;font-family:'Liberation Mono',monospace;font-size:14px;font-weight:bold;letter-spacing:1.40px;color:#0000ff">2</div>
<div class="t" style="left:944px;top:115px;height:20px;line-height:20px;font-family:'Liberation Mono',monospace;font-size:14px;font-weight:bold;letter-spacing:1.40px;color:#0000ff">3</div>
<div class="t" style="left:1180px;top:115px;height:20px;line-height:20px;font-family:'Liberation Mono',monospace;font-size:14px;font-weight:bold;letter-spacing:1.40px;color:#ff00ff">4</div>
<div class="t" style="left:1229px;top:115px;height:20px;line-height:20px;font-family:'Liberation Mono',monospace;font-size:14px;font-weight:bold;letter-spacing:1.60px;color:#ff0000">Fit end</div>
<svg style="position:absolute;left:415px;top:105px" width="70" height="85" viewBox="415 105 70 85"><line x1="480.5" y1="115" x2="480.5" y2="180" stroke="#000" stroke-width="1" shape-rendering="crispEdges" /><line x1="476" y1="178.5" x2="480" y2="178.5" stroke="#000" stroke-width="1" shape-rendering="crispEdges" /><line x1="472" y1="175.5" x2="480" y2="175.5" stroke="#000" stroke-width="1" shape-rendering="crispEdges" /><line x1="476" y1="172.5" x2="480" y2="172.5" stroke="#000" stroke-width="1" shape-rendering="crispEdges" /><line x1="476" y1="169.5" x2="480" y2="169.5" stroke="#000" stroke-width="1" shape-rendering="crispEdges" /><line x1="476" y1="167.5" x2="480" y2="167.5" stroke="#000" stroke-width="1" shape-rendering="crispEdges" /><line x1="476" y1="164.5" x2="480" y2="164.5" stroke="#000" stroke-width="1" shape-rendering="crispEdges" /><line x1="472" y1="161.5" x2="480" y2="161.5" stroke="#000" stroke-width="1" shape-rendering="crispEdges" /><line x1="476" y1="158.5" x2="480" y2="158.5" stroke="#000" stroke-width="1" shape-rendering="crispEdges" /><line x1="476" y1="155.5" x2="480" y2="155.5" stroke="#000" stroke-width="1" shape-rendering="crispEdges" /><line x1="476" y1="152.5" x2="480" y2="152.5" stroke="#000" stroke-width="1" shape-rendering="crispEdges" /><line x1="476" y1="150.5" x2="480" y2="150.5" stroke="#000" stroke-width="1" shape-rendering="crispEdges" /><line x1="472" y1="147.5" x2="480" y2="147.5" stroke="#000" stroke-width="1" shape-rendering="crispEdges" /><line x1="476" y1="144.5" x2="480" y2="144.5" stroke="#000" stroke-width="1" shape-rendering="crispEdges" /><line x1="476" y1="141.5" x2="480" y2="141.5" stroke="#000" stroke-width="1" shape-rendering="crispEdges" /><line x1="476" y1="138.5" x2="480" y2="138.5" stroke="#000" stroke-width="1" shape-rendering="crispEdges" /><line x1="476" y1="135.5" x2="480" y2="135.5" stroke="#000" stroke-width="1" shape-rendering="crispEdges" /><line x1="472" y1="133.5" x2="480" y2="133.5" stroke="#000" stroke-width="1" shape-rendering="crispEdges" /><line x1="476" y1="130.5" x2="480" y2="130.5" stroke="#000" stroke-width="1" shape-rendering="crispEdges" /><line x1="476" y1="127.5" x2="480" y2="127.5" stroke="#000" stroke-width="1" shape-rendering="crispEdges" /><line x1="476" y1="124.5" x2="480" y2="124.5" stroke="#000" stroke-width="1" shape-rendering="crispEdges" /><line x1="476" y1="121.5" x2="480" y2="121.5" stroke="#000" stroke-width="1" shape-rendering="crispEdges" /><line x1="472" y1="119.5" x2="480" y2="119.5" stroke="#000" stroke-width="1" shape-rendering="crispEdges" /><line x1="476" y1="116.5" x2="480" y2="116.5" stroke="#000" stroke-width="1" shape-rendering="crispEdges" /></svg>
<div class="t" style="left:443.1px;top:110.2px;height:18px;line-height:18px;font-size:12px;letter-spacing:0.961px;color:#000;">200</div>
<div class="t" style="left:443.1px;top:124.5px;height:18px;line-height:18px;font-size:12px;letter-spacing:0.961px;color:#000;">150</div>
<div class="t" style="left:443.1px;top:138.4px;height:18px;line-height:18px;font-size:12px;letter-spacing:0.961px;color:#000;">100</div>
<div class="t" style="left:450.7px;top:152.3px;height:18px;line-height:18px;font-size:12px;letter-spacing:0.961px;color:#000;">50</div>
<div class="t" style="left:458.4px;top:166.5px;height:18px;line-height:18px;font-size:12px;letter-spacing:0.961px;color:#000;">0</div>
<div class="t" style="left:403.8px;top:139.8px;width:59.3px;height:14.4px;line-height:14.4px;font-size:12px;letter-spacing:0.83px;font-weight:bold;transform:rotate(-90deg);transform-origin:28.2px 7.2px;text-align:left">I(t) [a.u.]</div>
<div style="left:483px;top:205px;width:838px;height:70px;background:#fff;border-top:2px solid #a4a4a4;border-left:2px solid #a4a4a4;box-sizing:border-box"></div>
<div style="left:485px;top:207px;width:834px;height:66px;background:#000"></div>
<svg style="position:absolute;left:485px;top:207px" width="834" height="66" viewBox="485 207 834 66"><line x1="485" y1="268.5" x2="1319" y2="268.5" stroke="#fff" stroke-width="1" stroke-dasharray="1 2" shape-rendering="crispEdges"/><line x1="485" y1="263.5" x2="1319" y2="263.5" stroke="#fff" stroke-width="1" stroke-dasharray="1 2" shape-rendering="crispEdges"/><line x1="485" y1="258.5" x2="1319" y2="258.5" stroke="#fff" stroke-width="1" stroke-dasharray="1 2" shape-rendering="crispEdges"/><line x1="485" y1="254.5" x2="1319" y2="254.5" stroke="#fff" stroke-width="1" stroke-dasharray="1 2" shape-rendering="crispEdges"/><line x1="485" y1="249.5" x2="1319" y2="249.5" stroke="#fff" stroke-width="1" stroke-dasharray="1 2" shape-rendering="crispEdges"/><line x1="485" y1="244.5" x2="1319" y2="244.5" stroke="#fff" stroke-width="1" stroke-dasharray="1 2" shape-rendering="crispEdges"/><line x1="485" y1="240.5" x2="1319" y2="240.5" stroke="#fff" stroke-width="1" stroke-dasharray="1 2" shape-rendering="crispEdges"/><line x1="485" y1="235.5" x2="1319" y2="235.5" stroke="#fff" stroke-width="1" stroke-dasharray="1 2" shape-rendering="crispEdges"/><line x1="485" y1="230.5" x2="1319" y2="230.5" stroke="#fff" stroke-width="1" stroke-dasharray="1 2" shape-rendering="crispEdges"/><line x1="485" y1="225.5" x2="1319" y2="225.5" stroke="#fff" stroke-width="1" stroke-dasharray="1 2" shape-rendering="crispEdges"/><line x1="485" y1="221.5" x2="1319" y2="221.5" stroke="#fff" stroke-width="1" stroke-dasharray="1 2" shape-rendering="crispEdges"/><line x1="485" y1="216.5" x2="1319" y2="216.5" stroke="#fff" stroke-width="1" stroke-dasharray="1 2" shape-rendering="crispEdges"/><line x1="485" y1="211.5" x2="1319" y2="211.5" stroke="#fff" stroke-width="1" stroke-dasharray="1 2" shape-rendering="crispEdges"/><line x1="489.5" y1="207" x2="489.5" y2="273" stroke="#fff" stroke-width="1" stroke-dasharray="1 2" shape-rendering="crispEdges"/><line x1="517.5" y1="207" x2="517.5" y2="273" stroke="#fff" stroke-width="1" stroke-dasharray="1 2" shape-rendering="crispEdges"/><line x1="544.5" y1="207" x2="544.5" y2="273" stroke="#fff" stroke-width="1" stroke-dasharray="1 2" shape-rendering="crispEdges"/><line x1="572.5" y1="207" x2="572.5" y2="273" stroke="#fff" stroke-width="1" stroke-dasharray="1 2" shape-rendering="crispEdges"/><line x1="599.5" y1="207" x2="599.5" y2="273" stroke="#fff" stroke-width="1" stroke-dasharray="1 2" shape-rendering="crispEdges"/><line x1="627.5" y1="207" x2="627.5" y2="273" stroke="#fff" stroke-width="1" stroke-dasharray="1 2" shape-rendering="crispEdges"/><line x1="654.5" y1="207" x2="654.5" y2="273" stroke="#fff" stroke-width="1" stroke-dasharray="1 2" shape-rendering="crispEdges"/><line x1="682.5" y1="207" x2="682.5" y2="273" stroke="#fff" stroke-width="1" stroke-dasharray="1 2" shape-rendering="crispEdges"/><line x1="709.5" y1="207" x2="709.5" y2="273" stroke="#fff" stroke-width="1" stroke-dasharray="1 2" shape-rendering="crispEdges"/><line x1="737.5" y1="207" x2="737.5" y2="273" stroke="#fff" stroke-width="1" stroke-dasharray="1 2" shape-rendering="crispEdges"/><line x1="764.5" y1="207" x2="764.5" y2="273" stroke="#fff" stroke-width="1" stroke-dasharray="1 2" shape-rendering="crispEdges"/><line x1="792.5" y1="207" x2="792.5" y2="273" stroke="#fff" stroke-width="1" stroke-dasharray="1 2" shape-rendering="crispEdges"/><line x1="819.5" y1="207" x2="819.5" y2="273" stroke="#fff" stroke-width="1" stroke-dasharray="1 2" shape-rendering="crispEdges"/><line x1="847.5" y1="207" x2="847.5" y2="273" stroke="#fff" stroke-width="1" stroke-dasharray="1 2" shape-rendering="crispEdges"/><line x1="874.5" y1="207" x2="874.5" y2="273" stroke="#fff" stroke-width="1" stroke-dasharray="1 2" shape-rendering="crispEdges"/><line x1="902.5" y1="207" x2="902.5" y2="273" stroke="#fff" stroke-width="1" stroke-dasharray="1 2" shape-rendering="crispEdges"/><line x1="929.5" y1="207" x2="929.5" y2="273" stroke="#fff" stroke-width="1" stroke-dasharray="1 2" shape-rendering="crispEdges"/><line x1="957.5" y1="207" x2="957.5" y2="273" stroke="#fff" stroke-width="1" stroke-dasharray="1 2" shape-rendering="crispEdges"/><line x1="984.5" y1="207" x2="984.5" y2="273" stroke="#fff" stroke-width="1" stroke-dasharray="1 2" shape-rendering="crispEdges"/><line x1="1012.5" y1="207" x2="1012.5" y2="273" stroke="#fff" stroke-width="1" stroke-dasharray="1 2" shape-rendering="crispEdges"/><line x1="1039.5" y1="207" x2="1039.5" y2="273" stroke="#fff" stroke-width="1" stroke-dasharray="1 2" shape-rendering="crispEdges"/><line x1="1067.5" y1="207" x2="1067.5" y2="273" stroke="#fff" stroke-width="1" stroke-dasharray="1 2" shape-rendering="crispEdges"/><line x1="1094.5" y1="207" x2="1094.5" y2="273" stroke="#fff" stroke-width="1" stroke-dasharray="1 2" shape-rendering="crispEdges"/><line x1="1122.5" y1="207" x2="1122.5" y2="273" stroke="#fff" stroke-width="1" stroke-dasharray="1 2" shape-rendering="crispEdges"/><line x1="1149.5" y1="207" x2="1149.5" y2="273" stroke="#fff" stroke-width="1" stroke-dasharray="1 2" shape-rendering="crispEdges"/><line x1="1177.5" y1="207" x2="1177.5" y2="273" stroke="#fff" stroke-width="1" stroke-dasharray="1 2" shape-rendering="crispEdges"/><line x1="1204.5" y1="207" x2="1204.5" y2="273" stroke="#fff" stroke-width="1" stroke-dasharray="1 2" shape-rendering="crispEdges"/><line x1="1232.5" y1="207" x2="1232.5" y2="273" stroke="#fff" stroke-width="1" stroke-dasharray="1 2" shape-rendering="crispEdges"/><line x1="1259.5" y1="207" x2="1259.5" y2="273" stroke="#fff" stroke-width="1" stroke-dasharray="1 2" shape-rendering="crispEdges"/><line x1="1287.5" y1="207" x2="1287.5" y2="273" stroke="#fff" stroke-width="1" stroke-dasharray="1 2" shape-rendering="crispEdges"/><rect x="495" y="226" width="2" height="26" fill="#008b8b"/><rect x="495" y="230" width="2" height="3" fill="#ffd700"/><rect x="495" y="233" width="2" height="2" fill="#9400d3"/><rect x="495" y="238" width="2" height="3" fill="#d8bfd8"/><rect x="495" y="241" width="2" height="3" fill="#4169e1"/><rect x="495" y="244" width="2" height="6" fill="#e0ffff"/><rect x="495" y="250" width="2" height="3" fill="#ff0000"/><rect x="500" y="228" width="2" height="22" fill="#008b8b"/><rect x="500" y="228" width="2" height="5" fill="#ff0000"/><rect x="500" y="232" width="2" height="6" fill="#00ff00"/><rect x="500" y="243" width="2" height="3" fill="#66cdaa"/><rect x="500" y="246" width="2" height="3" fill="#bc8f8f"/><rect x="500" y="249" width="2" height="1" fill="#228b22"/><rect x="506" y="226" width="2" height="24" fill="#008b8b"/><rect x="506" y="226" width="2" height="2" fill="#00ced1"/><rect x="506" y="231" width="2" height="2" fill="#ff69b4"/><rect x="506" y="233" width="2" height="6" fill="#e0ffff"/><rect x="506" y="242" width="2" height="4" fill="#ff7f50"/><rect x="506" y="246" width="2" height="4" fill="#d8bfd8"/><rect x="506" y="250" width="2" height="0" fill="#00ff00"/><rect x="511" y="230" width="2" height="26" fill="#008b8b"/><rect x="511" y="230" width="2" height="2" fill="#1e90ff"/><rect x="511" y="232" width="2" height="4" fill="#fa8072"/><rect x="511" y="237" width="2" height="5" fill="#8b008b"/><rect x="511" y="241" width="2" height="5" fill="#d8bfd8"/><rect x="511" y="246" width="2" height="2" fill="#d2691e"/><rect x="511" y="248" width="2" height="5" fill="#40e0d0"/><rect x="511" y="253" width="2" height="3" fill="#808080"/><rect x="517" y="228" width="2" height="24" fill="#008b8b"/><rect x="517" y="228" width="2" height="4" fill="#00ced1"/><rect x="517" y="236" width="2" height="6" fill="#2f4f4f"/><rect x="517" y="242" width="2" height="5" fill="#808080"/><rect x="517" y="247" width="2" height="4" fill="#ffe4c4"/><rect x="517" y="251" width="2" height="1" fill="#b0c4de"/><rect x="522" y="232" width="2" height="21" fill="#008b8b"/><rect x="522" y="232" width="2" height="6" fill="#ffd700"/><rect x="522" y="238" width="2" height="5" fill="#ffd700"/><rect x="522" y="246" width="2" height="6" fill="#ff7f50"/><rect x="522" y="252" width="2" height="1" fill="#2e8b57"/><rect x="528" y="226" width="2" height="24" fill="#008b8b"/><rect x="528" y="226" width="2" height="6" fill="#ff8c00"/><rect x="528" y="232" width="2" height="5" fill="#d8bfd8"/><rect x="528" y="237" width="2" height="3" fill="#87ceeb"/><rect x="528" y="240" width="2" height="4" fill="#6a5acd"/><rect x="533" y="230" width="2" height="25" fill="#008b8b"/><rect x="533" y="230" width="2" height="4" fill="#ffb6c1"/><rect x="533" y="239" width="2" height="3" fill="#dc143c"/><rect x="533" y="242" width="2" height="4" fill="#32cd32"/><rect x="533" y="246" width="2" height="3" fill="#ff8c00"/><rect x="533" y="250" width="2" height="3" fill="#87ceeb"/><rect x="533" y="253" width="2" height="2" fill="#e6e6fa"/><rect x="539" y="229" width="2" height="21" fill="#008b8b"/><rect x="539" y="229" width="2" height="4" fill="#2f4f4f"/><rect x="539" y="233" width="2" height="4" fill="#5f9ea0"/><rect x="539" y="237" width="2" height="4" fill="#daa520"/><rect x="539" y="241" width="2" height="4" fill="#00ffff"/><rect x="539" y="245" width="2" height="4" fill="#ffe4c4"/><rect x="539" y="249" width="2" height="0" fill="#ff00ff"/><rect x="544" y="226" width="2" height="30" fill="#008b8b"/><rect x="544" y="226" width="2" height="3" fill="#00ff00"/><rect x="544" y="234" width="2" height="4" fill="#1e90ff"/><rect x="544" y="238" width="2" height="3" fill="#00fa9a"/><rect x="544" y="241" width="2" height="5" fill="#66cdaa"/><rect x="544" y="251" width="2" height="3" fill="#dc143c"/><rect x="550" y="228" width="2" height="22" fill="#008b8b"/><rect x="550" y="228" width="2" height="3" fill="#90ee90"/><rect x="550" y="231" width="2" height="4" fill="#ff00ff"/><rect x="550" y="235" width="2" height="5" fill="#ffe4c4"/><rect x="550" y="240" width="2" height="4" fill="#fffacd"/><rect x="550" y="244" width="2" height="4" fill="#fff8dc"/><rect x="550" y="248" width="2" height="3" fill="#66cdaa"/><rect x="555" y="227" width="2" height="22" fill="#008b8b"/><rect x="555" y="229" width="2" height="3" fill="#8b008b"/><rect x="555" y="244" width="2" height="2" fill="#6495ed"/><rect x="555" y="247" width="2" height="2" fill="#00ff00"/><rect x="561" y="226" width="2" height="28" fill="#008b8b"/><rect x="561" y="226" width="2" height="6" fill="#ff69b4"/><rect x="561" y="232" width="2" height="4" fill="#228b22"/><rect x="561" y="236" width="2" height="3" fill="#0000ff"/><rect x="561" y="243" width="2" height="3" fill="#4682b4"/><rect x="561" y="246" width="2" height="3" fill="#778899"/><rect x="561" y="249" width="2" height="4" fill="#ee82ee"/><rect x="561" y="253" width="2" height="2" fill="#808000"/><rect x="566" y="231" width="2" height="23" fill="#008b8b"/><rect x="566" y="231" width="2" height="3" fill="#cd5c5c"/><rect x="566" y="235" width="2" height="2" fill="#f0e68c"/><rect x="566" y="237" width="2" height="5" fill="#ffff00"/><rect x="566" y="242" width="2" height="6" fill="#00ff00"/><rect x="566" y="247" width="2" height="5" fill="#ff8c00"/><rect x="566" y="252" width="2" height="2" fill="#ee82ee"/><rect x="572" y="228" width="2" height="26" fill="#008b8b"/><rect x="572" y="228" width="2" height="3" fill="#ffb6c1"/><rect x="572" y="231" width="2" height="5" fill="#32cd32"/><rect x="572" y="235" width="2" height="6" fill="#ffe4c4"/><rect x="572" y="245" width="2" height="3" fill="#8b008b"/><rect x="572" y="249" width="2" height="4" fill="#7b68ee"/><rect x="577" y="228" width="2" height="24" fill="#008b8b"/><rect x="577" y="228" width="2" height="5" fill="#8b4513"/><rect x="577" y="237" width="2" height="3" fill="#4169e1"/><rect x="577" y="240" width="2" height="4" fill="#d2691e"/><rect x="577" y="244" width="2" height="5" fill="#d8bfd8"/><rect x="577" y="249" width="2" height="3" fill="#ff1493"/><rect x="583" y="231" width="2" height="24" fill="#008b8b"/><rect x="583" y="231" width="2" height="3" fill="#9400d3"/><rect x="583" y="235" width="2" height="3" fill="#c71585"/><rect x="583" y="237" width="2" height="3" fill="#40e0d0"/><rect x="583" y="241" width="2" height="3" fill="#778899"/><rect x="583" y="244" width="2" height="6" fill="#ba55d3"/><rect x="583" y="250" width="2" height="4" fill="#ffffff"/><rect x="583" y="254" width="2" height="1" fill="#dc143c"/><rect x="588" y="226" width="2" height="23" fill="#008b8b"/><rect x="588" y="226" width="2" height="5" fill="#8b4513"/><rect x="588" y="230" width="2" height="3" fill="#778899"/><rect x="588" y="233" width="2" height="6" fill="#e0ffff"/><rect x="588" y="239" width="2" height="6" fill="#ff8c00"/><rect x="588" y="245" width="2" height="3" fill="#f08080"/><rect x="594" y="231" width="2" height="18" fill="#008b8b"/><rect x="594" y="231" width="2" height="5" fill="#fff8dc"/><rect x="594" y="237" width="2" height="2" fill="#e6e6fa"/><rect x="594" y="239" width="2" height="4" fill="#8b4513"/><rect x="594" y="243" width="2" height="3" fill="#e6e6fa"/><rect x="599" y="231" width="2" height="22" fill="#008b8b"/><rect x="599" y="231" width="2" height="5" fill="#8fbc8f"/><rect x="599" y="235" width="2" height="3" fill="#7fff00"/><rect x="599" y="238" width="2" height="4" fill="#90ee90"/><rect x="599" y="242" width="2" height="3" fill="#2e8b57"/><rect x="599" y="247" width="2" height="4" fill="#00fa9a"/><rect x="599" y="251" width="2" height="1" fill="#808080"/><rect x="605" y="231" width="2" height="22" fill="#008b8b"/><rect x="605" y="231" width="2" height="5" fill="#66cdaa"/><rect x="605" y="236" width="2" height="6" fill="#4682b4"/><rect x="605" y="241" width="2" height="6" fill="#dc143c"/><rect x="605" y="247" width="2" height="4" fill="#b0c4de"/><rect x="605" y="251" width="2" height="2" fill="#20b2aa"/><rect x="610" y="232" width="2" height="16" fill="#008b8b"/><rect x="610" y="232" width="2" height="5" fill="#008b8b"/><rect x="610" y="237" width="2" height="4" fill="#87ceeb"/><rect x="610" y="241" width="2" height="6" fill="#2f4f4f"/><rect x="610" y="246" width="2" height="2" fill="#4682b4"/><rect x="616" y="226" width="2" height="25" fill="#008b8b"/><rect x="616" y="226" width="2" height="3" fill="#ffd700"/><rect x="616" y="229" width="2" height="5" fill="#4682b4"/><rect x="616" y="233" width="2" height="2" fill="#ff00ff"/><rect x="616" y="238" width="2" height="4" fill="#9400d3"/><rect x="616" y="242" width="2" height="2" fill="#ff7f50"/><rect x="616" y="244" width="2" height="5" fill="#9400d3"/><rect x="616" y="249" width="2" height="2" fill="#cd5c5c"/><rect x="621" y="230" width="2" height="32" fill="#008b8b"/><rect x="621" y="230" width="2" height="2" fill="#fffacd"/><rect x="621" y="238" width="2" height="3" fill="#ff00ff"/><rect x="621" y="241" width="2" height="3" fill="#adff2f"/><rect x="621" y="243" width="2" height="5" fill="#1e90ff"/><rect x="621" y="248" width="2" height="4" fill="#4169e1"/><rect x="621" y="252" width="2" height="5" fill="#40e0d0"/><rect x="621" y="257" width="2" height="5" fill="#228b22"/><rect x="627" y="231" width="2" height="21" fill="#008b8b"/><rect x="627" y="237" width="2" height="5" fill="#d8bfd8"/><rect x="627" y="242" width="2" height="6" fill="#fa8072"/><rect x="627" y="252" width="2" height="1" fill="#00ffff"/><rect x="632" y="224" width="2" height="26" fill="#008b8b"/><rect x="632" y="228" width="2" height="3" fill="#afeeee"/><rect x="632" y="235" width="2" height="5" fill="#dda0dd"/><rect x="632" y="239" width="2" height="2" fill="#b22222"/><rect x="632" y="245" width="2" height="2" fill="#00ff00"/><rect x="638" y="228" width="2" height="21" fill="#008b8b"/><rect x="638" y="228" width="2" height="3" fill="#fffacd"/><rect x="638" y="231" width="2" height="5" fill="#778899"/><rect x="638" y="242" width="2" height="3" fill="#ffff00"/><rect x="638" y="245" width="2" height="3" fill="#ff7f50"/><rect x="643" y="229" width="2" height="23" fill="#008b8b"/><rect x="643" y="229" width="2" height="3" fill="#c71585"/><rect x="643" y="232" width="2" height="3" fill="#d8bfd8"/><rect x="643" y="235" width="2" height="6" fill="#9400d3"/><rect x="643" y="240" width="2" height="4" fill="#1e90ff"/><rect x="643" y="244" width="2" height="4" fill="#7b68ee"/><rect x="643" y="248" width="2" height="3" fill="#6495ed"/><rect x="643" y="250" width="2" height="2" fill="#adff2f"/><rect x="649" y="229" width="2" height="24" fill="#008b8b"/><rect x="649" y="229" width="2" height="4" fill="#00ced1"/><rect x="649" y="233" width="2" height="6" fill="#9400d3"/><rect x="649" y="239" width="2" height="5" fill="#ffffff"/><rect x="649" y="244" width="2" height="2" fill="#deb887"/><rect x="649" y="246" width="2" height="4" fill="#e0ffff"/><rect x="649" y="250" width="2" height="4" fill="#fa8072"/><rect x="654" y="222" width="2" height="31" fill="#008b8b"/><rect x="654" y="227" width="2" height="2" fill="#8b008b"/><rect x="654" y="231" width="2" height="3" fill="#98fb98"/><rect x="654" y="234" width="2" height="5" fill="#20b2aa"/><rect x="654" y="243" width="2" height="4" fill="#ff0000"/><rect x="654" y="246" width="2" height="5" fill="#40e0d0"/><rect x="654" y="252" width="2" height="1" fill="#32cd32"/><rect x="660" y="232" width="2" height="17" fill="#008b8b"/><rect x="660" y="232" width="2" height="4" fill="#00ff00"/><rect x="660" y="235" width="2" height="6" fill="#cd5c5c"/><rect x="660" y="241" width="2" height="3" fill="#8fbc8f"/><rect x="660" y="245" width="2" height="4" fill="#32cd32"/><rect x="665" y="229" width="2" height="23" fill="#008b8b"/><rect x="665" y="232" width="2" height="5" fill="#00ced1"/><rect x="665" y="237" width="2" height="6" fill="#483d8b"/><rect x="665" y="242" width="2" height="6" fill="#20b2aa"/><rect x="671" y="225" width="2" height="25" fill="#008b8b"/><rect x="671" y="225" width="2" height="5" fill="#ffe4c4"/><rect x="671" y="229" width="2" height="3" fill="#d2691e"/><rect x="671" y="232" width="2" height="3" fill="#ffff00"/><rect x="671" y="235" width="2" height="5" fill="#778899"/><rect x="671" y="242" width="2" height="6" fill="#5f9ea0"/><rect x="676" y="229" width="2" height="22" fill="#008b8b"/><rect x="676" y="229" width="2" height="6" fill="#66cdaa"/><rect x="676" y="239" width="2" height="3" fill="#7b68ee"/><rect x="676" y="242" width="2" height="6" fill="#4169e1"/><rect x="676" y="248" width="2" height="3" fill="#8b4513"/><rect x="682" y="224" width="2" height="28" fill="#008b8b"/><rect x="682" y="224" width="2" height="3" fill="#9acd32"/><rect x="682" y="231" width="2" height="5" fill="#d2691e"/><rect x="682" y="236" width="2" height="3" fill="#ff0000"/><rect x="682" y="239" width="2" height="5" fill="#ff0000"/><rect x="682" y="244" width="2" height="6" fill="#bc8f8f"/><rect x="687" y="226" width="2" height="23" fill="#008b8b"/><rect x="687" y="226" width="2" height="4" fill="#808000"/><rect x="687" y="230" width="2" height="4" fill="#ff00ff"/><rect x="687" y="234" width="2" height="4" fill="#fa8072"/><rect x="687" y="238" width="2" height="4" fill="#7fff00"/><rect x="687" y="243" width="2" height="4" fill="#87ceeb"/><rect x="687" y="246" width="2" height="3" fill="#8b4513"/><rect x="693" y="227" width="2" height="22" fill="#008b8b"/><rect x="693" y="227" width="2" height="4" fill="#a9a9a9"/><rect x="693" y="230" width="2" height="5" fill="#daa520"/><rect x="693" y="245" width="2" height="4" fill="#ffe4c4"/><rect x="698" y="225" width="2" height="27" fill="#008b8b"/><rect x="698" y="225" width="2" height="4" fill="#ffe4c4"/><rect x="698" y="229" width="2" height="3" fill="#ff00ff"/><rect x="698" y="232" width="2" height="5" fill="#fff8dc"/><rect x="698" y="237" width="2" height="3" fill="#6a5acd"/><rect x="698" y="239" width="2" height="3" fill="#483d8b"/><rect x="698" y="243" width="2" height="6" fill="#0000ff"/><rect x="698" y="248" width="2" height="4" fill="#32cd32"/><rect x="704" y="229" width="2" height="23" fill="#008b8b"/><rect x="704" y="229" width="2" height="6" fill="#daa520"/><rect x="704" y="234" width="2" height="5" fill="#87ceeb"/><rect x="704" y="239" width="2" height="4" fill="#ffd700"/><rect x="704" y="243" width="2" height="6" fill="#4682b4"/><rect x="704" y="249" width="2" height="3" fill="#6495ed"/><rect x="709" y="231" width="2" height="23" fill="#008b8b"/><rect x="709" y="231" width="2" height="4" fill="#ffe4c4"/><rect x="709" y="236" width="2" height="3" fill="#2f4f4f"/><rect x="709" y="238" width="2" height="2" fill="#808000"/><rect x="709" y="241" width="2" height="5" fill="#5f9ea0"/><rect x="709" y="249" width="2" height="3" fill="#8b4513"/><rect x="715" y="230" width="2" height="24" fill="#008b8b"/><rect x="715" y="230" width="2" height="5" fill="#2e8b57"/><rect x="715" y="236" width="2" height="3" fill="#fa8072"/><rect x="715" y="239" width="2" height="6" fill="#90ee90"/><rect x="715" y="245" width="2" height="5" fill="#0000ff"/><rect x="715" y="250" width="2" height="3" fill="#8b008b"/><rect x="715" y="253" width="2" height="1" fill="#ff0000"/><rect x="720" y="226" width="2" height="32" fill="#008b8b"/><rect x="720" y="226" width="2" height="4" fill="#ff1493"/><rect x="720" y="230" width="2" height="6" fill="#40e0d0"/><rect x="720" y="236" width="2" height="2" fill="#ffb6c1"/><rect x="720" y="238" width="2" height="5" fill="#98fb98"/><rect x="720" y="243" width="2" height="4" fill="#ff6347"/><rect x="720" y="247" width="2" height="3" fill="#b22222"/><rect x="720" y="250" width="2" height="4" fill="#778899"/><rect x="720" y="255" width="2" height="3" fill="#4169e1"/><rect x="720" y="257" width="2" height="0" fill="#afeeee"/><rect x="726" y="226" width="2" height="31" fill="#008b8b"/><rect x="726" y="226" width="2" height="4" fill="#00ffff"/><rect x="726" y="230" width="2" height="4" fill="#008b8b"/><rect x="726" y="235" width="2" height="6" fill="#0000ff"/><rect x="726" y="240" width="2" height="5" fill="#c71585"/><rect x="726" y="245" width="2" height="3" fill="#778899"/><rect x="726" y="248" width="2" height="3" fill="#00ced1"/><rect x="726" y="251" width="2" height="4" fill="#1e90ff"/><rect x="726" y="255" width="2" height="2" fill="#00bfff"/><rect x="731" y="230" width="2" height="21" fill="#008b8b"/><rect x="731" y="230" width="2" height="3" fill="#6495ed"/><rect x="731" y="233" width="2" height="3" fill="#f0e68c"/><rect x="731" y="236" width="2" height="4" fill="#4169e1"/><rect x="731" y="240" width="2" height="3" fill="#90ee90"/><rect x="731" y="243" width="2" height="5" fill="#ffdab9"/><rect x="731" y="247" width="2" height="3" fill="#dda0dd"/><rect x="737" y="228" width="2" height="25" fill="#008b8b"/><rect x="737" y="228" width="2" height="6" fill="#0000ff"/><rect x="737" y="241" width="2" height="4" fill="#fff8dc"/><rect x="737" y="244" width="2" height="4" fill="#c71585"/><rect x="742" y="226" width="2" height="22" fill="#008b8b"/><rect x="742" y="237" width="2" height="3" fill="#afeeee"/><rect x="742" y="240" width="2" height="6" fill="#2f4f4f"/><rect x="742" y="245" width="2" height="3" fill="#98fb98"/><rect x="748" y="220" width="2" height="35" fill="#008b8b"/><rect x="748" y="220" width="2" height="4" fill="#7fff00"/><rect x="748" y="229" width="2" height="6" fill="#ff7f50"/><rect x="748" y="235" width="2" height="5" fill="#b22222"/><rect x="748" y="239" width="2" height="5" fill="#00ff00"/><rect x="748" y="244" width="2" height="3" fill="#98fb98"/><rect x="748" y="247" width="2" height="3" fill="#ff6347"/><rect x="753" y="226" width="2" height="30" fill="#008b8b"/><rect x="753" y="226" width="2" height="2" fill="#00ced1"/><rect x="753" y="229" width="2" height="6" fill="#808000"/><rect x="753" y="238" width="2" height="3" fill="#b0c4de"/><rect x="753" y="241" width="2" height="4" fill="#ff69b4"/><rect x="753" y="245" width="2" height="6" fill="#32cd32"/><rect x="753" y="251" width="2" height="6" fill="#808000"/><rect x="759" y="229" width="2" height="30" fill="#008b8b"/><rect x="759" y="229" width="2" height="3" fill="#ba55d3"/><rect x="759" y="232" width="2" height="6" fill="#2f4f4f"/><rect x="759" y="238" width="2" height="3" fill="#a9a9a9"/><rect x="759" y="245" width="2" height="3" fill="#7b68ee"/><rect x="759" y="249" width="2" height="4" fill="#87ceeb"/><rect x="759" y="252" width="2" height="5" fill="#ffff00"/><rect x="764" y="227" width="2" height="21" fill="#008b8b"/><rect x="764" y="227" width="2" height="5" fill="#ba55d3"/><rect x="764" y="232" width="2" height="3" fill="#5f9ea0"/><rect x="764" y="241" width="2" height="4" fill="#bc8f8f"/><rect x="764" y="245" width="2" height="3" fill="#008b8b"/><rect x="770" y="228" width="2" height="26" fill="#008b8b"/><rect x="770" y="228" width="2" height="6" fill="#808080"/><rect x="770" y="239" width="2" height="5" fill="#fa8072"/><rect x="770" y="244" width="2" height="2" fill="#ffd700"/><rect x="770" y="246" width="2" height="5" fill="#d8bfd8"/><rect x="770" y="251" width="2" height="3" fill="#00bfff"/><rect x="775" y="230" width="2" height="25" fill="#008b8b"/><rect x="775" y="230" width="2" height="5" fill="#bc8f8f"/><rect x="775" y="235" width="2" height="3" fill="#20b2aa"/><rect x="775" y="238" width="2" height="3" fill="#0000ff"/><rect x="775" y="241" width="2" height="6" fill="#f5deb3"/><rect x="775" y="246" width="2" height="5" fill="#4169e1"/><rect x="775" y="251" width="2" height="3" fill="#fa8072"/><rect x="781" y="227" width="2" height="27" fill="#008b8b"/><rect x="781" y="227" width="2" height="4" fill="#808080"/><rect x="781" y="231" width="2" height="5" fill="#00ffff"/><rect x="781" y="240" width="2" height="4" fill="#6495ed"/><rect x="781" y="244" width="2" height="6" fill="#00bfff"/><rect x="781" y="250" width="2" height="3" fill="#c71585"/><rect x="781" y="253" width="2" height="2" fill="#6495ed"/><rect x="786" y="226" width="2" height="29" fill="#008b8b"/><rect x="786" y="226" width="2" height="5" fill="#90ee90"/><rect x="786" y="235" width="2" height="4" fill="#4169e1"/><rect x="786" y="239" width="2" height="2" fill="#ff6347"/><rect x="786" y="241" width="2" height="3" fill="#4169e1"/><rect x="786" y="249" width="2" height="5" fill="#0000ff"/><rect x="786" y="255" width="2" height="0" fill="#9acd32"/><rect x="792" y="226" width="2" height="32" fill="#008b8b"/><rect x="792" y="226" width="2" height="5" fill="#ff6347"/><rect x="792" y="232" width="2" height="4" fill="#2f4f4f"/><rect x="792" y="235" width="2" height="3" fill="#00ced1"/><rect x="792" y="239" width="2" height="3" fill="#d2691e"/><rect x="792" y="242" width="2" height="3" fill="#ffdab9"/><rect x="792" y="255" width="2" height="3" fill="#d8bfd8"/><rect x="797" y="225" width="2" height="26" fill="#008b8b"/><rect x="797" y="225" width="2" height="4" fill="#afeeee"/><rect x="797" y="230" width="2" height="4" fill="#7fff00"/><rect x="797" y="234" width="2" height="2" fill="#e6e6fa"/><rect x="797" y="236" width="2" height="5" fill="#deb887"/><rect x="797" y="241" width="2" height="3" fill="#fffacd"/><rect x="797" y="244" width="2" height="6" fill="#32cd32"/><rect x="803" y="230" width="2" height="21" fill="#008b8b"/><rect x="803" y="230" width="2" height="4" fill="#dda0dd"/><rect x="803" y="238" width="2" height="2" fill="#00ced1"/><rect x="803" y="244" width="2" height="2" fill="#6495ed"/><rect x="803" y="246" width="2" height="5" fill="#a9a9a9"/><rect x="808" y="227" width="2" height="25" fill="#008b8b"/><rect x="808" y="227" width="2" height="5" fill="#ffd700"/><rect x="808" y="242" width="2" height="2" fill="#f0e68c"/><rect x="808" y="245" width="2" height="5" fill="#dda0dd"/><rect x="808" y="250" width="2" height="2" fill="#d2691e"/><rect x="814" y="225" width="2" height="25" fill="#008b8b"/><rect x="814" y="225" width="2" height="4" fill="#483d8b"/><rect x="814" y="229" width="2" height="3" fill="#dc143c"/><rect x="814" y="232" width="2" height="4" fill="#bc8f8f"/><rect x="814" y="242" width="2" height="2" fill="#32cd32"/><rect x="814" y="248" width="2" height="3" fill="#ff6347"/><rect x="819" y="231" width="2" height="21" fill="#008b8b"/><rect x="819" y="239" width="2" height="5" fill="#98fb98"/><rect x="819" y="244" width="2" height="4" fill="#deb887"/><rect x="819" y="247" width="2" height="3" fill="#ff1493"/><rect x="819" y="250" width="2" height="1" fill="#fff8dc"/><rect x="825" y="226" width="2" height="28" fill="#008b8b"/><rect x="825" y="226" width="2" height="5" fill="#e6e6fa"/><rect x="825" y="231" width="2" height="5" fill="#ff00ff"/><rect x="825" y="239" width="2" height="4" fill="#c71585"/><rect x="825" y="243" width="2" height="6" fill="#90ee90"/><rect x="825" y="249" width="2" height="5" fill="#f08080"/><rect x="825" y="254" width="2" height="1" fill="#f08080"/><rect x="830" y="226" width="2" height="25" fill="#008b8b"/><rect x="830" y="226" width="2" height="2" fill="#66cdaa"/><rect x="830" y="231" width="2" height="3" fill="#9400d3"/><rect x="830" y="234" width="2" height="4" fill="#ff69b4"/><rect x="830" y="238" width="2" height="2" fill="#90ee90"/><rect x="830" y="240" width="2" height="6" fill="#2f4f4f"/><rect x="830" y="248" width="2" height="2" fill="#9400d3"/><rect x="836" y="231" width="2" height="20" fill="#008b8b"/><rect x="836" y="231" width="2" height="3" fill="#cd5c5c"/><rect x="836" y="234" width="2" height="4" fill="#00ced1"/><rect x="836" y="238" width="2" height="5" fill="#483d8b"/><rect x="836" y="243" width="2" height="3" fill="#bc8f8f"/><rect x="836" y="246" width="2" height="3" fill="#fa8072"/><rect x="836" y="249" width="2" height="3" fill="#cd5c5c"/><rect x="841" y="225" width="2" height="31" fill="#008b8b"/><rect x="841" y="230" width="2" height="5" fill="#ffb6c1"/><rect x="841" y="236" width="2" height="5" fill="#ffe4c4"/><rect x="841" y="244" width="2" height="2" fill="#98fb98"/><rect x="841" y="247" width="2" height="4" fill="#d8bfd8"/><rect x="841" y="250" width="2" height="3" fill="#008b8b"/><rect x="841" y="253" width="2" height="3" fill="#8fbc8f"/><rect x="847" y="225" width="2" height="26" fill="#008b8b"/><rect x="847" y="225" width="2" height="2" fill="#a9a9a9"/><rect x="847" y="227" width="2" height="5" fill="#8fbc8f"/><rect x="847" y="238" width="2" height="4" fill="#808080"/><rect x="847" y="251" width="2" height="1" fill="#00fa9a"/><rect x="852" y="222" width="2" height="37" fill="#008b8b"/><rect x="852" y="222" width="2" height="5" fill="#d2691e"/><rect x="852" y="228" width="2" height="2" fill="#0000ff"/><rect x="852" y="230" width="2" height="3" fill="#7fff00"/><rect x="852" y="233" width="2" height="5" fill="#ff8c00"/><rect x="852" y="243" width="2" height="6" fill="#fa8072"/><rect x="852" y="249" width="2" height="6" fill="#f5deb3"/><rect x="852" y="255" width="2" height="5" fill="#afeeee"/><rect x="858" y="229" width="2" height="20" fill="#008b8b"/><rect x="858" y="229" width="2" height="3" fill="#a9a9a9"/><rect x="858" y="236" width="2" height="5" fill="#ffffff"/><rect x="858" y="241" width="2" height="2" fill="#228b22"/><rect x="858" y="248" width="2" height="1" fill="#ffdab9"/><rect x="863" y="221" width="2" height="28" fill="#008b8b"/><rect x="863" y="221" width="2" height="4" fill="#adff2f"/><rect x="863" y="225" width="2" height="5" fill="#8b4513"/><rect x="863" y="230" width="2" height="6" fill="#228b22"/><rect x="863" y="238" width="2" height="3" fill="#ff00ff"/><rect x="863" y="241" width="2" height="5" fill="#cd5c5c"/><rect x="863" y="246" width="2" height="3" fill="#778899"/><rect x="869" y="231" width="2" height="20" fill="#008b8b"/><rect x="869" y="235" width="2" height="5" fill="#ffd700"/><rect x="869" y="241" width="2" height="5" fill="#bc8f8f"/><rect x="869" y="245" width="2" height="4" fill="#2e8b57"/><rect x="869" y="249" width="2" height="3" fill="#32cd32"/><rect x="874" y="226" width="2" height="24" fill="#008b8b"/><rect x="874" y="226" width="2" height="4" fill="#40e0d0"/><rect x="874" y="230" width="2" height="3" fill="#fff8dc"/><rect x="874" y="242" width="2" height="6" fill="#90ee90"/><rect x="874" y="248" width="2" height="2" fill="#ff69b4"/><rect x="880" y="228" width="2" height="26" fill="#008b8b"/><rect x="880" y="228" width="2" height="4" fill="#fa8072"/><rect x="880" y="232" width="2" height="5" fill="#7fff00"/><rect x="880" y="236" width="2" height="2" fill="#808080"/><rect x="880" y="238" width="2" height="4" fill="#191970"/><rect x="880" y="242" width="2" height="5" fill="#98fb98"/><rect x="880" y="247" width="2" height="4" fill="#cd5c5c"/><rect x="880" y="251" width="2" height="3" fill="#adff2f"/><rect x="885" y="226" width="2" height="25" fill="#008b8b"/><rect x="885" y="226" width="2" height="4" fill="#ffffff"/><rect x="885" y="230" width="2" height="3" fill="#191970"/><rect x="885" y="233" width="2" height="4" fill="#a9a9a9"/><rect x="885" y="237" width="2" height="2" fill="#808080"/><rect x="885" y="242" width="2" height="3" fill="#ff00ff"/><rect x="885" y="246" width="2" height="5" fill="#fffacd"/><rect x="891" y="222" width="2" height="27" fill="#008b8b"/><rect x="891" y="222" width="2" height="4" fill="#9acd32"/><rect x="891" y="226" width="2" height="4" fill="#87ceeb"/><rect x="891" y="230" width="2" height="3" fill="#b22222"/><rect x="891" y="241" width="2" height="6" fill="#fff8dc"/><rect x="891" y="247" width="2" height="3" fill="#ff69b4"/><rect x="896" y="222" width="2" height="33" fill="#008b8b"/><rect x="896" y="222" width="2" height="3" fill="#adff2f"/><rect x="896" y="226" width="2" height="4" fill="#00ff00"/><rect x="896" y="230" width="2" height="3" fill="#2f4f4f"/><rect x="896" y="233" width="2" height="5" fill="#ff69b4"/><rect x="896" y="238" width="2" height="2" fill="#808000"/><rect x="896" y="240" width="2" height="6" fill="#ff8c00"/><rect x="896" y="246" width="2" height="4" fill="#d8bfd8"/><rect x="896" y="250" width="2" height="4" fill="#fff8dc"/><rect x="896" y="254" width="2" height="1" fill="#ff6347"/><rect x="902" y="226" width="2" height="23" fill="#008b8b"/><rect x="902" y="226" width="2" height="5" fill="#ffe4c4"/><rect x="902" y="230" width="2" height="3" fill="#ba55d3"/><rect x="902" y="233" width="2" height="2" fill="#4169e1"/><rect x="902" y="235" width="2" height="6" fill="#b0c4de"/><rect x="902" y="241" width="2" height="3" fill="#ffb6c1"/><rect x="902" y="244" width="2" height="3" fill="#ff1493"/><rect x="902" y="247" width="2" height="2" fill="#6495ed"/><rect x="907" y="228" width="2" height="26" fill="#008b8b"/><rect x="907" y="232" width="2" height="6" fill="#ee82ee"/><rect x="907" y="238" width="2" height="5" fill="#daa520"/><rect x="907" y="243" width="2" height="4" fill="#20b2aa"/><rect x="907" y="250" width="2" height="4" fill="#9400d3"/><rect x="907" y="254" width="2" height="0" fill="#ff69b4"/><rect x="913" y="225" width="2" height="27" fill="#008b8b"/><rect x="913" y="225" width="2" height="3" fill="#adff2f"/><rect x="913" y="229" width="2" height="3" fill="#00bfff"/><rect x="913" y="231" width="2" height="3" fill="#ffffff"/><rect x="913" y="234" width="2" height="3" fill="#8b4513"/><rect x="913" y="238" width="2" height="5" fill="#afeeee"/><rect x="913" y="243" width="2" height="3" fill="#fa8072"/><rect x="913" y="252" width="2" height="1" fill="#8fbc8f"/><rect x="918" y="231" width="2" height="24" fill="#008b8b"/><rect x="918" y="231" width="2" height="4" fill="#00ff00"/><rect x="918" y="235" width="2" height="2" fill="#2e8b57"/><rect x="918" y="237" width="2" height="2" fill="#8fbc8f"/><rect x="918" y="239" width="2" height="3" fill="#87ceeb"/><rect x="918" y="249" width="2" height="3" fill="#ff0000"/><rect x="918" y="251" width="2" height="3" fill="#e6e6fa"/><rect x="924" y="225" width="2" height="28" fill="#008b8b"/><rect x="924" y="225" width="2" height="4" fill="#ff8c00"/><rect x="924" y="229" width="2" height="3" fill="#87ceeb"/><rect x="924" y="234" width="2" height="6" fill="#ff7f50"/><rect x="924" y="246" width="2" height="4" fill="#808080"/><rect x="924" y="250" width="2" height="3" fill="#a9a9a9"/><rect x="929" y="227" width="2" height="24" fill="#008b8b"/><rect x="929" y="227" width="2" height="5" fill="#191970"/><rect x="929" y="232" width="2" height="4" fill="#2e8b57"/><rect x="929" y="236" width="2" height="3" fill="#deb887"/><rect x="929" y="239" width="2" height="5" fill="#00fa9a"/><rect x="929" y="244" width="2" height="4" fill="#b22222"/><rect x="929" y="248" width="2" height="3" fill="#ff6347"/><rect x="935" y="231" width="2" height="18" fill="#008b8b"/><rect x="935" y="234" width="2" height="3" fill="#483d8b"/><rect x="935" y="237" width="2" height="3" fill="#778899"/><rect x="935" y="240" width="2" height="6" fill="#90ee90"/><rect x="935" y="246" width="2" height="4" fill="#a9a9a9"/><rect x="940" y="231" width="2" height="23" fill="#008b8b"/><rect x="940" y="231" width="2" height="3" fill="#f08080"/><rect x="940" y="238" width="2" height="4" fill="#40e0d0"/><rect x="940" y="242" width="2" height="4" fill="#b22222"/><rect x="940" y="246" width="2" height="4" fill="#ff6347"/><rect x="940" y="250" width="2" height="2" fill="#a9a9a9"/><rect x="940" y="252" width="2" height="2" fill="#e6e6fa"/><rect x="946" y="230" width="2" height="19" fill="#008b8b"/><rect x="946" y="230" width="2" height="4" fill="#00ff00"/><rect x="946" y="234" width="2" height="4" fill="#2e8b57"/><rect x="946" y="242" width="2" height="6" fill="#f08080"/><rect x="946" y="247" width="2" height="2" fill="#8b4513"/><rect x="951" y="225" width="2" height="23" fill="#008b8b"/><rect x="951" y="235" width="2" height="4" fill="#b22222"/><rect x="951" y="239" width="2" height="3" fill="#00ced1"/><rect x="951" y="242" width="2" height="3" fill="#daa520"/><rect x="951" y="248" width="2" height="1" fill="#20b2aa"/><rect x="957" y="228" width="2" height="26" fill="#008b8b"/><rect x="957" y="228" width="2" height="4" fill="#7b68ee"/><rect x="957" y="232" width="2" height="5" fill="#e0ffff"/><rect x="957" y="240" width="2" height="3" fill="#e6e6fa"/><rect x="957" y="242" width="2" height="4" fill="#8b4513"/><rect x="957" y="246" width="2" height="5" fill="#ffb6c1"/><rect x="957" y="251" width="2" height="3" fill="#c71585"/><rect x="962" y="226" width="2" height="29" fill="#008b8b"/><rect x="962" y="226" width="2" height="4" fill="#00ffff"/><rect x="962" y="230" width="2" height="4" fill="#bc8f8f"/><rect x="962" y="234" width="2" height="3" fill="#8fbc8f"/><rect x="962" y="237" width="2" height="5" fill="#d8bfd8"/><rect x="962" y="242" width="2" height="6" fill="#dc143c"/><rect x="962" y="248" width="2" height="5" fill="#ff6347"/><rect x="962" y="252" width="2" height="2" fill="#ba55d3"/><rect x="968" y="226" width="2" height="28" fill="#008b8b"/><rect x="968" y="229" width="2" height="5" fill="#ff6347"/><rect x="968" y="234" width="2" height="3" fill="#2f4f4f"/><rect x="968" y="236" width="2" height="3" fill="#ff00ff"/><rect x="968" y="239" width="2" height="4" fill="#f0e68c"/><rect x="968" y="243" width="2" height="4" fill="#ff7f50"/><rect x="968" y="247" width="2" height="6" fill="#ff1493"/><rect x="973" y="232" width="2" height="21" fill="#008b8b"/><rect x="973" y="232" width="2" height="6" fill="#afeeee"/><rect x="973" y="237" width="2" height="5" fill="#fff8dc"/><rect x="973" y="247" width="2" height="6" fill="#fa8072"/><rect x="979" y="227" width="2" height="27" fill="#008b8b"/><rect x="979" y="237" width="2" height="5" fill="#00ced1"/><rect x="979" y="241" width="2" height="3" fill="#8b4513"/><rect x="979" y="244" width="2" height="4" fill="#dc143c"/><rect x="979" y="249" width="2" height="4" fill="#fa8072"/><rect x="979" y="252" width="2" height="1" fill="#00ffff"/><rect x="984" y="226" width="2" height="27" fill="#008b8b"/><rect x="984" y="228" width="2" height="5" fill="#deb887"/><rect x="984" y="233" width="2" height="6" fill="#ba55d3"/><rect x="984" y="239" width="2" height="2" fill="#afeeee"/><rect x="984" y="245" width="2" height="3" fill="#008b8b"/><rect x="984" y="249" width="2" height="4" fill="#7b68ee"/><rect x="990" y="226" width="2" height="34" fill="#008b8b"/><rect x="990" y="226" width="2" height="3" fill="#0000ff"/><rect x="990" y="230" width="2" height="4" fill="#dc143c"/><rect x="990" y="237" width="2" height="5" fill="#d8bfd8"/><rect x="990" y="242" width="2" height="4" fill="#ffd700"/><rect x="990" y="247" width="2" height="3" fill="#ffdab9"/><rect x="990" y="249" width="2" height="6" fill="#90ee90"/><rect x="990" y="255" width="2" height="5" fill="#b22222"/><rect x="995" y="226" width="2" height="23" fill="#008b8b"/><rect x="995" y="226" width="2" height="4" fill="#98fb98"/><rect x="995" y="231" width="2" height="3" fill="#9acd32"/><rect x="995" y="238" width="2" height="5" fill="#ff0000"/><rect x="995" y="243" width="2" height="4" fill="#dc143c"/><rect x="995" y="247" width="2" height="3" fill="#40e0d0"/><rect x="1001" y="230" width="2" height="21" fill="#008b8b"/><rect x="1001" y="230" width="2" height="4" fill="#40e0d0"/><rect x="1001" y="234" width="2" height="3" fill="#9acd32"/><rect x="1001" y="236" width="2" height="5" fill="#87ceeb"/><rect x="1001" y="243" width="2" height="4" fill="#00ffff"/><rect x="1001" y="247" width="2" height="4" fill="#7fff00"/><rect x="1006" y="228" width="2" height="24" fill="#008b8b"/><rect x="1006" y="228" width="2" height="3" fill="#008b8b"/><rect x="1006" y="236" width="2" height="5" fill="#c71585"/><rect x="1006" y="241" width="2" height="5" fill="#8fbc8f"/><rect x="1006" y="246" width="2" height="5" fill="#ff1493"/><rect x="1012" y="229" width="2" height="25" fill="#008b8b"/><rect x="1012" y="229" width="2" height="3" fill="#f0e68c"/><rect x="1012" y="233" width="2" height="2" fill="#1e90ff"/><rect x="1012" y="235" width="2" height="3" fill="#40e0d0"/><rect x="1012" y="238" width="2" height="4" fill="#d2691e"/><rect x="1012" y="242" width="2" height="6" fill="#afeeee"/><rect x="1012" y="248" width="2" height="4" fill="#ffe4c4"/><rect x="1012" y="253" width="2" height="2" fill="#0000ff"/><rect x="1017" y="230" width="2" height="24" fill="#008b8b"/><rect x="1017" y="230" width="2" height="4" fill="#b22222"/><rect x="1017" y="234" width="2" height="2" fill="#cd5c5c"/><rect x="1017" y="236" width="2" height="5" fill="#ff1493"/><rect x="1017" y="245" width="2" height="4" fill="#fffacd"/><rect x="1017" y="249" width="2" height="3" fill="#daa520"/><rect x="1017" y="252" width="2" height="2" fill="#90ee90"/><rect x="1023" y="229" width="2" height="21" fill="#008b8b"/><rect x="1023" y="234" width="2" height="5" fill="#6a5acd"/><rect x="1023" y="240" width="2" height="3" fill="#fffacd"/><rect x="1023" y="242" width="2" height="3" fill="#9acd32"/><rect x="1023" y="245" width="2" height="3" fill="#4169e1"/><rect x="1023" y="248" width="2" height="2" fill="#00bfff"/><rect x="1028" y="228" width="2" height="27" fill="#008b8b"/><rect x="1028" y="228" width="2" height="5" fill="#ff6347"/><rect x="1028" y="233" width="2" height="3" fill="#f5deb3"/><rect x="1028" y="236" width="2" height="5" fill="#2e8b57"/><rect x="1028" y="241" width="2" height="3" fill="#6a5acd"/><rect x="1028" y="244" width="2" height="5" fill="#b0c4de"/><rect x="1028" y="249" width="2" height="5" fill="#a9a9a9"/><rect x="1028" y="254" width="2" height="0" fill="#dda0dd"/><rect x="1034" y="228" width="2" height="23" fill="#008b8b"/><rect x="1034" y="228" width="2" height="4" fill="#ffff00"/><rect x="1034" y="237" width="2" height="5" fill="#dda0dd"/><rect x="1034" y="248" width="2" height="3" fill="#7fff00"/><rect x="1039" y="227" width="2" height="24" fill="#008b8b"/><rect x="1039" y="227" width="2" height="4" fill="#bc8f8f"/><rect x="1039" y="231" width="2" height="3" fill="#ff6347"/><rect x="1039" y="234" width="2" height="5" fill="#2e8b57"/><rect x="1039" y="239" width="2" height="3" fill="#fff8dc"/><rect x="1039" y="242" width="2" height="3" fill="#008b8b"/><rect x="1039" y="245" width="2" height="3" fill="#fff8dc"/><rect x="1039" y="248" width="2" height="3" fill="#ffd700"/><rect x="1045" y="229" width="2" height="24" fill="#008b8b"/><rect x="1045" y="229" width="2" height="4" fill="#ff8c00"/><rect x="1045" y="233" width="2" height="5" fill="#008b8b"/><rect x="1045" y="238" width="2" height="2" fill="#f0e68c"/><rect x="1045" y="242" width="2" height="6" fill="#00fa9a"/><rect x="1045" y="248" width="2" height="4" fill="#b0c4de"/><rect x="1045" y="252" width="2" height="1" fill="#ffd700"/><rect x="1050" y="227" width="2" height="31" fill="#008b8b"/><rect x="1050" y="227" width="2" height="3" fill="#dc143c"/><rect x="1050" y="231" width="2" height="4" fill="#fffacd"/><rect x="1050" y="235" width="2" height="3" fill="#6495ed"/><rect x="1050" y="238" width="2" height="3" fill="#ffffff"/><rect x="1050" y="241" width="2" height="3" fill="#d2691e"/><rect x="1050" y="244" width="2" height="4" fill="#ee82ee"/><rect x="1050" y="248" width="2" height="4" fill="#ba55d3"/><rect x="1050" y="251" width="2" height="4" fill="#8b4513"/><rect x="1050" y="255" width="2" height="4" fill="#9400d3"/><rect x="1056" y="222" width="2" height="32" fill="#008b8b"/><rect x="1056" y="222" width="2" height="4" fill="#87ceeb"/><rect x="1056" y="226" width="2" height="5" fill="#e6e6fa"/><rect x="1056" y="231" width="2" height="5" fill="#778899"/><rect x="1056" y="235" width="2" height="3" fill="#ee82ee"/><rect x="1056" y="238" width="2" height="5" fill="#c71585"/><rect x="1056" y="244" width="2" height="4" fill="#e0ffff"/><rect x="1056" y="248" width="2" height="6" fill="#9400d3"/><rect x="1056" y="254" width="2" height="1" fill="#191970"/><rect x="1061" y="226" width="2" height="24" fill="#008b8b"/><rect x="1061" y="226" width="2" height="2" fill="#40e0d0"/><rect x="1061" y="228" width="2" height="4" fill="#ffe4c4"/><rect x="1061" y="232" width="2" height="6" fill="#ff6347"/><rect x="1061" y="238" width="2" height="4" fill="#483d8b"/><rect x="1067" y="231" width="2" height="22" fill="#008b8b"/><rect x="1067" y="231" width="2" height="5" fill="#ffe4c4"/><rect x="1067" y="236" width="2" height="4" fill="#ff69b4"/><rect x="1067" y="240" width="2" height="4" fill="#32cd32"/><rect x="1067" y="249" width="2" height="3" fill="#fff8dc"/><rect x="1072" y="226" width="2" height="27" fill="#008b8b"/><rect x="1072" y="229" width="2" height="4" fill="#32cd32"/><rect x="1072" y="232" width="2" height="3" fill="#4682b4"/><rect x="1072" y="236" width="2" height="2" fill="#dda0dd"/><rect x="1072" y="238" width="2" height="6" fill="#90ee90"/><rect x="1072" y="244" width="2" height="3" fill="#ffdab9"/><rect x="1072" y="247" width="2" height="3" fill="#ba55d3"/><rect x="1072" y="249" width="2" height="2" fill="#00fa9a"/><rect x="1072" y="251" width="2" height="2" fill="#adff2f"/><rect x="1078" y="226" width="2" height="28" fill="#008b8b"/><rect x="1078" y="226" width="2" height="2" fill="#b0c4de"/><rect x="1078" y="228" width="2" height="5" fill="#f08080"/><rect x="1078" y="233" width="2" height="5" fill="#adff2f"/><rect x="1078" y="238" width="2" height="6" fill="#daa520"/><rect x="1078" y="244" width="2" height="6" fill="#afeeee"/><rect x="1078" y="250" width="2" height="3" fill="#9acd32"/><rect x="1083" y="232" width="2" height="21" fill="#008b8b"/><rect x="1083" y="232" width="2" height="2" fill="#afeeee"/><rect x="1083" y="237" width="2" height="5" fill="#008b8b"/><rect x="1083" y="242" width="2" height="6" fill="#87ceeb"/><rect x="1083" y="248" width="2" height="3" fill="#ff1493"/><rect x="1089" y="226" width="2" height="25" fill="#008b8b"/><rect x="1089" y="226" width="2" height="4" fill="#f5deb3"/><rect x="1089" y="236" width="2" height="6" fill="#ffff00"/><rect x="1089" y="242" width="2" height="2" fill="#00ff00"/><rect x="1089" y="244" width="2" height="3" fill="#8fbc8f"/><rect x="1089" y="247" width="2" height="3" fill="#00fa9a"/><rect x="1094" y="230" width="2" height="22" fill="#008b8b"/><rect x="1094" y="230" width="2" height="4" fill="#2f4f4f"/><rect x="1094" y="234" width="2" height="3" fill="#00fa9a"/><rect x="1094" y="237" width="2" height="4" fill="#fff8dc"/><rect x="1094" y="241" width="2" height="5" fill="#6a5acd"/><rect x="1094" y="246" width="2" height="2" fill="#e6e6fa"/><rect x="1094" y="252" width="2" height="1" fill="#ffdab9"/><rect x="1100" y="231" width="2" height="23" fill="#008b8b"/><rect x="1100" y="231" width="2" height="4" fill="#ff6347"/><rect x="1100" y="239" width="2" height="6" fill="#ffff00"/><rect x="1100" y="245" width="2" height="3" fill="#fffacd"/><rect x="1100" y="249" width="2" height="2" fill="#daa520"/><rect x="1105" y="228" width="2" height="25" fill="#008b8b"/><rect x="1105" y="228" width="2" height="3" fill="#c71585"/><rect x="1105" y="231" width="2" height="3" fill="#00ced1"/><rect x="1105" y="237" width="2" height="4" fill="#bc8f8f"/><rect x="1105" y="241" width="2" height="2" fill="#483d8b"/><rect x="1105" y="246" width="2" height="4" fill="#778899"/><rect x="1105" y="249" width="2" height="3" fill="#66cdaa"/><rect x="1105" y="253" width="2" height="1" fill="#1e90ff"/><rect x="1111" y="231" width="2" height="18" fill="#008b8b"/><rect x="1111" y="231" width="2" height="6" fill="#fffacd"/><rect x="1111" y="237" width="2" height="5" fill="#f5deb3"/><rect x="1111" y="242" width="2" height="3" fill="#8fbc8f"/><rect x="1111" y="246" width="2" height="3" fill="#f5deb3"/><rect x="1111" y="249" width="2" height="0" fill="#66cdaa"/><rect x="1116" y="230" width="2" height="22" fill="#008b8b"/><rect x="1116" y="230" width="2" height="3" fill="#f08080"/><rect x="1116" y="233" width="2" height="5" fill="#483d8b"/><rect x="1116" y="239" width="2" height="2" fill="#e0ffff"/><rect x="1116" y="241" width="2" height="3" fill="#808080"/><rect x="1116" y="244" width="2" height="6" fill="#8b4513"/><rect x="1116" y="250" width="2" height="2" fill="#f0e68c"/><rect x="1122" y="227" width="2" height="23" fill="#008b8b"/><rect x="1122" y="227" width="2" height="5" fill="#ff8c00"/><rect x="1122" y="232" width="2" height="6" fill="#c71585"/><rect x="1122" y="237" width="2" height="2" fill="#191970"/><rect x="1122" y="240" width="2" height="5" fill="#f5deb3"/><rect x="1127" y="226" width="2" height="28" fill="#008b8b"/><rect x="1127" y="226" width="2" height="6" fill="#ba55d3"/><rect x="1127" y="232" width="2" height="4" fill="#ffdab9"/><rect x="1127" y="240" width="2" height="5" fill="#ffff00"/><rect x="1127" y="245" width="2" height="3" fill="#a9a9a9"/><rect x="1127" y="252" width="2" height="2" fill="#9acd32"/><rect x="1133" y="226" width="2" height="24" fill="#008b8b"/><rect x="1133" y="226" width="2" height="6" fill="#6a5acd"/><rect x="1133" y="232" width="2" height="2" fill="#40e0d0"/><rect x="1133" y="239" width="2" height="3" fill="#ff69b4"/><rect x="1133" y="242" width="2" height="5" fill="#32cd32"/><rect x="1133" y="249" width="2" height="1" fill="#ff8c00"/><rect x="1138" y="227" width="2" height="26" fill="#008b8b"/><rect x="1138" y="227" width="2" height="3" fill="#dc143c"/><rect x="1138" y="232" width="2" height="6" fill="#00ced1"/><rect x="1138" y="238" width="2" height="3" fill="#afeeee"/><rect x="1138" y="241" width="2" height="5" fill="#ffd700"/><rect x="1138" y="246" width="2" height="6" fill="#ff6347"/><rect x="1144" y="231" width="2" height="19" fill="#008b8b"/><rect x="1144" y="231" width="2" height="3" fill="#f08080"/><rect x="1144" y="234" width="2" height="4" fill="#cd5c5c"/><rect x="1144" y="238" width="2" height="5" fill="#808080"/><rect x="1144" y="248" width="2" height="2" fill="#f0e68c"/><rect x="1149" y="231" width="2" height="19" fill="#008b8b"/><rect x="1149" y="234" width="2" height="3" fill="#ffd700"/><rect x="1149" y="237" width="2" height="6" fill="#ff0000"/><rect x="1149" y="246" width="2" height="3" fill="#bc8f8f"/><rect x="1149" y="249" width="2" height="1" fill="#2e8b57"/><rect x="1155" y="230" width="2" height="23" fill="#008b8b"/><rect x="1155" y="234" width="2" height="5" fill="#00ffff"/><rect x="1155" y="242" width="2" height="5" fill="#808000"/><rect x="1155" y="248" width="2" height="3" fill="#dda0dd"/><rect x="1155" y="251" width="2" height="3" fill="#9400d3"/><rect x="1160" y="226" width="2" height="33" fill="#008b8b"/><rect x="1160" y="226" width="2" height="6" fill="#daa520"/><rect x="1160" y="239" width="2" height="4" fill="#ff0000"/><rect x="1160" y="243" width="2" height="3" fill="#483d8b"/><rect x="1160" y="252" width="2" height="5" fill="#fffacd"/><rect x="1160" y="259" width="2" height="0" fill="#ff0000"/><rect x="1166" y="225" width="2" height="23" fill="#008b8b"/><rect x="1166" y="225" width="2" height="4" fill="#6495ed"/><rect x="1166" y="230" width="2" height="5" fill="#fa8072"/><rect x="1166" y="235" width="2" height="3" fill="#ffff00"/><rect x="1166" y="238" width="2" height="5" fill="#00ffff"/><rect x="1166" y="242" width="2" height="4" fill="#2e8b57"/><rect x="1166" y="246" width="2" height="2" fill="#fa8072"/><rect x="1171" y="228" width="2" height="21" fill="#008b8b"/><rect x="1171" y="233" width="2" height="4" fill="#e0ffff"/><rect x="1171" y="244" width="2" height="4" fill="#0000ff"/><rect x="1171" y="249" width="2" height="0" fill="#9400d3"/><rect x="1177" y="230" width="2" height="22" fill="#008b8b"/><rect x="1177" y="241" width="2" height="6" fill="#00ced1"/><rect x="1177" y="247" width="2" height="4" fill="#0000ff"/><rect x="1177" y="251" width="2" height="1" fill="#4169e1"/><rect x="1182" y="230" width="2" height="25" fill="#008b8b"/><rect x="1182" y="230" width="2" height="3" fill="#ff8c00"/><rect x="1182" y="233" width="2" height="4" fill="#deb887"/><rect x="1182" y="237" width="2" height="5" fill="#87ceeb"/><rect x="1182" y="242" width="2" height="4" fill="#e0ffff"/><rect x="1182" y="246" width="2" height="2" fill="#a9a9a9"/><rect x="1182" y="249" width="2" height="5" fill="#ba55d3"/><rect x="1182" y="253" width="2" height="1" fill="#daa520"/><rect x="1188" y="221" width="2" height="33" fill="#008b8b"/><rect x="1188" y="221" width="2" height="5" fill="#8b4513"/><rect x="1188" y="226" width="2" height="3" fill="#483d8b"/><rect x="1188" y="239" width="2" height="6" fill="#ff0000"/><rect x="1188" y="245" width="2" height="4" fill="#fffacd"/><rect x="1188" y="249" width="2" height="4" fill="#40e0d0"/><rect x="1193" y="218" width="2" height="32" fill="#008b8b"/><rect x="1193" y="223" width="2" height="4" fill="#191970"/><rect x="1193" y="227" width="2" height="6" fill="#90ee90"/><rect x="1193" y="233" width="2" height="6" fill="#4682b4"/><rect x="1193" y="239" width="2" height="3" fill="#66cdaa"/><rect x="1193" y="242" width="2" height="5" fill="#ffffff"/><rect x="1193" y="247" width="2" height="2" fill="#778899"/><rect x="1193" y="249" width="2" height="2" fill="#ff7f50"/><rect x="1199" y="226" width="2" height="32" fill="#008b8b"/><rect x="1199" y="226" width="2" height="4" fill="#f5deb3"/><rect x="1199" y="230" width="2" height="3" fill="#00bfff"/><rect x="1199" y="233" width="2" height="3" fill="#9400d3"/><rect x="1199" y="236" width="2" height="4" fill="#d2691e"/><rect x="1199" y="240" width="2" height="3" fill="#00ff00"/><rect x="1199" y="243" width="2" height="2" fill="#7b68ee"/><rect x="1199" y="257" width="2" height="1" fill="#40e0d0"/><rect x="1204" y="226" width="2" height="26" fill="#008b8b"/><rect x="1204" y="232" width="2" height="5" fill="#00fa9a"/><rect x="1204" y="237" width="2" height="3" fill="#228b22"/><rect x="1204" y="243" width="2" height="6" fill="#5f9ea0"/><rect x="1204" y="249" width="2" height="2" fill="#90ee90"/><rect x="1204" y="252" width="2" height="1" fill="#ffb6c1"/><rect x="1210" y="229" width="2" height="22" fill="#008b8b"/><rect x="1210" y="229" width="2" height="3" fill="#9400d3"/><rect x="1210" y="232" width="2" height="5" fill="#00fa9a"/><rect x="1210" y="237" width="2" height="4" fill="#483d8b"/><rect x="1210" y="241" width="2" height="6" fill="#40e0d0"/><rect x="1210" y="247" width="2" height="4" fill="#dc143c"/><rect x="1215" y="227" width="2" height="31" fill="#008b8b"/><rect x="1215" y="227" width="2" height="5" fill="#ba55d3"/><rect x="1215" y="232" width="2" height="5" fill="#ff69b4"/><rect x="1215" y="237" width="2" height="2" fill="#e0ffff"/><rect x="1215" y="245" width="2" height="3" fill="#32cd32"/><rect x="1215" y="251" width="2" height="6" fill="#fffacd"/><rect x="1215" y="257" width="2" height="1" fill="#adff2f"/><rect x="1221" y="223" width="2" height="28" fill="#008b8b"/><rect x="1221" y="223" width="2" height="3" fill="#4682b4"/><rect x="1221" y="226" width="2" height="4" fill="#ff00ff"/><rect x="1221" y="230" width="2" height="4" fill="#adff2f"/><rect x="1221" y="234" width="2" height="3" fill="#d8bfd8"/><rect x="1221" y="237" width="2" height="5" fill="#778899"/><rect x="1221" y="242" width="2" height="2" fill="#ffe4c4"/><rect x="1221" y="247" width="2" height="4" fill="#f0e68c"/><rect x="1226" y="230" width="2" height="21" fill="#008b8b"/><rect x="1226" y="230" width="2" height="6" fill="#bc8f8f"/><rect x="1226" y="235" width="2" height="3" fill="#a9a9a9"/><rect x="1226" y="238" width="2" height="3" fill="#a9a9a9"/><rect x="1226" y="242" width="2" height="5" fill="#191970"/><rect x="1226" y="247" width="2" height="4" fill="#8b008b"/><rect x="1232" y="225" width="2" height="27" fill="#008b8b"/><rect x="1232" y="225" width="2" height="2" fill="#cd5c5c"/><rect x="1232" y="239" width="2" height="5" fill="#9400d3"/><rect x="1232" y="244" width="2" height="5" fill="#6a5acd"/><rect x="1232" y="249" width="2" height="3" fill="#ee82ee"/><rect x="1237" y="225" width="2" height="29" fill="#008b8b"/><rect x="1237" y="225" width="2" height="5" fill="#cd5c5c"/><rect x="1237" y="230" width="2" height="5" fill="#ffffff"/><rect x="1237" y="235" width="2" height="2" fill="#9400d3"/><rect x="1237" y="237" width="2" height="5" fill="#9acd32"/><rect x="1237" y="247" width="2" height="5" fill="#ff8c00"/><rect x="1243" y="223" width="2" height="28" fill="#008b8b"/><rect x="1243" y="223" width="2" height="5" fill="#808000"/><rect x="1243" y="232" width="2" height="5" fill="#5f9ea0"/><rect x="1243" y="237" width="2" height="2" fill="#808000"/><rect x="1243" y="239" width="2" height="4" fill="#a9a9a9"/><rect x="1243" y="244" width="2" height="4" fill="#00bfff"/><rect x="1248" y="224" width="2" height="27" fill="#008b8b"/><rect x="1248" y="224" width="2" height="4" fill="#90ee90"/><rect x="1248" y="228" width="2" height="6" fill="#ffd700"/><rect x="1248" y="234" width="2" height="5" fill="#ffffff"/><rect x="1248" y="241" width="2" height="6" fill="#90ee90"/><rect x="1248" y="250" width="2" height="1" fill="#e0ffff"/><rect x="1254" y="222" width="2" height="26" fill="#008b8b"/><rect x="1254" y="222" width="2" height="4" fill="#fff8dc"/><rect x="1254" y="226" width="2" height="4" fill="#ffd700"/><rect x="1254" y="230" width="2" height="4" fill="#fa8072"/><rect x="1254" y="239" width="2" height="3" fill="#d8bfd8"/><rect x="1254" y="241" width="2" height="5" fill="#afeeee"/><rect x="1254" y="246" width="2" height="2" fill="#ff1493"/><rect x="1259" y="227" width="2" height="25" fill="#008b8b"/><rect x="1259" y="227" width="2" height="3" fill="#daa520"/><rect x="1259" y="230" width="2" height="3" fill="#bc8f8f"/><rect x="1259" y="233" width="2" height="3" fill="#2f4f4f"/><rect x="1259" y="241" width="2" height="4" fill="#adff2f"/><rect x="1259" y="245" width="2" height="3" fill="#0000ff"/><rect x="1259" y="249" width="2" height="3" fill="#ffd700"/><rect x="1265" y="222" width="2" height="28" fill="#008b8b"/><rect x="1265" y="222" width="2" height="4" fill="#e6e6fa"/><rect x="1265" y="226" width="2" height="5" fill="#00fa9a"/><rect x="1265" y="230" width="2" height="3" fill="#9acd32"/><rect x="1265" y="238" width="2" height="3" fill="#e6e6fa"/><rect x="1265" y="241" width="2" height="3" fill="#483d8b"/><rect x="1265" y="246" width="2" height="4" fill="#6a5acd"/><rect x="1270" y="221" width="2" height="34" fill="#008b8b"/><rect x="1270" y="221" width="2" height="6" fill="#d2691e"/><rect x="1270" y="227" width="2" height="5" fill="#9acd32"/><rect x="1270" y="232" width="2" height="4" fill="#ffd700"/><rect x="1270" y="239" width="2" height="5" fill="#008b8b"/><rect x="1270" y="247" width="2" height="3" fill="#98fb98"/><rect x="1270" y="250" width="2" height="3" fill="#c71585"/><rect x="1276" y="223" width="2" height="27" fill="#008b8b"/><rect x="1276" y="223" width="2" height="2" fill="#ff8c00"/><rect x="1276" y="226" width="2" height="3" fill="#afeeee"/><rect x="1276" y="228" width="2" height="3" fill="#0000ff"/><rect x="1276" y="231" width="2" height="3" fill="#8b4513"/><rect x="1276" y="234" width="2" height="5" fill="#20b2aa"/><rect x="1276" y="242" width="2" height="3" fill="#ff69b4"/><rect x="1276" y="245" width="2" height="4" fill="#2f4f4f"/><rect x="1281" y="223" width="2" height="27" fill="#008b8b"/><rect x="1281" y="223" width="2" height="2" fill="#dc143c"/><rect x="1281" y="225" width="2" height="6" fill="#2e8b57"/><rect x="1281" y="231" width="2" height="5" fill="#f5deb3"/><rect x="1281" y="236" width="2" height="4" fill="#228b22"/><rect x="1281" y="240" width="2" height="2" fill="#e0ffff"/><rect x="1281" y="242" width="2" height="5" fill="#fff8dc"/><rect x="1281" y="247" width="2" height="3" fill="#e0ffff"/><rect x="1287" y="226" width="2" height="24" fill="#008b8b"/><rect x="1287" y="226" width="2" height="4" fill="#ffd700"/><rect x="1287" y="230" width="2" height="3" fill="#e0ffff"/><rect x="1287" y="233" width="2" height="6" fill="#ffe4c4"/><rect x="1287" y="239" width="2" height="3" fill="#6a5acd"/><rect x="1287" y="241" width="2" height="4" fill="#ee82ee"/><rect x="1287" y="245" width="2" height="5" fill="#daa520"/><rect x="1292" y="224" width="2" height="28" fill="#008b8b"/><rect x="1292" y="224" width="2" height="3" fill="#adff2f"/><rect x="1292" y="226" width="2" height="2" fill="#778899"/><rect x="1292" y="235" width="2" height="2" fill="#90ee90"/><rect x="1292" y="239" width="2" height="6" fill="#deb887"/><rect x="1292" y="245" width="2" height="4" fill="#9400d3"/><rect x="1298" y="229" width="2" height="22" fill="#008b8b"/><rect x="1298" y="229" width="2" height="5" fill="#b22222"/><rect x="1298" y="237" width="2" height="3" fill="#f5deb3"/><rect x="1298" y="240" width="2" height="4" fill="#b22222"/><rect x="1298" y="248" width="2" height="3" fill="#c71585"/><rect x="1303" y="226" width="2" height="26" fill="#008b8b"/><rect x="1303" y="226" width="2" height="5" fill="#483d8b"/><rect x="1303" y="230" width="2" height="4" fill="#7fff00"/><rect x="1303" y="235" width="2" height="5" fill="#adff2f"/><rect x="1303" y="240" width="2" height="5" fill="#7b68ee"/><rect x="1303" y="245" width="2" height="6" fill="#d8bfd8"/><line x1="493" y1="240" x2="1303" y2="240" stroke="#00ff00" stroke-width="2" shape-rendering="crispEdges" /></svg>
<svg style="position:absolute;left:415px;top:200px" width="910" height="90" viewBox="415 200 910 90"><line x1="480.5" y1="210" x2="480.5" y2="270" stroke="#000" stroke-width="1" shape-rendering="crispEdges" /><line x1="472" y1="268.5" x2="480" y2="268.5" stroke="#000" stroke-width="1" shape-rendering="crispEdges" /><line x1="476" y1="263.5" x2="480" y2="263.5" stroke="#000" stroke-width="1" shape-rendering="crispEdges" /><line x1="476" y1="258.5" x2="480" y2="258.5" stroke="#000" stroke-width="1" shape-rendering="crispEdges" /><line x1="472" y1="254.5" x2="480" y2="254.5" stroke="#000" stroke-width="1" shape-rendering="crispEdges" /><line x1="476" y1="249.5" x2="480" y2="249.5" stroke="#000" stroke-width="1" shape-rendering="crispEdges" /><line x1="476" y1="244.5" x2="480" y2="244.5" stroke="#000" stroke-width="1" shape-rendering="crispEdges" /><line x1="472" y1="240.5" x2="480" y2="240.5" stroke="#000" stroke-width="1" shape-rendering="crispEdges" /><line x1="476" y1="235.5" x2="480" y2="235.5" stroke="#000" stroke-width="1" shape-rendering="crispEdges" /><line x1="476" y1="230.5" x2="480" y2="230.5" stroke="#000" stroke-width="1" shape-rendering="crispEdges" /><line x1="472" y1="225.5" x2="480" y2="225.5" stroke="#000" stroke-width="1" shape-rendering="crispEdges" /><line x1="476" y1="221.5" x2="480" y2="221.5" stroke="#000" stroke-width="1" shape-rendering="crispEdges" /><line x1="476" y1="216.5" x2="480" y2="216.5" stroke="#000" stroke-width="1" shape-rendering="crispEdges" /><line x1="472" y1="211.5" x2="480" y2="211.5" stroke="#000" stroke-width="1" shape-rendering="crispEdges" /><line x1="489" y1="277.5" x2="1314" y2="277.5" stroke="#000" stroke-width="1" shape-rendering="crispEdges" /><line x1="489.5" y1="277" x2="489.5" y2="285" stroke="#000" stroke-width="1" shape-rendering="crispEdges" /><line x1="517.5" y1="277" x2="517.5" y2="281" stroke="#000" stroke-width="1" shape-rendering="crispEdges" /><line x1="544.5" y1="277" x2="544.5" y2="281" stroke="#000" stroke-width="1" shape-rendering="crispEdges" /><line x1="572.5" y1="277" x2="572.5" y2="281" stroke="#000" stroke-width="1" shape-rendering="crispEdges" /><line x1="599.5" y1="277" x2="599.5" y2="285" stroke="#000" stroke-width="1" shape-rendering="crispEdges" /><line x1="627.5" y1="277" x2="627.5" y2="281" stroke="#000" stroke-width="1" shape-rendering="crispEdges" /><line x1="654.5" y1="277" x2="654.5" y2="281" stroke="#000" stroke-width="1" shape-rendering="crispEdges" /><line x1="682.5" y1="277" x2="682.5" y2="281" stroke="#000" stroke-width="1" shape-rendering="crispEdges" /><line x1="709.5" y1="277" x2="709.5" y2="285" stroke="#000" stroke-width="1" shape-rendering="crispEdges" /><line x1="737.5" y1="277" x2="737.5" y2="281" stroke="#000" stroke-width="1" shape-rendering="crispEdges" /><line x1="764.5" y1="277" x2="764.5" y2="281" stroke="#000" stroke-width="1" shape-rendering="crispEdges" /><line x1="792.5" y1="277" x2="792.5" y2="281" stroke="#000" stroke-width="1" shape-rendering="crispEdges" /><line x1="819.5" y1="277" x2="819.5" y2="285" stroke="#000" stroke-width="1" shape-rendering="crispEdges" /><line x1="847.5" y1="277" x2="847.5" y2="281" stroke="#000" stroke-width="1" shape-rendering="crispEdges" /><line x1="874.5" y1="277" x2="874.5" y2="281" stroke="#000" stroke-width="1" shape-rendering="crispEdges" /><line x1="902.5" y1="277" x2="902.5" y2="281" stroke="#000" stroke-width="1" shape-rendering="crispEdges" /><line x1="929.5" y1="277" x2="929.5" y2="285" stroke="#000" stroke-width="1" shape-rendering="crispEdges" /><line x1="957.5" y1="277" x2="957.5" y2="281" stroke="#000" stroke-width="1" shape-rendering="crispEdges" /><line x1="984.5" y1="277" x2="984.5" y2="281" stroke="#000" stroke-width="1" shape-rendering="crispEdges" /><line x1="1012.5" y1="277" x2="1012.5" y2="281" stroke="#000" stroke-width="1" shape-rendering="crispEdges" /><line x1="1039.5" y1="277" x2="1039.5" y2="285" stroke="#000" stroke-width="1" shape-rendering="crispEdges" /><line x1="1067.5" y1="277" x2="1067.5" y2="281" stroke="#000" stroke-width="1" shape-rendering="crispEdges" /><line x1="1094.5" y1="277" x2="1094.5" y2="281" stroke="#000" stroke-width="1" shape-rendering="crispEdges" /><line x1="1122.5" y1="277" x2="1122.5" y2="281" stroke="#000" stroke-width="1" shape-rendering="crispEdges" /><line x1="1149.5" y1="277" x2="1149.5" y2="285" stroke="#000" stroke-width="1" shape-rendering="crispEdges" /><line x1="1177.5" y1="277" x2="1177.5" y2="281" stroke="#000" stroke-width="1" shape-rendering="crispEdges" /><line x1="1204.5" y1="277" x2="1204.5" y2="281" stroke="#000" stroke-width="1" shape-rendering="crispEdges" /><line x1="1232.5" y1="277" x2="1232.5" y2="281" stroke="#000" stroke-width="1" shape-rendering="crispEdges" /><line x1="1259.5" y1="277" x2="1259.5" y2="285" stroke="#000" stroke-width="1" shape-rendering="crispEdges" /><line x1="1287.5" y1="277" x2="1287.5" y2="281" stroke="#000" stroke-width="1" shape-rendering="crispEdges" /></svg>
<div class="t" style="left:458.4px;top:202.4px;height:18px;line-height:18px;font-size:12px;letter-spacing:0.961px;color:#000;">6</div>
<div class="t" style="left:458.4px;top:216.6px;height:18px;line-height:18px;font-size:12px;letter-spacing:0.961px;color:#000;">3</div>
<div class="t" style="left:458.4px;top:231.0px;height:18px;line-height:18px;font-size:12px;letter-spacing:0.961px;color:#000;">0</div>
<div class="t" style="left:454.0px;top:245.2px;height:18px;line-height:18px;font-size:12px;letter-spacing:0.647px;color:#000;">-3</div>
<div class="t" style="left:454.0px;top:259.3px;height:18px;line-height:18px;font-size:12px;letter-spacing:0.647px;color:#000;">-6</div>
<div class="t" style="left:403.0px;top:231.8px;width:60.8px;height:14.4px;line-height:14.4px;font-size:12px;letter-spacing:0.79px;font-weight:bold;transform:rotate(-90deg);transform-origin:29.0px 7.2px;text-align:left">elta I(t)/s</div>
<div class="t" style="left:485.6px;top:287.0px;height:18px;line-height:18px;font-size:12px;letter-spacing:0.961px;color:#000;">0</div>
<div class="t" style="left:591.8px;top:287.0px;height:18px;line-height:18px;font-size:12px;letter-spacing:0.961px;color:#000;">20</div>
<div class="t" style="left:701.8px;top:287.0px;height:18px;line-height:18px;font-size:12px;letter-spacing:0.961px;color:#000;">40</div>
<div class="t" style="left:811.8px;top:287.0px;height:18px;line-height:18px;font-size:12px;letter-spacing:0.961px;color:#000;">60</div>
<div class="t" style="left:921.8px;top:287.0px;height:18px;line-height:18px;font-size:12px;letter-spacing:0.961px;color:#000;">80</div>
<div class="t" style="left:1027.9px;top:287.0px;height:18px;line-height:18px;font-size:12px;letter-spacing:0.961px;color:#000;">100</div>
<div class="t" style="left:1137.9px;top:287.0px;height:18px;line-height:18px;font-size:12px;letter-spacing:0.961px;color:#000;">120</div>
<div class="t" style="left:1247.9px;top:287.0px;height:18px;line-height:18px;font-size:12px;letter-spacing:0.961px;color:#000;">140</div>
<div class="t" style="left:863.1px;top:304.0px;height:18px;line-height:18px;font-size:12px;letter-spacing:1.254px;color:#000;font-weight:bold;">Time [a.u.]</div>
<div style="left:413px;top:356px;width:833px;height:326px;background:#fff;border-top:2px solid #a4a4a4;border-left:2px solid #a4a4a4;box-sizing:border-box"></div>
<div style="left:415px;top:358px;width:829px;height:322px;background:#000"></div>
<svg style="position:absolute;left:415px;top:358px" width="829" height="322" viewBox="415 358 829 322"><line x1="415" y1="362.5" x2="1244" y2="362.5" stroke="#fff" stroke-width="1" stroke-dasharray="1 2" shape-rendering="crispEdges"/><line x1="415" y1="375.5" x2="1244" y2="375.5" stroke="#fff" stroke-width="1" stroke-dasharray="1 2" shape-rendering="crispEdges"/><line x1="415" y1="387.5" x2="1244" y2="387.5" stroke="#fff" stroke-width="1" stroke-dasharray="1 2" shape-rendering="crispEdges"/><line x1="415" y1="399.5" x2="1244" y2="399.5" stroke="#fff" stroke-width="1" stroke-dasharray="1 2" shape-rendering="crispEdges"/><line x1="415" y1="412.5" x2="1244" y2="412.5" stroke="#fff" stroke-width="1" stroke-dasharray="1 2" shape-rendering="crispEdges"/><line x1="415" y1="424.5" x2="1244" y2="424.5" stroke="#fff" stroke-width="1" stroke-dasharray="1 2" shape-rendering="crispEdges"/><line x1="415" y1="437.5" x2="1244" y2="437.5" stroke="#fff" stroke-width="1" stroke-dasharray="1 2" shape-rendering="crispEdges"/><line x1="415" y1="449.5" x2="1244" y2="449.5" stroke="#fff" stroke-width="1" stroke-dasharray="1 2" shape-rendering="crispEdges"/><line x1="415" y1="462.5" x2="1244" y2="462.5" stroke="#fff" stroke-width="1" stroke-dasharray="1 2" shape-rendering="crispEdges"/><line x1="415" y1="474.5" x2="1244" y2="474.5" stroke="#fff" stroke-width="1" stroke-dasharray="1 2" shape-rendering="crispEdges"/><line x1="415" y1="487.5" x2="1244" y2="487.5" stroke="#fff" stroke-width="1" stroke-dasharray="1 2" shape-rendering="crispEdges"/><line x1="415" y1="499.5" x2="1244" y2="499.5" stroke="#fff" stroke-width="1" stroke-dasharray="1 2" shape-rendering="crispEdges"/><line x1="415" y1="512.5" x2="1244" y2="512.5" stroke="#fff" stroke-width="1" stroke-dasharray="1 2" shape-rendering="crispEdges"/><line x1="415" y1="524.5" x2="1244" y2="524.5" stroke="#fff" stroke-width="1" stroke-dasharray="1 2" shape-rendering="crispEdges"/><line x1="415" y1="536.5" x2="1244" y2="536.5" stroke="#fff" stroke-width="1" stroke-dasharray="1 2" shape-rendering="crispEdges"/><line x1="415" y1="549.5" x2="1244" y2="549.5" stroke="#fff" stroke-width="1" stroke-dasharray="1 2" shape-rendering="crispEdges"/><line x1="415" y1="561.5" x2="1244" y2="561.5" stroke="#fff" stroke-width="1" stroke-dasharray="1 2" shape-rendering="crispEdges"/><line x1="415" y1="574.5" x2="1244" y2="574.5" stroke="#fff" stroke-width="1" stroke-dasharray="1 2" shape-rendering="crispEdges"/><line x1="415" y1="586.5" x2="1244" y2="586.5" stroke="#fff" stroke-width="1" stroke-dasharray="1 2" shape-rendering="crispEdges"/><line x1="415" y1="599.5" x2="1244" y2="599.5" stroke="#fff" stroke-width="1" stroke-dasharray="1 2" shape-rendering="crispEdges"/><line x1="415" y1="611.5" x2="1244" y2="611.5" stroke="#fff" stroke-width="1" stroke-dasharray="1 2" shape-rendering="crispEdges"/><line x1="415" y1="624.5" x2="1244" y2="624.5" stroke="#fff" stroke-width="1" stroke-dasharray="1 2" shape-rendering="crispEdges"/><line x1="415" y1="636.5" x2="1244" y2="636.5" stroke="#fff" stroke-width="1" stroke-dasharray="1 2" shape-rendering="crispEdges"/><line x1="415" y1="648.5" x2="1244" y2="648.5" stroke="#fff" stroke-width="1" stroke-dasharray="1 2" shape-rendering="crispEdges"/><line x1="415" y1="661.5" x2="1244" y2="661.5" stroke="#fff" stroke-width="1" stroke-dasharray="1 2" shape-rendering="crispEdges"/><line x1="415" y1="673.5" x2="1244" y2="673.5" stroke="#fff" stroke-width="1" stroke-dasharray="1 2" shape-rendering="crispEdges"/><line x1="439.5" y1="358" x2="439.5" y2="680" stroke="#fff" stroke-width="1" stroke-dasharray="1 2" shape-rendering="crispEdges"/><line x1="483.5" y1="358" x2="483.5" y2="680" stroke="#fff" stroke-width="1" stroke-dasharray="1 2" shape-rendering="crispEdges"/><line x1="527.5" y1="358" x2="527.5" y2="680" stroke="#fff" stroke-width="1" stroke-dasharray="1 2" shape-rendering="crispEdges"/><line x1="571.5" y1="358" x2="571.5" y2="680" stroke="#fff" stroke-width="1" stroke-dasharray="1 2" shape-rendering="crispEdges"/><line x1="614.5" y1="358" x2="614.5" y2="680" stroke="#fff" stroke-width="1" stroke-dasharray="1 2" shape-rendering="crispEdges"/><line x1="658.5" y1="358" x2="658.5" y2="680" stroke="#fff" stroke-width="1" stroke-dasharray="1 2" shape-rendering="crispEdges"/><line x1="702.5" y1="358" x2="702.5" y2="680" stroke="#fff" stroke-width="1" stroke-dasharray="1 2" shape-rendering="crispEdges"/><line x1="746.5" y1="358" x2="746.5" y2="680" stroke="#fff" stroke-width="1" stroke-dasharray="1 2" shape-rendering="crispEdges"/><line x1="790.5" y1="358" x2="790.5" y2="680" stroke="#fff" stroke-width="1" stroke-dasharray="1 2" shape-rendering="crispEdges"/><line x1="834.5" y1="358" x2="834.5" y2="680" stroke="#fff" stroke-width="1" stroke-dasharray="1 2" shape-rendering="crispEdges"/><line x1="878.5" y1="358" x2="878.5" y2="680" stroke="#fff" stroke-width="1" stroke-dasharray="1 2" shape-rendering="crispEdges"/><line x1="921.5" y1="358" x2="921.5" y2="680" stroke="#fff" stroke-width="1" stroke-dasharray="1 2" shape-rendering="crispEdges"/><line x1="965.5" y1="358" x2="965.5" y2="680" stroke="#fff" stroke-width="1" stroke-dasharray="1 2" shape-rendering="crispEdges"/><line x1="1009.5" y1="358" x2="1009.5" y2="680" stroke="#fff" stroke-width="1" stroke-dasharray="1 2" shape-rendering="crispEdges"/><line x1="1053.5" y1="358" x2="1053.5" y2="680" stroke="#fff" stroke-width="1" stroke-dasharray="1 2" shape-rendering="crispEdges"/><line x1="1097.5" y1="358" x2="1097.5" y2="680" stroke="#fff" stroke-width="1" stroke-dasharray="1 2" shape-rendering="crispEdges"/><line x1="1141.5" y1="358" x2="1141.5" y2="680" stroke="#fff" stroke-width="1" stroke-dasharray="1 2" shape-rendering="crispEdges"/><line x1="1184.5" y1="358" x2="1184.5" y2="680" stroke="#fff" stroke-width="1" stroke-dasharray="1 2" shape-rendering="crispEdges"/><line x1="1228.5" y1="358" x2="1228.5" y2="680" stroke="#fff" stroke-width="1" stroke-dasharray="1 2" shape-rendering="crispEdges"/><line x1="415" y1="417" x2="1244" y2="417" stroke="#00ff00" stroke-width="2" stroke-dasharray="10 2 4 2" shape-rendering="crispEdges" /><line x1="415" y1="445" x2="1244" y2="445" stroke="#ffff00" stroke-width="2" stroke-dasharray="10 2 4 2" shape-rendering="crispEdges" /><rect x="889" y="361" width="6" height="6" fill="#00fa9a"/><rect x="922" y="361" width="6" height="6" fill="#d8bfd8"/><rect x="761" y="367" width="6" height="6" fill="#ffff00"/><rect x="790" y="367" width="6" height="6" fill="#1e90ff"/><rect x="815" y="367" width="6" height="6" fill="#808080"/><rect x="874" y="367" width="6" height="6" fill="#1e90ff"/><rect x="916" y="367" width="6" height="6" fill="#ff0000"/><rect x="921" y="367" width="6" height="6" fill="#ff7f50"/><rect x="926" y="367" width="6" height="6" fill="#98fb98"/><rect x="983" y="367" width="6" height="6" fill="#ff00ff"/><rect x="1015" y="367" width="6" height="6" fill="#191970"/><rect x="1046" y="367" width="6" height="6" fill="#778899"/><rect x="1069" y="367" width="6" height="6" fill="#778899"/><rect x="1106" y="367" width="6" height="6" fill="#00bfff"/><rect x="1112" y="367" width="6" height="6" fill="#8fbc8f"/><rect x="1118" y="367" width="6" height="6" fill="#ff0000"/><rect x="1146" y="367" width="6" height="6" fill="#ffe4c4"/><rect x="676" y="376" width="6" height="6" fill="#ffd700"/><rect x="759" y="376" width="6" height="6" fill="#fffacd"/><rect x="767" y="376" width="6" height="6" fill="#4682b4"/><rect x="779" y="376" width="6" height="6" fill="#8b4513"/><rect x="784" y="376" width="6" height="6" fill="#90ee90"/><rect x="801" y="376" width="6" height="6" fill="#b22222"/><rect x="813" y="376" width="6" height="6" fill="#ffd700"/><rect x="818" y="376" width="6" height="6" fill="#00ffff"/><rect x="823" y="376" width="6" height="6" fill="#00ced1"/><rect x="829" y="376" width="6" height="6" fill="#2f4f4f"/><rect x="841" y="376" width="6" height="6" fill="#00fa9a"/><rect x="848" y="376" width="6" height="6" fill="#d2691e"/><rect x="856" y="376" width="6" height="6" fill="#808080"/><rect x="870" y="376" width="6" height="6" fill="#ee82ee"/><rect x="881" y="376" width="6" height="6" fill="#00bfff"/><rect x="886" y="376" width="6" height="6" fill="#c71585"/><rect x="892" y="376" width="6" height="6" fill="#b22222"/><rect x="898" y="376" width="6" height="6" fill="#b22222"/><rect x="904" y="376" width="6" height="6" fill="#dda0dd"/><rect x="919" y="376" width="6" height="6" fill="#191970"/><rect x="945" y="376" width="6" height="6" fill="#adff2f"/><rect x="950" y="376" width="6" height="6" fill="#fff8dc"/><rect x="956" y="376" width="6" height="6" fill="#e6e6fa"/><rect x="962" y="376" width="6" height="6" fill="#228b22"/><rect x="969" y="376" width="6" height="6" fill="#9acd32"/><rect x="982" y="376" width="6" height="6" fill="#ffd700"/><rect x="989" y="376" width="6" height="6" fill="#808080"/><rect x="1012" y="376" width="6" height="6" fill="#bc8f8f"/><rect x="1054" y="376" width="6" height="6" fill="#ffb6c1"/><rect x="1065" y="376" width="6" height="6" fill="#00fa9a"/><rect x="1073" y="376" width="6" height="6" fill="#0000ff"/><rect x="1103" y="376" width="6" height="6" fill="#ff1493"/><rect x="1111" y="376" width="6" height="6" fill="#87ceeb"/><rect x="1119" y="376" width="6" height="6" fill="#00ced1"/><rect x="1126" y="376" width="6" height="6" fill="#ee82ee"/><rect x="1132" y="376" width="6" height="6" fill="#deb887"/><rect x="654" y="386" width="6" height="6" fill="#ba55d3"/><rect x="680" y="386" width="6" height="6" fill="#ff1493"/><rect x="703" y="386" width="6" height="6" fill="#483d8b"/><rect x="709" y="386" width="6" height="6" fill="#32cd32"/><rect x="725" y="386" width="6" height="6" fill="#8b4513"/><rect x="737" y="386" width="6" height="6" fill="#87ceeb"/><rect x="767" y="386" width="6" height="6" fill="#daa520"/><rect x="774" y="386" width="6" height="6" fill="#6a5acd"/><rect x="781" y="386" width="6" height="6" fill="#b22222"/><rect x="793" y="386" width="6" height="6" fill="#191970"/><rect x="816" y="386" width="6" height="6" fill="#8b4513"/><rect x="823" y="386" width="6" height="6" fill="#98fb98"/><rect x="829" y="386" width="6" height="6" fill="#ba55d3"/><rect x="836" y="386" width="6" height="6" fill="#8fbc8f"/><rect x="851" y="386" width="6" height="6" fill="#2e8b57"/><rect x="857" y="386" width="6" height="6" fill="#6495ed"/><rect x="863" y="386" width="6" height="6" fill="#2e8b57"/><rect x="868" y="386" width="6" height="6" fill="#cd5c5c"/><rect x="883" y="386" width="6" height="6" fill="#808080"/><rect x="915" y="386" width="6" height="6" fill="#483d8b"/><rect x="922" y="386" width="6" height="6" fill="#ffdab9"/><rect x="939" y="386" width="6" height="6" fill="#e6e6fa"/><rect x="943" y="386" width="6" height="6" fill="#ffffff"/><rect x="948" y="386" width="6" height="6" fill="#e6e6fa"/><rect x="962" y="386" width="6" height="6" fill="#66cdaa"/><rect x="970" y="386" width="6" height="6" fill="#ba55d3"/><rect x="978" y="386" width="6" height="6" fill="#483d8b"/><rect x="987" y="386" width="6" height="6" fill="#00ced1"/><rect x="1002" y="386" width="6" height="6" fill="#ffe4c4"/><rect x="1011" y="386" width="6" height="6" fill="#6495ed"/><rect x="1030" y="386" width="6" height="6" fill="#7fff00"/><rect x="1041" y="386" width="6" height="6" fill="#00ced1"/><rect x="1063" y="386" width="6" height="6" fill="#ffd700"/><rect x="1074" y="386" width="6" height="6" fill="#98fb98"/><rect x="1088" y="386" width="6" height="6" fill="#ba55d3"/><rect x="1098" y="386" width="6" height="6" fill="#ff00ff"/><rect x="1104" y="386" width="6" height="6" fill="#e6e6fa"/><rect x="1117" y="386" width="6" height="6" fill="#32cd32"/><rect x="1125" y="386" width="6" height="6" fill="#808080"/><rect x="1162" y="386" width="6" height="6" fill="#e0ffff"/><rect x="423" y="397" width="6" height="6" fill="#ffb6c1"/><rect x="429" y="397" width="6" height="6" fill="#228b22"/><rect x="440" y="397" width="6" height="6" fill="#008b8b"/><rect x="445" y="397" width="6" height="6" fill="#f0e68c"/><rect x="588" y="397" width="6" height="6" fill="#40e0d0"/><rect x="596" y="397" width="6" height="6" fill="#5f9ea0"/><rect x="647" y="397" width="6" height="6" fill="#6a5acd"/><rect x="669" y="397" width="6" height="6" fill="#f0e68c"/><rect x="674" y="397" width="6" height="6" fill="#ffdab9"/><rect x="683" y="397" width="6" height="6" fill="#bc8f8f"/><rect x="691" y="397" width="6" height="6" fill="#ffdab9"/><rect x="701" y="397" width="6" height="6" fill="#008b8b"/><rect x="706" y="397" width="6" height="6" fill="#ff1493"/><rect x="739" y="397" width="6" height="6" fill="#778899"/><rect x="753" y="397" width="6" height="6" fill="#dda0dd"/><rect x="756" y="397" width="6" height="6" fill="#ffdab9"/><rect x="769" y="397" width="6" height="6" fill="#e6e6fa"/><rect x="773" y="397" width="6" height="6" fill="#00bfff"/><rect x="782" y="397" width="6" height="6" fill="#cd5c5c"/><rect x="790" y="397" width="6" height="6" fill="#6a5acd"/><rect x="799" y="397" width="6" height="6" fill="#fa8072"/><rect x="804" y="397" width="6" height="6" fill="#9400d3"/><rect x="810" y="397" width="6" height="6" fill="#808000"/><rect x="824" y="397" width="6" height="6" fill="#9400d3"/><rect x="830" y="397" width="6" height="6" fill="#00bfff"/><rect x="836" y="397" width="6" height="6" fill="#a9a9a9"/><rect x="842" y="397" width="6" height="6" fill="#20b2aa"/><rect x="853" y="397" width="6" height="6" fill="#ffe4c4"/><rect x="864" y="397" width="6" height="6" fill="#98fb98"/><rect x="869" y="397" width="6" height="6" fill="#ffd700"/><rect x="875" y="397" width="6" height="6" fill="#8b008b"/><rect x="880" y="397" width="6" height="6" fill="#deb887"/><rect x="886" y="397" width="6" height="6" fill="#f5deb3"/><rect x="896" y="397" width="6" height="6" fill="#00fa9a"/><rect x="910" y="397" width="6" height="6" fill="#1e90ff"/><rect x="915" y="397" width="6" height="6" fill="#ff8c00"/><rect x="951" y="397" width="6" height="6" fill="#66cdaa"/><rect x="964" y="397" width="6" height="6" fill="#8b008b"/><rect x="971" y="397" width="6" height="6" fill="#98fb98"/><rect x="986" y="397" width="6" height="6" fill="#8fbc8f"/><rect x="990" y="397" width="6" height="6" fill="#4169e1"/><rect x="1008" y="397" width="6" height="6" fill="#4682b4"/><rect x="1027" y="397" width="6" height="6" fill="#e6e6fa"/><rect x="1033" y="397" width="6" height="6" fill="#cd5c5c"/><rect x="1039" y="397" width="6" height="6" fill="#0000ff"/><rect x="1045" y="397" width="6" height="6" fill="#6a5acd"/><rect x="1056" y="397" width="6" height="6" fill="#4169e1"/><rect x="1066" y="397" width="6" height="6" fill="#afeeee"/><rect x="1075" y="397" width="6" height="6" fill="#e0ffff"/><rect x="1087" y="397" width="6" height="6" fill="#8fbc8f"/><rect x="1102" y="397" width="6" height="6" fill="#6495ed"/><rect x="1137" y="397" width="6" height="6" fill="#00fa9a"/><rect x="1143" y="397" width="6" height="6" fill="#ff69b4"/><rect x="1196" y="397" width="6" height="6" fill="#ffe4c4"/><rect x="447" y="409" width="6" height="6" fill="#8b008b"/><rect x="452" y="409" width="6" height="6" fill="#00bfff"/><rect x="488" y="409" width="6" height="6" fill="#ffb6c1"/><rect x="519" y="409" width="6" height="6" fill="#cd5c5c"/><rect x="557" y="409" width="6" height="6" fill="#ba55d3"/><rect x="575" y="409" width="6" height="6" fill="#483d8b"/><rect x="582" y="409" width="6" height="6" fill="#cd5c5c"/><rect x="590" y="409" width="6" height="6" fill="#ffb6c1"/><rect x="600" y="409" width="6" height="6" fill="#808000"/><rect x="606" y="409" width="6" height="6" fill="#6495ed"/><rect x="613" y="409" width="6" height="6" fill="#c71585"/><rect x="620" y="409" width="6" height="6" fill="#00ff00"/><rect x="626" y="409" width="6" height="6" fill="#8b008b"/><rect x="632" y="409" width="6" height="6" fill="#e6e6fa"/><rect x="639" y="409" width="6" height="6" fill="#ffffff"/><rect x="653" y="409" width="6" height="6" fill="#7fff00"/><rect x="658" y="409" width="6" height="6" fill="#dda0dd"/><rect x="666" y="409" width="6" height="6" fill="#00ff00"/><rect x="687" y="409" width="6" height="6" fill="#40e0d0"/><rect x="714" y="409" width="6" height="6" fill="#ffdab9"/><rect x="717" y="409" width="6" height="6" fill="#2f4f4f"/><rect x="726" y="409" width="6" height="6" fill="#66cdaa"/><rect x="730" y="409" width="6" height="6" fill="#00ff00"/><rect x="746" y="409" width="6" height="6" fill="#778899"/><rect x="753" y="409" width="6" height="6" fill="#ff6347"/><rect x="770" y="409" width="6" height="6" fill="#ffb6c1"/><rect x="774" y="409" width="6" height="6" fill="#ffb6c1"/><rect x="779" y="409" width="6" height="6" fill="#ffff00"/><rect x="793" y="409" width="6" height="6" fill="#ff00ff"/><rect x="818" y="409" width="6" height="6" fill="#f5deb3"/><rect x="839" y="409" width="6" height="6" fill="#e0ffff"/><rect x="859" y="409" width="6" height="6" fill="#ff0000"/><rect x="862" y="409" width="6" height="6" fill="#dda0dd"/><rect x="886" y="409" width="6" height="6" fill="#ff0000"/><rect x="897" y="409" width="6" height="6" fill="#7fff00"/><rect x="904" y="409" width="6" height="6" fill="#ff8c00"/><rect x="920" y="409" width="6" height="6" fill="#00bfff"/><rect x="938" y="409" width="6" height="6" fill="#ff1493"/><rect x="946" y="409" width="6" height="6" fill="#90ee90"/><rect x="957" y="409" width="6" height="6" fill="#fff8dc"/><rect x="976" y="409" width="6" height="6" fill="#ffffff"/><rect x="993" y="409" width="6" height="6" fill="#d2691e"/><rect x="998" y="409" width="6" height="6" fill="#afeeee"/><rect x="1002" y="409" width="6" height="6" fill="#ff8c00"/><rect x="1012" y="409" width="6" height="6" fill="#ff6347"/><rect x="1016" y="409" width="6" height="6" fill="#00fa9a"/><rect x="1034" y="409" width="6" height="6" fill="#cd5c5c"/><rect x="1052" y="409" width="6" height="6" fill="#9400d3"/><rect x="1086" y="409" width="6" height="6" fill="#fffacd"/><rect x="1090" y="409" width="6" height="6" fill="#9400d3"/><rect x="1105" y="409" width="6" height="6" fill="#d2691e"/><rect x="1126" y="409" width="6" height="6" fill="#2e8b57"/><rect x="1150" y="409" width="6" height="6" fill="#ff8c00"/><rect x="427" y="422" width="6" height="6" fill="#808000"/><rect x="434" y="422" width="6" height="6" fill="#dda0dd"/><rect x="440" y="422" width="6" height="6" fill="#deb887"/><rect x="446" y="422" width="6" height="6" fill="#ff7f50"/><rect x="452" y="422" width="6" height="6" fill="#ffe4c4"/><rect x="459" y="422" width="6" height="6" fill="#7fff00"/><rect x="465" y="422" width="6" height="6" fill="#808000"/><rect x="471" y="422" width="6" height="6" fill="#778899"/><rect x="477" y="422" width="6" height="6" fill="#4682b4"/><rect x="484" y="422" width="6" height="6" fill="#b0c4de"/><rect x="490" y="422" width="6" height="6" fill="#ffdab9"/><rect x="496" y="422" width="6" height="6" fill="#e6e6fa"/><rect x="502" y="422" width="6" height="6" fill="#ff00ff"/><rect x="515" y="422" width="6" height="6" fill="#f08080"/><rect x="520" y="422" width="6" height="6" fill="#6495ed"/><rect x="526" y="422" width="6" height="6" fill="#dc143c"/><rect x="532" y="422" width="6" height="6" fill="#f5deb3"/><rect x="538" y="422" width="6" height="6" fill="#483d8b"/><rect x="544" y="422" width="6" height="6" fill="#00ff00"/><rect x="550" y="422" width="6" height="6" fill="#ff8c00"/><rect x="556" y="422" width="6" height="6" fill="#d8bfd8"/><rect x="562" y="422" width="6" height="6" fill="#e0ffff"/><rect x="568" y="422" width="6" height="6" fill="#e0ffff"/><rect x="573" y="422" width="6" height="6" fill="#5f9ea0"/><rect x="579" y="422" width="6" height="6" fill="#0000ff"/><rect x="585" y="422" width="6" height="6" fill="#ff0000"/><rect x="591" y="422" width="6" height="6" fill="#7b68ee"/><rect x="597" y="422" width="6" height="6" fill="#6495ed"/><rect x="603" y="422" width="6" height="6" fill="#daa520"/><rect x="609" y="422" width="6" height="6" fill="#ff69b4"/><rect x="615" y="422" width="6" height="6" fill="#ff00ff"/><rect x="620" y="422" width="6" height="6" fill="#ffe4c4"/><rect x="626" y="422" width="6" height="6" fill="#ffd700"/><rect x="632" y="422" width="6" height="6" fill="#40e0d0"/><rect x="638" y="422" width="6" height="6" fill="#7b68ee"/><rect x="644" y="422" width="6" height="6" fill="#b0c4de"/><rect x="656" y="422" width="6" height="6" fill="#ff6347"/><rect x="662" y="422" width="6" height="6" fill="#deb887"/><rect x="668" y="422" width="6" height="6" fill="#bc8f8f"/><rect x="674" y="422" width="6" height="6" fill="#5f9ea0"/><rect x="681" y="422" width="6" height="6" fill="#ff8c00"/><rect x="687" y="422" width="6" height="6" fill="#6a5acd"/><rect x="698" y="422" width="6" height="6" fill="#ff69b4"/><rect x="703" y="422" width="6" height="6" fill="#ffdab9"/><rect x="709" y="422" width="6" height="6" fill="#dda0dd"/><rect x="714" y="422" width="6" height="6" fill="#2f4f4f"/><rect x="726" y="422" width="6" height="6" fill="#ffff00"/><rect x="733" y="422" width="6" height="6" fill="#20b2aa"/><rect x="740" y="422" width="6" height="6" fill="#90ee90"/><rect x="747" y="422" width="6" height="6" fill="#6a5acd"/><rect x="757" y="422" width="6" height="6" fill="#bc8f8f"/><rect x="770" y="422" width="6" height="6" fill="#cd5c5c"/><rect x="792" y="422" width="6" height="6" fill="#5f9ea0"/><rect x="797" y="422" width="6" height="6" fill="#008b8b"/><rect x="803" y="422" width="6" height="6" fill="#b22222"/><rect x="809" y="422" width="6" height="6" fill="#4169e1"/><rect x="815" y="422" width="6" height="6" fill="#d2691e"/><rect x="872" y="422" width="6" height="6" fill="#90ee90"/><rect x="908" y="422" width="6" height="6" fill="#d2691e"/><rect x="930" y="422" width="6" height="6" fill="#00ff00"/><rect x="944" y="422" width="6" height="6" fill="#2e8b57"/><rect x="973" y="422" width="6" height="6" fill="#d8bfd8"/><rect x="981" y="422" width="6" height="6" fill="#f08080"/><rect x="991" y="422" width="6" height="6" fill="#00ff00"/><rect x="1004" y="422" width="6" height="6" fill="#228b22"/><rect x="1014" y="422" width="6" height="6" fill="#ff0000"/><rect x="1031" y="422" width="6" height="6" fill="#fffacd"/><rect x="1040" y="422" width="6" height="6" fill="#ffff00"/><rect x="1048" y="422" width="6" height="6" fill="#008b8b"/><rect x="1070" y="422" width="6" height="6" fill="#e0ffff"/><rect x="1081" y="422" width="6" height="6" fill="#ee82ee"/><rect x="1092" y="422" width="6" height="6" fill="#f5deb3"/><rect x="1109" y="422" width="6" height="6" fill="#00ff00"/><rect x="1139" y="422" width="6" height="6" fill="#7fff00"/><rect x="1166" y="422" width="6" height="6" fill="#a9a9a9"/><rect x="1170" y="422" width="6" height="6" fill="#00bfff"/><rect x="434" y="434" width="6" height="6" fill="#b22222"/><rect x="439" y="434" width="6" height="6" fill="#d2691e"/><rect x="445" y="434" width="6" height="6" fill="#e6e6fa"/><rect x="451" y="434" width="6" height="6" fill="#ba55d3"/><rect x="457" y="434" width="6" height="6" fill="#5f9ea0"/><rect x="463" y="434" width="6" height="6" fill="#00fa9a"/><rect x="468" y="434" width="6" height="6" fill="#ffdab9"/><rect x="474" y="434" width="6" height="6" fill="#8fbc8f"/><rect x="480" y="434" width="6" height="6" fill="#ee82ee"/><rect x="494" y="434" width="6" height="6" fill="#ff6347"/><rect x="499" y="434" width="6" height="6" fill="#ffdab9"/><rect x="505" y="434" width="6" height="6" fill="#8b008b"/><rect x="510" y="434" width="6" height="6" fill="#8b4513"/><rect x="516" y="434" width="6" height="6" fill="#deb887"/><rect x="521" y="434" width="6" height="6" fill="#bc8f8f"/><rect x="533" y="434" width="6" height="6" fill="#4169e1"/><rect x="540" y="434" width="6" height="6" fill="#00bfff"/><rect x="549" y="434" width="6" height="6" fill="#ff1493"/><rect x="564" y="434" width="6" height="6" fill="#90ee90"/><rect x="572" y="434" width="6" height="6" fill="#4682b4"/><rect x="580" y="434" width="6" height="6" fill="#808000"/><rect x="598" y="434" width="6" height="6" fill="#ff00ff"/><rect x="605" y="434" width="6" height="6" fill="#ffd700"/><rect x="613" y="434" width="6" height="6" fill="#ffff00"/><rect x="625" y="434" width="6" height="6" fill="#b0c4de"/><rect x="631" y="434" width="6" height="6" fill="#00ced1"/><rect x="637" y="434" width="6" height="6" fill="#dc143c"/><rect x="643" y="434" width="6" height="6" fill="#adff2f"/><rect x="649" y="434" width="6" height="6" fill="#98fb98"/><rect x="656" y="434" width="6" height="6" fill="#1e90ff"/><rect x="662" y="434" width="6" height="6" fill="#ffffff"/><rect x="668" y="434" width="6" height="6" fill="#ffe4c4"/><rect x="674" y="434" width="6" height="6" fill="#808080"/><rect x="680" y="434" width="6" height="6" fill="#40e0d0"/><rect x="686" y="434" width="6" height="6" fill="#9400d3"/><rect x="694" y="434" width="6" height="6" fill="#5f9ea0"/><rect x="716" y="434" width="6" height="6" fill="#a9a9a9"/><rect x="721" y="434" width="6" height="6" fill="#ee82ee"/><rect x="727" y="434" width="6" height="6" fill="#dda0dd"/><rect x="732" y="434" width="6" height="6" fill="#deb887"/><rect x="738" y="434" width="6" height="6" fill="#00bfff"/><rect x="744" y="434" width="6" height="6" fill="#e6e6fa"/><rect x="760" y="434" width="6" height="6" fill="#ff69b4"/><rect x="776" y="434" width="6" height="6" fill="#8b008b"/><rect x="782" y="434" width="6" height="6" fill="#ee82ee"/><rect x="789" y="434" width="6" height="6" fill="#98fb98"/><rect x="795" y="434" width="6" height="6" fill="#e6e6fa"/><rect x="807" y="434" width="6" height="6" fill="#ba55d3"/><rect x="861" y="434" width="6" height="6" fill="#5f9ea0"/><rect x="899" y="434" width="6" height="6" fill="#00fa9a"/><rect x="909" y="434" width="6" height="6" fill="#90ee90"/><rect x="955" y="434" width="6" height="6" fill="#7b68ee"/><rect x="960" y="434" width="6" height="6" fill="#b22222"/><rect x="979" y="434" width="6" height="6" fill="#00ced1"/><rect x="985" y="434" width="6" height="6" fill="#ff6347"/><rect x="1018" y="434" width="6" height="6" fill="#00ff00"/><rect x="1025" y="434" width="6" height="6" fill="#ff0000"/><rect x="1051" y="434" width="6" height="6" fill="#ffd700"/><rect x="1060" y="434" width="6" height="6" fill="#a9a9a9"/><rect x="1070" y="434" width="6" height="6" fill="#ff1493"/><rect x="1084" y="434" width="6" height="6" fill="#2f4f4f"/><rect x="1115" y="434" width="6" height="6" fill="#6a5acd"/><rect x="1145" y="434" width="6" height="6" fill="#808000"/><rect x="427" y="447" width="6" height="6" fill="#00fa9a"/><rect x="435" y="447" width="6" height="6" fill="#87ceeb"/><rect x="458" y="447" width="6" height="6" fill="#8b008b"/><rect x="465" y="447" width="6" height="6" fill="#dc143c"/><rect x="484" y="447" width="6" height="6" fill="#bc8f8f"/><rect x="490" y="447" width="6" height="6" fill="#fa8072"/><rect x="496" y="447" width="6" height="6" fill="#a9a9a9"/><rect x="502" y="447" width="6" height="6" fill="#20b2aa"/><rect x="508" y="447" width="6" height="6" fill="#00ced1"/><rect x="514" y="447" width="6" height="6" fill="#ffdab9"/><rect x="521" y="447" width="6" height="6" fill="#ff6347"/><rect x="527" y="447" width="6" height="6" fill="#0000ff"/><rect x="533" y="447" width="6" height="6" fill="#ffd700"/><rect x="542" y="447" width="6" height="6" fill="#4682b4"/><rect x="547" y="447" width="6" height="6" fill="#4682b4"/><rect x="552" y="447" width="6" height="6" fill="#90ee90"/><rect x="565" y="447" width="6" height="6" fill="#00bfff"/><rect x="572" y="447" width="6" height="6" fill="#90ee90"/><rect x="594" y="447" width="6" height="6" fill="#4169e1"/><rect x="616" y="447" width="6" height="6" fill="#1e90ff"/><rect x="623" y="447" width="6" height="6" fill="#afeeee"/><rect x="630" y="447" width="6" height="6" fill="#00fa9a"/><rect x="640" y="447" width="6" height="6" fill="#98fb98"/><rect x="646" y="447" width="6" height="6" fill="#f5deb3"/><rect x="652" y="447" width="6" height="6" fill="#00ced1"/><rect x="658" y="447" width="6" height="6" fill="#66cdaa"/><rect x="664" y="447" width="6" height="6" fill="#a9a9a9"/><rect x="670" y="447" width="6" height="6" fill="#ffd700"/><rect x="683" y="447" width="6" height="6" fill="#87ceeb"/><rect x="714" y="447" width="6" height="6" fill="#ff00ff"/><rect x="719" y="447" width="6" height="6" fill="#ee82ee"/><rect x="756" y="447" width="6" height="6" fill="#20b2aa"/><rect x="768" y="447" width="6" height="6" fill="#4169e1"/><rect x="790" y="447" width="6" height="6" fill="#deb887"/><rect x="815" y="447" width="6" height="6" fill="#e6e6fa"/><rect x="826" y="447" width="6" height="6" fill="#f5deb3"/><rect x="871" y="447" width="6" height="6" fill="#191970"/><rect x="903" y="447" width="6" height="6" fill="#ffb6c1"/><rect x="918" y="447" width="6" height="6" fill="#2f4f4f"/><rect x="933" y="447" width="6" height="6" fill="#6495ed"/><rect x="936" y="447" width="6" height="6" fill="#e0ffff"/><rect x="959" y="447" width="6" height="6" fill="#32cd32"/><rect x="972" y="447" width="6" height="6" fill="#0000ff"/><rect x="1020" y="447" width="6" height="6" fill="#dc143c"/><rect x="1039" y="447" width="6" height="6" fill="#c71585"/><rect x="1049" y="447" width="6" height="6" fill="#66cdaa"/><rect x="1094" y="447" width="6" height="6" fill="#00ced1"/><rect x="1124" y="447" width="6" height="6" fill="#6a5acd"/><rect x="1164" y="447" width="6" height="6" fill="#228b22"/><rect x="430" y="459" width="6" height="6" fill="#adff2f"/><rect x="454" y="459" width="6" height="6" fill="#d2691e"/><rect x="460" y="459" width="6" height="6" fill="#ffd700"/><rect x="466" y="459" width="6" height="6" fill="#f5deb3"/><rect x="473" y="459" width="6" height="6" fill="#fffacd"/><rect x="500" y="459" width="6" height="6" fill="#00ff00"/><rect x="507" y="459" width="6" height="6" fill="#00ffff"/><rect x="529" y="459" width="6" height="6" fill="#ee82ee"/><rect x="538" y="459" width="6" height="6" fill="#daa520"/><rect x="549" y="459" width="6" height="6" fill="#6495ed"/><rect x="562" y="459" width="6" height="6" fill="#dda0dd"/><rect x="592" y="459" width="6" height="6" fill="#adff2f"/><rect x="610" y="459" width="6" height="6" fill="#0000ff"/><rect x="677" y="459" width="6" height="6" fill="#bc8f8f"/><rect x="692" y="459" width="6" height="6" fill="#ffff00"/><rect x="748" y="459" width="6" height="6" fill="#ffd700"/><rect x="763" y="459" width="6" height="6" fill="#8fbc8f"/><rect x="890" y="459" width="6" height="6" fill="#e0ffff"/><rect x="928" y="459" width="6" height="6" fill="#008b8b"/><rect x="934" y="459" width="6" height="6" fill="#1e90ff"/><rect x="940" y="459" width="6" height="6" fill="#bc8f8f"/><rect x="991" y="459" width="6" height="6" fill="#90ee90"/><rect x="998" y="459" width="6" height="6" fill="#32cd32"/><rect x="1007" y="459" width="6" height="6" fill="#ffd700"/><rect x="1029" y="459" width="6" height="6" fill="#8fbc8f"/><rect x="1055" y="459" width="6" height="6" fill="#9acd32"/><rect x="450" y="472" width="6" height="6" fill="#87ceeb"/><rect x="526" y="472" width="6" height="6" fill="#f5deb3"/><rect x="531" y="472" width="6" height="6" fill="#f08080"/><rect x="536" y="472" width="6" height="6" fill="#778899"/><rect x="561" y="472" width="6" height="6" fill="#483d8b"/><rect x="586" y="472" width="6" height="6" fill="#dda0dd"/><rect x="787" y="472" width="6" height="6" fill="#8b008b"/><rect x="867" y="472" width="6" height="6" fill="#a9a9a9"/><rect x="912" y="472" width="6" height="6" fill="#ffe4c4"/><rect x="927" y="472" width="6" height="6" fill="#cd5c5c"/><rect x="1032" y="472" width="6" height="6" fill="#7fff00"/><rect x="425" y="484" width="6" height="6" fill="#ff1493"/><rect x="436" y="484" width="6" height="6" fill="#b0c4de"/><rect x="835" y="484" width="6" height="6" fill="#66cdaa"/><rect x="935" y="484" width="6" height="6" fill="#ffffff"/><rect x="995" y="484" width="6" height="6" fill="#e0ffff"/><rect x="999" y="484" width="6" height="6" fill="#ff8c00"/><rect x="1009" y="484" width="6" height="6" fill="#ffd700"/><rect x="1019" y="484" width="6" height="6" fill="#778899"/><rect x="1043" y="484" width="6" height="6" fill="#f5deb3"/><rect x="1059" y="484" width="6" height="6" fill="#8fbc8f"/><rect x="1076" y="484" width="6" height="6" fill="#6495ed"/><rect x="424" y="497" width="6" height="6" fill="#ee82ee"/><rect x="1021" y="497" width="6" height="6" fill="#7b68ee"/><rect x="1024" y="497" width="6" height="6" fill="#ba55d3"/><rect x="1061" y="497" width="6" height="6" fill="#90ee90"/><rect x="1096" y="497" width="6" height="6" fill="#f5deb3"/><rect x="1100" y="497" width="6" height="6" fill="#6495ed"/><rect x="422" y="509" width="6" height="6" fill="#483d8b"/><rect x="437" y="509" width="6" height="6" fill="#b0c4de"/><rect x="620" y="509" width="6" height="6" fill="#ff7f50"/><rect x="765" y="509" width="6" height="6" fill="#00fa9a"/><rect x="917" y="509" width="6" height="6" fill="#b22222"/><rect x="994" y="509" width="6" height="6" fill="#98fb98"/><rect x="1006" y="509" width="6" height="6" fill="#f0e68c"/><rect x="1058" y="509" width="6" height="6" fill="#ff1493"/><rect x="1077" y="509" width="6" height="6" fill="#1e90ff"/><rect x="1101" y="509" width="6" height="6" fill="#1e90ff"/><rect x="1121" y="509" width="6" height="6" fill="#c71585"/><rect x="1153" y="509" width="6" height="6" fill="#ff69b4"/><rect x="734" y="522" width="6" height="6" fill="#ba55d3"/><rect x="421" y="559" width="6" height="6" fill="#00ffff"/><rect x="711" y="559" width="6" height="6" fill="#deb887"/><rect x="426" y="572" width="6" height="6" fill="#adff2f"/><rect x="732" y="609" width="6" height="6" fill="#00ffff"/><rect x="418" y="622" width="6" height="6" fill="#b22222"/><rect x="710" y="622" width="6" height="6" fill="#ff69b4"/><rect x="907" y="522" width="6" height="6" fill="#ff69b4"/><rect x="1095" y="522" width="6" height="6" fill="#483d8b"/><rect x="837" y="547" width="6" height="6" fill="#d8bfd8"/><rect x="929" y="547" width="6" height="6" fill="#483d8b"/><rect x="936" y="547" width="6" height="6" fill="#daa520"/><rect x="941" y="547" width="6" height="6" fill="#7fff00"/><rect x="1083" y="547" width="6" height="6" fill="#90ee90"/><rect x="1023" y="559" width="6" height="6" fill="#7b68ee"/><rect x="949" y="572" width="6" height="6" fill="#00ff00"/><rect x="943" y="672" width="6" height="6" fill="#ee82ee"/></svg>
<svg style="position:absolute;left:1240px;top:355px" width="22" height="335" viewBox="1240 355 22 335"><line x1="1248.5" y1="362" x2="1248.5" y2="675" stroke="#000" stroke-width="1" shape-rendering="crispEdges" /><line x1="1248" y1="363.5" x2="1256" y2="363.5" stroke="#000" stroke-width="1" shape-rendering="crispEdges" /><line x1="1248" y1="404.5" x2="1256" y2="404.5" stroke="#000" stroke-width="1" shape-rendering="crispEdges" /><line x1="1248" y1="392.5" x2="1252" y2="392.5" stroke="#000" stroke-width="1" shape-rendering="crispEdges" /><line x1="1248" y1="379.5" x2="1252" y2="379.5" stroke="#000" stroke-width="1" shape-rendering="crispEdges" /><line x1="1248" y1="372.5" x2="1252" y2="372.5" stroke="#000" stroke-width="1" shape-rendering="crispEdges" /><line x1="1248" y1="367.5" x2="1252" y2="367.5" stroke="#000" stroke-width="1" shape-rendering="crispEdges" /><line x1="1248" y1="445.5" x2="1256" y2="445.5" stroke="#000" stroke-width="1" shape-rendering="crispEdges" /><line x1="1248" y1="433.5" x2="1252" y2="433.5" stroke="#000" stroke-width="1" shape-rendering="crispEdges" /><line x1="1248" y1="420.5" x2="1252" y2="420.5" stroke="#000" stroke-width="1" shape-rendering="crispEdges" /><line x1="1248" y1="413.5" x2="1252" y2="413.5" stroke="#000" stroke-width="1" shape-rendering="crispEdges" /><line x1="1248" y1="408.5" x2="1252" y2="408.5" stroke="#000" stroke-width="1" shape-rendering="crispEdges" /><line x1="1248" y1="487.5" x2="1256" y2="487.5" stroke="#000" stroke-width="1" shape-rendering="crispEdges" /><line x1="1248" y1="474.5" x2="1252" y2="474.5" stroke="#000" stroke-width="1" shape-rendering="crispEdges" /><line x1="1248" y1="462.5" x2="1252" y2="462.5" stroke="#000" stroke-width="1" shape-rendering="crispEdges" /><line x1="1248" y1="454.5" x2="1252" y2="454.5" stroke="#000" stroke-width="1" shape-rendering="crispEdges" /><line x1="1248" y1="449.5" x2="1252" y2="449.5" stroke="#000" stroke-width="1" shape-rendering="crispEdges" /><line x1="1248" y1="528.5" x2="1256" y2="528.5" stroke="#000" stroke-width="1" shape-rendering="crispEdges" /><line x1="1248" y1="515.5" x2="1252" y2="515.5" stroke="#000" stroke-width="1" shape-rendering="crispEdges" /><line x1="1248" y1="503.5" x2="1252" y2="503.5" stroke="#000" stroke-width="1" shape-rendering="crispEdges" /><line x1="1248" y1="496.5" x2="1252" y2="496.5" stroke="#000" stroke-width="1" shape-rendering="crispEdges" /><line x1="1248" y1="490.5" x2="1252" y2="490.5" stroke="#000" stroke-width="1" shape-rendering="crispEdges" /><line x1="1248" y1="569.5" x2="1256" y2="569.5" stroke="#000" stroke-width="1" shape-rendering="crispEdges" /><line x1="1248" y1="556.5" x2="1252" y2="556.5" stroke="#000" stroke-width="1" shape-rendering="crispEdges" /><line x1="1248" y1="544.5" x2="1252" y2="544.5" stroke="#000" stroke-width="1" shape-rendering="crispEdges" /><line x1="1248" y1="537.5" x2="1252" y2="537.5" stroke="#000" stroke-width="1" shape-rendering="crispEdges" /><line x1="1248" y1="532.5" x2="1252" y2="532.5" stroke="#000" stroke-width="1" shape-rendering="crispEdges" /><line x1="1248" y1="610.5" x2="1256" y2="610.5" stroke="#000" stroke-width="1" shape-rendering="crispEdges" /><line x1="1248" y1="598.5" x2="1252" y2="598.5" stroke="#000" stroke-width="1" shape-rendering="crispEdges" /><line x1="1248" y1="585.5" x2="1252" y2="585.5" stroke="#000" stroke-width="1" shape-rendering="crispEdges" /><line x1="1248" y1="578.5" x2="1252" y2="578.5" stroke="#000" stroke-width="1" shape-rendering="crispEdges" /><line x1="1248" y1="573.5" x2="1252" y2="573.5" stroke="#000" stroke-width="1" shape-rendering="crispEdges" /><line x1="1248" y1="651.5" x2="1256" y2="651.5" stroke="#000" stroke-width="1" shape-rendering="crispEdges" /><line x1="1248" y1="639.5" x2="1252" y2="639.5" stroke="#000" stroke-width="1" shape-rendering="crispEdges" /><line x1="1248" y1="626.5" x2="1252" y2="626.5" stroke="#000" stroke-width="1" shape-rendering="crispEdges" /><line x1="1248" y1="619.5" x2="1252" y2="619.5" stroke="#000" stroke-width="1" shape-rendering="crispEdges" /><line x1="1248" y1="614.5" x2="1252" y2="614.5" stroke="#000" stroke-width="1" shape-rendering="crispEdges" /></svg>
<div class="t" style="left:1261.0px;top:354.9px;height:18px;line-height:18px;font-size:12px;letter-spacing:0.961px;color:#000;">1</div>
<div class="t" style="left:1261.0px;top:396.1px;height:18px;line-height:18px;font-size:12px;letter-spacing:0.801px;color:#000;">0.1</div>
<div class="t" style="left:1261.0px;top:437.3px;height:18px;line-height:18px;font-size:12px;letter-spacing:0.841px;color:#000;">0.01</div>
<div class="t" style="left:1261.0px;top:478.5px;height:18px;line-height:18px;font-size:12px;letter-spacing:0.865px;color:#000;">0.001</div>
<div class="t" style="left:1261.0px;top:519.7px;height:18px;line-height:18px;font-size:12px;letter-spacing:0.881px;color:#000;">0.0001</div>
<div class="t" style="left:1261.0px;top:560.9px;height:18px;line-height:18px;font-size:12px;letter-spacing:0.785px;color:#000;">1e-05</div>
<div class="t" style="left:1261.0px;top:602.1px;height:18px;line-height:18px;font-size:12px;letter-spacing:0.785px;color:#000;">1e-06</div>
<div class="t" style="left:1261.0px;top:643.3px;height:18px;line-height:18px;font-size:12px;letter-spacing:0.785px;color:#000;">1e-07</div>
<div class="t" style="left:1226.0px;top:507.9px;width:187.2px;height:22.2px;line-height:22.2px;font-size:18.5px;letter-spacing:1.19px;font-weight:bold;transform:rotate(90deg);transform-origin:92.0px 11.1px;text-align:left">P value (log scale)</div>
<svg style="position:absolute;left:410px;top:680px" width="840" height="15" viewBox="410 680 840 15"><line x1="419" y1="684.5" x2="1238" y2="684.5" stroke="#000" stroke-width="1" shape-rendering="crispEdges" /><line x1="439.5" y1="684" x2="439.5" y2="688" stroke="#000" stroke-width="1" shape-rendering="crispEdges" /><line x1="482.5" y1="684" x2="482.5" y2="688" stroke="#000" stroke-width="1" shape-rendering="crispEdges" /><line x1="526.5" y1="684" x2="526.5" y2="688" stroke="#000" stroke-width="1" shape-rendering="crispEdges" /><line x1="570.5" y1="684" x2="570.5" y2="688" stroke="#000" stroke-width="1" shape-rendering="crispEdges" /><line x1="614.5" y1="684" x2="614.5" y2="692" stroke="#000" stroke-width="1" shape-rendering="crispEdges" /><line x1="658.5" y1="684" x2="658.5" y2="688" stroke="#000" stroke-width="1" shape-rendering="crispEdges" /><line x1="702.5" y1="684" x2="702.5" y2="688" stroke="#000" stroke-width="1" shape-rendering="crispEdges" /><line x1="746.5" y1="684" x2="746.5" y2="688" stroke="#000" stroke-width="1" shape-rendering="crispEdges" /><line x1="789.5" y1="684" x2="789.5" y2="688" stroke="#000" stroke-width="1" shape-rendering="crispEdges" /><line x1="833.5" y1="684" x2="833.5" y2="692" stroke="#000" stroke-width="1" shape-rendering="crispEdges" /><line x1="877.5" y1="684" x2="877.5" y2="688" stroke="#000" stroke-width="1" shape-rendering="crispEdges" /><line x1="921.5" y1="684" x2="921.5" y2="688" stroke="#000" stroke-width="1" shape-rendering="crispEdges" /><line x1="965.5" y1="684" x2="965.5" y2="688" stroke="#000" stroke-width="1" shape-rendering="crispEdges" /><line x1="1009.5" y1="684" x2="1009.5" y2="688" stroke="#000" stroke-width="1" shape-rendering="crispEdges" /><line x1="1052.5" y1="684" x2="1052.5" y2="692" stroke="#000" stroke-width="1" shape-rendering="crispEdges" /><line x1="1096.5" y1="684" x2="1096.5" y2="688" stroke="#000" stroke-width="1" shape-rendering="crispEdges" /><line x1="1140.5" y1="684" x2="1140.5" y2="688" stroke="#000" stroke-width="1" shape-rendering="crispEdges" /><line x1="1184.5" y1="684" x2="1184.5" y2="688" stroke="#000" stroke-width="1" shape-rendering="crispEdges" /><line x1="1228.5" y1="684" x2="1228.5" y2="688" stroke="#000" stroke-width="1" shape-rendering="crispEdges" /></svg>
<div class="t" style="left:601.1px;top:694.0px;height:18px;line-height:18px;font-size:12px;letter-spacing:0.841px;color:#000;">0.05</div>
<div class="t" style="left:824.2px;top:694.0px;height:18px;line-height:18px;font-size:12px;letter-spacing:0.801px;color:#000;">0.1</div>
<div class="t" style="left:1039.5px;top:694.0px;height:18px;line-height:18px;font-size:12px;letter-spacing:0.841px;color:#000;">0.15</div>
<div class="t" style="left:776.2px;top:711.0px;height:18px;line-height:18px;font-size:12px;letter-spacing:1.298px;color:#000;font-weight:bold;">q (1/Angstrom)</div>
</body></html>
